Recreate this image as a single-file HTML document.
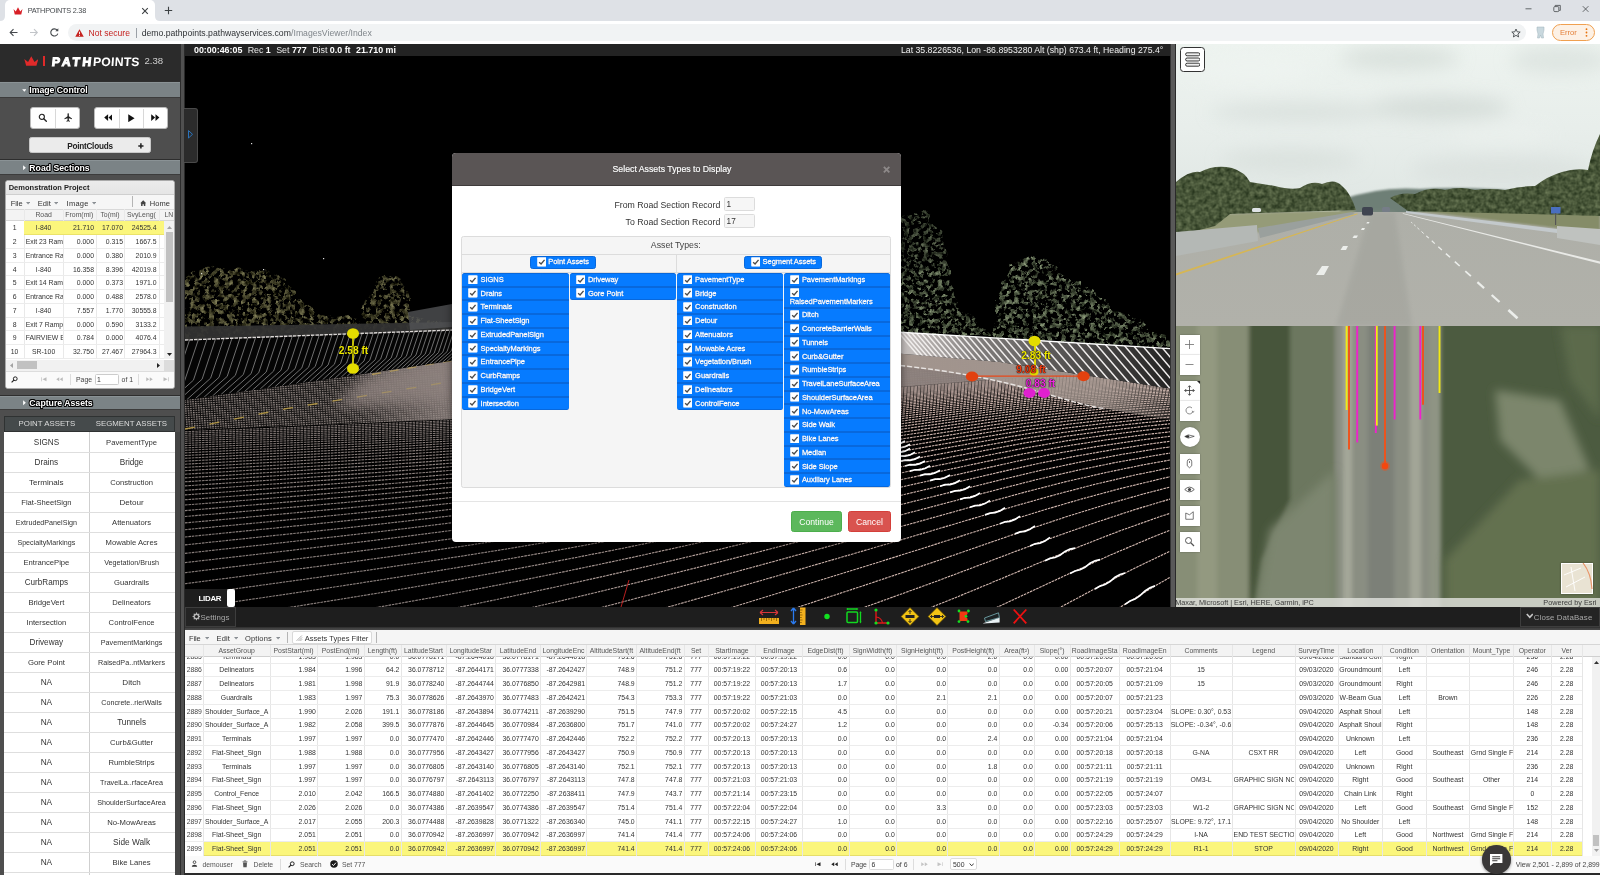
<!DOCTYPE html>
<html lang="en"><head><meta charset="utf-8"><title>PATHPOINTS 2.38</title>
<style>
*{box-sizing:border-box}
html,body{margin:0;padding:0}
body{will-change:transform;width:1600px;height:875px;overflow:hidden;background:#3f3f3f;font-family:"Liberation Sans",sans-serif;position:relative;color:#222}
.a{position:absolute}
.t{position:absolute;white-space:nowrap;line-height:1}
svg{display:block}
/* chrome */
#tabstrip{left:0;top:0;width:1600px;height:21px;background:#dee1e6}
#tab{left:5px;top:0;width:150px;height:21px;background:#fff;border-radius:5px 5px 0 0}
#tbar{left:0;top:21px;width:1600px;height:23px;background:#fff}
#omni{left:68px;top:24px;width:1458px;height:17px;border-radius:9px;background:#f1f3f4}
/* sidebar */
#side{left:0;top:44px;width:180px;height:831px;background:#4e4e4e}
#logo{left:0;top:0;width:180px;height:37px;background:#2b2b2b}
.sh{left:0;width:180px;height:16px;background:#7b8386;border-top:1px solid #333;border-bottom:1px solid #3a3a3a}
.sh span{position:absolute;left:29px;top:2px;font-size:10.3px;font-weight:bold;color:#fff;white-space:nowrap;line-height:1;text-shadow:-0.7px -0.7px 0.3px #000,0.7px -0.7px 0.3px #000,-0.7px 0.7px 0.3px #000,0.7px 0.7px 0.3px #000,0 0.9px 0.3px #000,0 -0.9px 0.3px #000}
.bg{background:#fff;border-radius:3px;border:1px solid #ccc}
</style></head><body>

<div class="a" id="tabstrip"></div><div class="a" id="tab"></div><div class="a" id="tbar"></div><div class="a" id="omni"></div>
<svg class="a" style="left:0;top:0" width="170" height="21"><path d="M0 21 Q5 21 5 16 L5 21Z M160 21 Q155 21 155 16 L155 21Z" fill="#fff"/></svg>
<svg class="a" style="left:12.5px;top:6.5px" width="10" height="8" viewBox="0 0 20 16"><path d="M1 4 L5.5 9 L10 0.5 L14.5 9 L19 4 L16.5 15 L3.5 15Z" fill="#d81f26"/></svg>
<span class="t" style="left:27.70px;top:7.00px;font-size:7.300px;color:#45494d;letter-spacing:-0.233px;">PATHPOINTS 2.38</span>
<svg class="a" style="left:141px;top:7px" width="8" height="8" viewBox="0 0 8 8"><path d="M1.2 1.2L6.8 6.8M6.8 1.2L1.2 6.8" stroke="#3c4043" stroke-width="1.1"/></svg>
<svg class="a" style="left:164px;top:6px" width="9" height="9" viewBox="0 0 9 9"><path d="M4.5 0.8V8.2M0.8 4.5H8.2" stroke="#3c4043" stroke-width="1.1"/></svg>
<svg class="a" style="left:1520px;top:3px" width="76" height="14" viewBox="0 0 76 14"><path d="M5.5 5.8H11.5" stroke="#44474a" stroke-width="0.8" fill="none"/><rect x="33.8" y="3.6" width="5" height="5" rx="1" stroke="#44474a" stroke-width="0.8" fill="none"/><path d="M35.2 3.4V2.4H40.3V7.4H39.2" stroke="#44474a" stroke-width="0.8" fill="none"/><path d="M62.8 3.2L68.4 8.8M68.4 3.2L62.8 8.8" stroke="#44474a" stroke-width="0.8"/></svg>
<svg class="a" style="left:8px;top:26px" width="60" height="13" viewBox="0 0 60 13"><g fill="none" stroke-width="1.1"><path d="M9.5 6.5H2.5M5.5 3.2L2.2 6.5L5.5 9.8" stroke="#45494d"/><path d="M22 6.5H29M26 3.2L29.3 6.5L26 9.8" stroke="#c2c5c9"/><path d="M49.2 4.2A3.6 3.6 0 1 0 49.8 7.6" stroke="#45494d"/></g><path d="M50.3 2.3V5.3H47.3Z" fill="#45494d"/></svg>
<svg class="a" style="left:74.5px;top:28.6px" width="9" height="8" viewBox="0 0 18 16"><path d="M9 0.5L17.5 15.5H0.5Z" fill="#c5221f"/><path d="M9 5.5V10.5M9 12V13.8" stroke="#fff" stroke-width="1.8"/></svg>
<span class="t" style="left:88.60px;top:29.00px;font-size:8.560px;color:#c5221f;letter-spacing:0.001px;">Not secure</span>
<div class="a " style="left:135.60px;top:27.50px;width:0.80px;height:10.00px;background:#9aa0a6"></div>
<span class="t" style="left:141.70px;top:29.00px;font-size:8.670px;color:#303336;">demo.pathpoints.pathwayservices.com</span>
<span class="t" style="left:291.08px;top:29.00px;font-size:8.670px;color:#80868b;">/ImagesViewer/Index</span>
<svg class="a" style="left:1510.5px;top:27.5px" width="10" height="10" viewBox="0 0 20 20"><path d="M10 2L12.4 7.6L18.4 8.1L13.8 12L15.2 17.9L10 14.7L4.8 17.9L6.2 12L1.6 8.1L7.6 7.6Z" fill="none" stroke="#45494d" stroke-width="1.8"/></svg>
<svg class="a" style="left:1535px;top:26px" width="11" height="13" viewBox="0 0 11 13"><path d="M2 1H9V4L8 8L8.5 12H6.5L5.5 9L4.5 12H2.5L3 8L2 4Z" fill="#c9d8de" stroke="#9fb2ba" stroke-width="0.5"/></svg>
<div class="a " style="left:1552.00px;top:23.80px;width:43.00px;height:16.80px;border:1px solid #f0a050;border-radius:9px;background:#fdf1e5"></div>
<span class="t" style="left:1560.00px;top:29.00px;font-size:7.600px;color:#e3803a;">Error</span>
<svg class="a" style="left:1585px;top:28px" width="3" height="9" viewBox="0 0 3 9"><circle cx="1.5" cy="1.2" r="0.9" fill="#e8710a"/><circle cx="1.5" cy="4.5" r="0.9" fill="#e8710a"/><circle cx="1.5" cy="7.8" r="0.9" fill="#e8710a"/></svg>
<div class="a" id="side"><div class="a" id="logo"></div></div>
<div class="a " style="left:180.00px;top:44.00px;width:5.00px;height:831.00px;background:#505050;border-left:1px solid #2c2c2c;border-right:0.6px solid #2a2a2a"></div>
<svg class="a" style="left:23.8px;top:55.8px" width="14.6" height="9.9" viewBox="0 0 27 21" preserveAspectRatio="none"><path d="M0.5 6.5 L7.5 12.5 L13.5 0.5 L19.5 12.5 L26.5 6.5 L23 20.5 L4 20.5Z" fill="#e02a2a"/></svg>
<div class="a " style="left:43.40px;top:56.40px;width:1.80px;height:9.80px;background:#e02a2a"></div>
<span class="t" style="left:52.00px;top:56.00px;font-size:12.200px;color:#fff;font-weight:bold;letter-spacing:2.650px;-webkit-text-stroke:1px #fff;transform:skewX(-6deg);">PATH</span>
<span class="t" style="left:92.60px;top:56.00px;font-size:12.200px;color:#fff;font-weight:bold;letter-spacing:0.231px;transform:skewX(-4deg);">POINTS</span>
<span class="t" style="left:144.60px;top:56.00px;font-size:9.600px;color:#cfcfcf;letter-spacing:-0.071px;">2.38</span>
<div class="a " style="left:0.00px;top:82.00px;width:180.00px;height:15.90px;background:#7b8386;border-top:0.8px solid #8a9295;border-bottom:0.6px solid #3c3c3c"></div><div class="a " style="left:0.00px;top:80.80px;width:180.00px;height:1.20px;background:#2e2e2e"></div><svg class="a" style="left:21.8px;top:88.50px" width="4.6" height="3" viewBox="0 0 6 4"><path d="M0.2 0.2H5.8L3 3.8Z" fill="#fff"/></svg><span class="t" style="left:29.30px;top:86.00px;font-size:8.700px;color:#fff;font-weight:bold;text-shadow:-0.8px -0.8px 0.2px #000,0.8px -0.8px 0.2px #000,-0.8px 0.8px 0.2px #000,0.8px 0.8px 0.2px #000,0 1px 0.2px #000,0 -1px 0.2px #000,1px 0 0.2px #000,-1px 0 0.2px #000;">Image Control</span>
<div class="a " style="left:0.00px;top:160.20px;width:180.00px;height:14.70px;background:#7b8386;border-top:0.8px solid #8a9295;border-bottom:0.6px solid #3c3c3c"></div><div class="a " style="left:0.00px;top:159.00px;width:180.00px;height:1.20px;background:#2e2e2e"></div><svg class="a" style="left:23.4px;top:164.80px" width="3" height="5.400" viewBox="0 0 4 7"><path d="M0.2 0.2V6.8L3.8 3.500Z" fill="#fff"/></svg><span class="t" style="left:29.30px;top:164.00px;font-size:8.700px;color:#fff;font-weight:bold;text-shadow:-0.8px -0.8px 0.2px #000,0.8px -0.8px 0.2px #000,-0.8px 0.8px 0.2px #000,0.8px 0.8px 0.2px #000,0 1px 0.2px #000,0 -1px 0.2px #000,1px 0 0.2px #000,-1px 0 0.2px #000;">Road Sections</span>
<div class="a " style="left:0.00px;top:396.20px;width:180.00px;height:14.20px;background:#7b8386;border-top:0.8px solid #8a9295;border-bottom:0.6px solid #3c3c3c"></div><div class="a " style="left:0.00px;top:395.00px;width:180.00px;height:1.20px;background:#2e2e2e"></div><svg class="a" style="left:23.4px;top:400.20px" width="3" height="5.400" viewBox="0 0 4 7"><path d="M0.2 0.2V6.8L3.8 3.500Z" fill="#fff"/></svg><span class="t" style="left:29.30px;top:399.00px;font-size:8.700px;color:#fff;font-weight:bold;text-shadow:-0.8px -0.8px 0.2px #000,0.8px -0.8px 0.2px #000,-0.8px 0.8px 0.2px #000,0.8px 0.8px 0.2px #000,0 1px 0.2px #000,0 -1px 0.2px #000,1px 0 0.2px #000,-1px 0 0.2px #000;">Capture Assets</span>
<div class="a " style="left:30.20px;top:107.30px;width:49.40px;height:21.60px;background:#fff;border-radius:3px;border:0.6px solid #bbb"></div>
<div class="a " style="left:54.60px;top:108.50px;width:0.70px;height:19.20px;background:#d8d8d8"></div>
<div class="a " style="left:94.30px;top:107.30px;width:74.20px;height:21.60px;background:#fff;border-radius:3px;border:0.6px solid #bbb"></div>
<div class="a " style="left:119.20px;top:108.50px;width:0.70px;height:19.20px;background:#d8d8d8"></div>
<div class="a " style="left:143.20px;top:108.50px;width:0.70px;height:19.20px;background:#d8d8d8"></div>
<svg class="a" style="left:38.4px;top:112.8px" width="9.4" height="9.4" viewBox="0 0 22 22"><circle cx="9" cy="9" r="6" fill="none" stroke="#222" stroke-width="2.6"/><path d="M13.5 13.5L19.5 19.5" stroke="#222" stroke-width="3.2" stroke-linecap="round"/></svg>
<svg class="a" style="left:63.7px;top:113px" width="8.4" height="8.8" viewBox="0 0 21 22"><path d="M10.5 0.5C11.8 0.5 12.2 2 12.2 3.5V8L20 13.5V15.8L12.2 13V18L14.8 20V21.6L10.5 20.4L6.2 21.6V20L8.8 18V13L1 15.8V13.5L8.8 8V3.5C8.8 2 9.2 0.5 10.5 0.5Z" fill="#222"/></svg>
<svg class="a" style="left:103.9px;top:114.1px" width="8.6" height="7.2" viewBox="0 0 22 18" preserveAspectRatio="none"><path d="M10.5 0.5V17.5L0.5 9Z M21.5 0.5V17.5L11.5 9Z" fill="#111"/></svg>
<svg class="a" style="left:128.2px;top:113.5px" width="6.8" height="8.4" viewBox="0 0 15 20" preserveAspectRatio="none"><path d="M0.5 0.5V19.5L14.5 10Z" fill="#111"/></svg>
<svg class="a" style="left:151px;top:114.1px" width="8.6" height="7.2" viewBox="0 0 22 18" preserveAspectRatio="none"><path d="M0.5 0.5V17.5L10.5 9Z M11.5 0.5V17.5L21.5 9Z" fill="#111"/></svg>
<div class="a " style="left:29.00px;top:137.00px;width:122.00px;height:16.40px;background:#ebebeb;border-radius:2.5px;border:0.6px solid #c8c8c8"></div>
<span class="t" style="left:67.20px;top:143.00px;font-size:8.200px;color:#222;font-weight:bold;letter-spacing:-0.244px;">PointClouds</span>
<svg class="a" style="left:138.3px;top:142.9px" width="5.8" height="5.8" viewBox="0 0 10 10"><path d="M5 0.5V9.5M0.5 5H9.5" stroke="#222" stroke-width="2.6"/></svg>
<div class="a " style="left:5.40px;top:180.00px;width:169.60px;height:208.60px;background:#fff;border-radius:3px;border:0.6px solid #aaa;overflow:hidden"></div>
<div class="a " style="left:6.00px;top:180.60px;width:168.40px;height:14.00px;background:linear-gradient(#ececec,#e5e5e5);border-bottom:0.6px solid #cfcfcf;border-radius:2.5px 2.5px 0 0"></div>
<span class="t" style="left:8.70px;top:184.00px;font-size:7.500px;color:#222;font-weight:bold;letter-spacing:0.018px;">Demonstration Project</span>
<div class="a " style="left:6.00px;top:194.60px;width:168.40px;height:15.10px;background:#f6f6f6;border-bottom:0.6px solid #d9d9d9"></div>
<span class="t" style="left:10.70px;top:200.00px;font-size:7.500px;color:#333;letter-spacing:-0.046px;">File</span><svg class="a" style="left:26.00px;top:202.10px" width="4.2" height="2.6" viewBox="0 0 8 5"><path d="M0 0H8L4 5Z" fill="#8a8f94"/></svg>
<span class="t" style="left:37.70px;top:200.00px;font-size:7.500px;color:#333;letter-spacing:0.069px;">Edit</span><svg class="a" style="left:54.30px;top:202.10px" width="4.2" height="2.6" viewBox="0 0 8 5"><path d="M0 0H8L4 5Z" fill="#8a8f94"/></svg>
<span class="t" style="left:66.60px;top:200.00px;font-size:7.500px;color:#333;letter-spacing:0.231px;">Image</span><svg class="a" style="left:92.00px;top:202.10px" width="4.2" height="2.6" viewBox="0 0 8 5"><path d="M0 0H8L4 5Z" fill="#8a8f94"/></svg>
<div class="a " style="left:132.00px;top:196.00px;width:0.70px;height:11.00px;background:#b5b5b5"></div>
<svg class="a" style="left:139.6px;top:200px" width="6.4" height="6.4" viewBox="0 0 12 12"><path d="M6 0.5L11.5 6H10V11.5H7.2V7.8H4.8V11.5H2V6H0.5Z" fill="#444"/></svg>
<span class="t" style="left:149.80px;top:200.00px;font-size:7.500px;color:#333;letter-spacing:-0.001px;">Home</span>
<div class="a " style="left:6.00px;top:209.70px;width:168.40px;height:11.10px;background:#f3f3f3;border-bottom:0.6px solid #d6d6d6"></div>
<div class="a " style="left:24.30px;top:209.40px;width:0.60px;height:149.20px;background:#e9e9e9"></div>
<div class="a " style="left:62.90px;top:209.40px;width:0.60px;height:149.20px;background:#e9e9e9"></div>
<div class="a " style="left:95.70px;top:209.40px;width:0.60px;height:149.20px;background:#e9e9e9"></div>
<div class="a " style="left:124.30px;top:209.40px;width:0.60px;height:149.20px;background:#e9e9e9"></div>
<div class="a " style="left:158.60px;top:209.40px;width:0.60px;height:149.20px;background:#e9e9e9"></div>
<span class="t" style="left:35.38px;top:212.00px;font-size:6.875px;color:#555;">Road</span>
<span class="t" style="left:65.36px;top:212.00px;font-size:6.875px;color:#555;">From(mi)</span>
<span class="t" style="left:100.45px;top:212.00px;font-size:6.875px;color:#555;">To(mi)</span>
<span class="t" style="left:126.88px;top:212.00px;font-size:6.875px;color:#555;">SvyLeng(</span>
<span class="t" style="left:164.50px;top:212.00px;font-size:6.875px;color:#555;">LN</span>
<div class="a " style="left:24.30px;top:221.00px;width:139.70px;height:13.75px;background:#fbf67c;border-bottom:0.6px solid #ebe36a"></div>
<span class="t" style="left:12.69px;top:225.00px;font-size:6.875px;color:#333;">1</span>
<span class="t" style="left:35.77px;top:225.00px;font-size:6.875px;color:#333;">I-840</span>
<span class="t" style="left:72.97px;top:225.00px;font-size:6.875px;color:#333;">21.710</span>
<span class="t" style="left:101.97px;top:225.00px;font-size:6.875px;color:#333;">17.070</span>
<span class="t" style="left:131.75px;top:225.00px;font-size:6.875px;color:#333;">24525.4</span>
<div class="a " style="left:6.00px;top:247.90px;width:158.00px;height:0.60px;background:#ececec"></div>
<span class="t" style="left:12.69px;top:239.00px;font-size:6.875px;color:#333;">2</span>
<div class="a" style="left:25.70px;top:235px;width:36.90px;height:12px;overflow:hidden"><span class="t" style="left:0.00px;top:4.00px;font-size:6.875px;color:#333;">Exit 23 Ram</span></div>
<span class="t" style="left:76.80px;top:239.00px;font-size:6.875px;color:#333;">0.000</span>
<span class="t" style="left:105.80px;top:239.00px;font-size:6.875px;color:#333;">0.315</span>
<span class="t" style="left:135.57px;top:239.00px;font-size:6.875px;color:#333;">1667.5</span>
<div class="a " style="left:6.00px;top:261.65px;width:158.00px;height:0.60px;background:#ececec"></div>
<span class="t" style="left:12.69px;top:253.00px;font-size:6.875px;color:#333;">3</span>
<div class="a" style="left:25.70px;top:249px;width:36.90px;height:12px;overflow:hidden"><span class="t" style="left:0.00px;top:4.00px;font-size:6.875px;color:#333;">Entrance Ra</span></div>
<span class="t" style="left:76.80px;top:253.00px;font-size:6.875px;color:#333;">0.000</span>
<span class="t" style="left:105.80px;top:253.00px;font-size:6.875px;color:#333;">0.380</span>
<span class="t" style="left:135.57px;top:253.00px;font-size:6.875px;color:#333;">2010.9</span>
<div class="a " style="left:6.00px;top:275.40px;width:158.00px;height:0.60px;background:#ececec"></div>
<span class="t" style="left:12.69px;top:267.00px;font-size:6.875px;color:#333;">4</span>
<span class="t" style="left:35.77px;top:267.00px;font-size:6.875px;color:#333;">I-840</span>
<span class="t" style="left:72.97px;top:267.00px;font-size:6.875px;color:#333;">16.358</span>
<span class="t" style="left:105.80px;top:267.00px;font-size:6.875px;color:#333;">8.396</span>
<span class="t" style="left:131.75px;top:267.00px;font-size:6.875px;color:#333;">42019.8</span>
<div class="a " style="left:6.00px;top:289.15px;width:158.00px;height:0.60px;background:#ececec"></div>
<span class="t" style="left:12.69px;top:280.00px;font-size:6.875px;color:#333;">5</span>
<div class="a" style="left:25.70px;top:277px;width:36.90px;height:12px;overflow:hidden"><span class="t" style="left:0.00px;top:3.00px;font-size:6.875px;color:#333;">Exit 14 Ram</span></div>
<span class="t" style="left:76.80px;top:280.00px;font-size:6.875px;color:#333;">0.000</span>
<span class="t" style="left:105.80px;top:280.00px;font-size:6.875px;color:#333;">0.373</span>
<span class="t" style="left:135.57px;top:280.00px;font-size:6.875px;color:#333;">1971.0</span>
<div class="a " style="left:6.00px;top:302.90px;width:158.00px;height:0.60px;background:#ececec"></div>
<span class="t" style="left:12.69px;top:294.00px;font-size:6.875px;color:#333;">6</span>
<div class="a" style="left:25.70px;top:290px;width:36.90px;height:12px;overflow:hidden"><span class="t" style="left:0.00px;top:4.00px;font-size:6.875px;color:#333;">Entrance Ra</span></div>
<span class="t" style="left:76.80px;top:294.00px;font-size:6.875px;color:#333;">0.000</span>
<span class="t" style="left:105.80px;top:294.00px;font-size:6.875px;color:#333;">0.488</span>
<span class="t" style="left:135.57px;top:294.00px;font-size:6.875px;color:#333;">2578.0</span>
<div class="a " style="left:6.00px;top:316.65px;width:158.00px;height:0.60px;background:#ececec"></div>
<span class="t" style="left:12.69px;top:308.00px;font-size:6.875px;color:#333;">7</span>
<span class="t" style="left:35.77px;top:308.00px;font-size:6.875px;color:#333;">I-840</span>
<span class="t" style="left:76.80px;top:308.00px;font-size:6.875px;color:#333;">7.557</span>
<span class="t" style="left:105.80px;top:308.00px;font-size:6.875px;color:#333;">1.770</span>
<span class="t" style="left:131.75px;top:308.00px;font-size:6.875px;color:#333;">30555.8</span>
<div class="a " style="left:6.00px;top:330.40px;width:158.00px;height:0.60px;background:#ececec"></div>
<span class="t" style="left:12.69px;top:322.00px;font-size:6.875px;color:#333;">8</span>
<div class="a" style="left:25.70px;top:318px;width:36.90px;height:12px;overflow:hidden"><span class="t" style="left:0.00px;top:4.00px;font-size:6.875px;color:#333;">Exit 7 Ramp</span></div>
<span class="t" style="left:76.80px;top:322.00px;font-size:6.875px;color:#333;">0.000</span>
<span class="t" style="left:105.80px;top:322.00px;font-size:6.875px;color:#333;">0.590</span>
<span class="t" style="left:135.57px;top:322.00px;font-size:6.875px;color:#333;">3133.2</span>
<div class="a " style="left:6.00px;top:344.15px;width:158.00px;height:0.60px;background:#ececec"></div>
<span class="t" style="left:12.69px;top:335.00px;font-size:6.875px;color:#333;">9</span>
<div class="a" style="left:25.70px;top:332px;width:36.90px;height:12px;overflow:hidden"><span class="t" style="left:0.00px;top:3.00px;font-size:6.875px;color:#333;">FAIRVIEW E</span></div>
<span class="t" style="left:76.80px;top:335.00px;font-size:6.875px;color:#333;">0.784</span>
<span class="t" style="left:105.80px;top:335.00px;font-size:6.875px;color:#333;">0.000</span>
<span class="t" style="left:135.57px;top:335.00px;font-size:6.875px;color:#333;">4076.4</span>
<div class="a " style="left:6.00px;top:357.90px;width:158.00px;height:0.60px;background:#ececec"></div>
<span class="t" style="left:10.78px;top:349.00px;font-size:6.875px;color:#333;">10</span>
<span class="t" style="left:31.95px;top:349.00px;font-size:6.875px;color:#333;">SR-100</span>
<span class="t" style="left:72.97px;top:349.00px;font-size:6.875px;color:#333;">32.750</span>
<span class="t" style="left:101.97px;top:349.00px;font-size:6.875px;color:#333;">27.467</span>
<span class="t" style="left:131.75px;top:349.00px;font-size:6.875px;color:#333;">27964.3</span>
<div class="a " style="left:164.30px;top:221.00px;width:9.60px;height:137.60px;background:#f1f1f1"></div>
<div class="a " style="left:165.60px;top:232.30px;width:7.00px;height:69.70px;background:#c1c1c1"></div>
<svg class="a" style="left:166.6px;top:225.5px" width="5" height="3" viewBox="0 0 10 6"><path d="M0 6H10L5 0Z" fill="#a3a3a3"/></svg>
<svg class="a" style="left:166.6px;top:352.8px" width="5" height="3" viewBox="0 0 10 6"><path d="M0 0H10L5 6Z" fill="#222"/></svg>
<div class="a " style="left:6.00px;top:359.80px;width:158.30px;height:10.80px;background:#f1f1f1"></div>
<div class="a " style="left:164.30px;top:359.80px;width:9.60px;height:10.80px;background:#dcdcdc"></div>
<div class="a " style="left:16.60px;top:361.00px;width:20.60px;height:8.20px;background:#c1c1c1"></div>
<svg class="a" style="left:9.6px;top:362.6px" width="3" height="5" viewBox="0 0 6 10"><path d="M6 0V10L0 5Z" fill="#a3a3a3"/></svg>
<svg class="a" style="left:157.2px;top:362.6px" width="3" height="5" viewBox="0 0 6 10"><path d="M0 0V10L6 5Z" fill="#222"/></svg>
<div class="a " style="left:6.00px;top:370.60px;width:168.40px;height:17.40px;background:#fafafa;border-top:0.6px solid #ddd;border-radius:0 0 2.5px 2.5px"></div>
<svg class="a" style="left:11.2px;top:376px" width="7" height="7" viewBox="0 0 14 14"><circle cx="8.5" cy="5.5" r="3.8" fill="none" stroke="#222" stroke-width="2"/><path d="M5.8 8.2L1.2 12.8" stroke="#222" stroke-width="2.4"/></svg>
<svg class="a" style="left:41px;top:377.2px" width="6" height="4.6" viewBox="0 0 12 9"><path d="M0.5 0.5V8.5" stroke="#bbb" stroke-width="1.6"/><path d="M11 0.5V8.5L3 4.5Z" fill="#bbb"/></svg>
<svg class="a" style="left:56.4px;top:377.2px" width="7" height="4.6" viewBox="0 0 14 9"><path d="M6.5 0.5V8.5L0.5 4.5Z M13.5 0.5V8.5L7.5 4.5Z" fill="#bbb"/></svg>
<div class="a " style="left:70.00px;top:373.80px;width:0.60px;height:11.00px;background:#ddd"></div>
<span class="t" style="left:76.00px;top:377.00px;font-size:6.875px;color:#444;">Page</span>
<div class="a " style="left:95.00px;top:373.60px;width:24.40px;height:11.40px;background:#fff;border:0.6px solid #ccc;border-radius:1.5px"></div>
<span class="t" style="left:97.00px;top:377.00px;font-size:6.875px;color:#333;">1</span>
<span class="t" style="left:121.60px;top:377.00px;font-size:6.875px;color:#444;">of 1</span>
<div class="a " style="left:138.00px;top:373.80px;width:0.60px;height:11.00px;background:#ddd"></div>
<svg class="a" style="left:146px;top:377.2px" width="7" height="4.6" viewBox="0 0 14 9"><path d="M0.5 0.5V8.5L6.5 4.5Z M7.5 0.5V8.5L13.5 4.5Z" fill="#bbb"/></svg>
<svg class="a" style="left:163px;top:377.2px" width="6" height="4.6" viewBox="0 0 12 9"><path d="M11.5 0.5V8.5" stroke="#bbb" stroke-width="1.6"/><path d="M1 0.5V8.5L9 4.5Z" fill="#bbb"/></svg>
<div class="a " style="left:174.00px;top:432.00px;width:6.00px;height:443.00px;background:#444444"></div>
<div class="a " style="left:4.00px;top:416.30px;width:170.60px;height:15.40px;background:#454a4b;border:0.6px solid #2f3232"></div>
<span class="t" style="left:18.62px;top:420.00px;font-size:7.850px;color:#dcdcdc;">POINT ASSETS</span>
<span class="t" style="left:95.70px;top:420.00px;font-size:7.850px;color:#dcdcdc;">SEGMENT ASSETS</span>
<div class="a " style="left:4.00px;top:431.60px;width:170.60px;height:443.40px;background:#fff"></div>
<div class="a " style="left:88.60px;top:431.60px;width:0.80px;height:443.40px;background:#cfcfcf"></div>
<div class="a " style="left:4.00px;top:451.60px;width:170.60px;height:0.70px;background:#dedede"></div>
<span class="t" style="left:33.70px;top:439.00px;font-size:8.160px;color:#333;">SIGNS</span>
<span class="t" style="left:106.05px;top:439.00px;font-size:7.660px;color:#333;">PavementType</span>
<div class="a " style="left:4.00px;top:471.60px;width:170.60px;height:0.70px;background:#dedede"></div>
<span class="t" style="left:34.55px;top:459.00px;font-size:8.200px;color:#333;">Drains</span>
<span class="t" style="left:119.75px;top:459.00px;font-size:8.200px;color:#333;">Bridge</span>
<div class="a " style="left:4.00px;top:491.60px;width:170.60px;height:0.70px;background:#dedede"></div>
<span class="t" style="left:29.09px;top:479.00px;font-size:8.090px;color:#333;">Terminals</span>
<span class="t" style="left:110.16px;top:479.00px;font-size:7.640px;color:#333;">Construction</span>
<div class="a " style="left:4.00px;top:511.60px;width:170.60px;height:0.70px;background:#dedede"></div>
<span class="t" style="left:21.27px;top:499.00px;font-size:7.600px;color:#333;">Flat-SheetSign</span>
<span class="t" style="left:119.44px;top:499.00px;font-size:8.100px;color:#333;">Detour</span>
<div class="a " style="left:4.00px;top:531.60px;width:170.60px;height:0.70px;background:#dedede"></div>
<span class="t" style="left:15.71px;top:520.00px;font-size:7.170px;color:#333;">ExtrudedPanelSign</span>
<span class="t" style="left:112.04px;top:519.00px;font-size:7.650px;color:#333;">Attenuators</span>
<div class="a " style="left:4.00px;top:551.60px;width:170.60px;height:0.70px;background:#dedede"></div>
<span class="t" style="left:17.39px;top:540.00px;font-size:7.150px;color:#333;">SpecialtyMarkings</span>
<span class="t" style="left:105.60px;top:539.00px;font-size:7.670px;color:#333;">Mowable Acres</span>
<div class="a " style="left:4.00px;top:571.60px;width:170.60px;height:0.70px;background:#dedede"></div>
<span class="t" style="left:23.41px;top:559.00px;font-size:7.660px;color:#333;">EntrancePipe</span>
<span class="t" style="left:104.14px;top:559.00px;font-size:7.210px;color:#333;">Vegetation/Brush</span>
<div class="a " style="left:4.00px;top:591.60px;width:170.60px;height:0.70px;background:#dedede"></div>
<span class="t" style="left:24.69px;top:579.00px;font-size:8.140px;color:#333;">CurbRamps</span>
<span class="t" style="left:114.05px;top:579.00px;font-size:7.610px;color:#333;">Guardrails</span>
<div class="a " style="left:4.00px;top:611.60px;width:170.60px;height:0.70px;background:#dedede"></div>
<span class="t" style="left:28.40px;top:599.00px;font-size:7.710px;color:#333;">BridgeVert</span>
<span class="t" style="left:112.30px;top:599.00px;font-size:7.630px;color:#333;">Delineators</span>
<div class="a " style="left:4.00px;top:631.60px;width:170.60px;height:0.70px;background:#dedede"></div>
<span class="t" style="left:26.55px;top:619.00px;font-size:7.680px;color:#333;">Intersection</span>
<span class="t" style="left:108.61px;top:619.00px;font-size:7.660px;color:#333;">ControlFence</span>
<div class="a " style="left:4.00px;top:651.60px;width:170.60px;height:0.70px;background:#dedede"></div>
<span class="t" style="left:29.60px;top:639.00px;font-size:8.170px;color:#333;">Driveway</span>
<span class="t" style="left:100.79px;top:639.00px;font-size:7.200px;color:#333;">PavementMarkings</span>
<div class="a " style="left:4.00px;top:671.60px;width:170.60px;height:0.70px;background:#dedede"></div>
<span class="t" style="left:27.90px;top:659.00px;font-size:7.740px;color:#333;">Gore Point</span>
<span class="t" style="left:97.99px;top:659.00px;font-size:7.200px;color:#333;">RaisedPa..ntMarkers</span>
<div class="a " style="left:4.00px;top:691.60px;width:170.60px;height:0.70px;background:#dedede"></div>
<span class="t" style="left:40.65px;top:679.00px;font-size:8.280px;color:#333;">NA</span>
<span class="t" style="left:122.35px;top:679.00px;font-size:8.120px;color:#333;">Ditch</span>
<div class="a " style="left:4.00px;top:711.60px;width:170.60px;height:0.70px;background:#dedede"></div>
<span class="t" style="left:40.65px;top:699.00px;font-size:8.280px;color:#333;">NA</span>
<span class="t" style="left:101.34px;top:700.00px;font-size:7.150px;color:#333;">Concrete..rierWalls</span>
<div class="a " style="left:4.00px;top:731.60px;width:170.60px;height:0.70px;background:#dedede"></div>
<span class="t" style="left:40.65px;top:719.00px;font-size:8.280px;color:#333;">NA</span>
<span class="t" style="left:117.15px;top:719.00px;font-size:8.210px;color:#333;">Tunnels</span>
<div class="a " style="left:4.00px;top:751.60px;width:170.60px;height:0.70px;background:#dedede"></div>
<span class="t" style="left:40.65px;top:739.00px;font-size:8.280px;color:#333;">NA</span>
<span class="t" style="left:110.05px;top:739.00px;font-size:7.680px;color:#333;">Curb&amp;Gutter</span>
<div class="a " style="left:4.00px;top:771.60px;width:170.60px;height:0.70px;background:#dedede"></div>
<span class="t" style="left:40.65px;top:759.00px;font-size:8.280px;color:#333;">NA</span>
<span class="t" style="left:108.49px;top:759.00px;font-size:7.700px;color:#333;">RumbleStrips</span>
<div class="a " style="left:4.00px;top:791.60px;width:170.60px;height:0.70px;background:#dedede"></div>
<span class="t" style="left:40.65px;top:779.00px;font-size:8.280px;color:#333;">NA</span>
<span class="t" style="left:100.12px;top:779.00px;font-size:7.200px;color:#333;">TravelLa..rfaceArea</span>
<div class="a " style="left:4.00px;top:811.60px;width:170.60px;height:0.70px;background:#dedede"></div>
<span class="t" style="left:40.65px;top:799.00px;font-size:8.280px;color:#333;">NA</span>
<span class="t" style="left:97.28px;top:800.00px;font-size:7.180px;color:#333;">ShoulderSurfaceArea</span>
<div class="a " style="left:4.00px;top:831.60px;width:170.60px;height:0.70px;background:#dedede"></div>
<span class="t" style="left:40.65px;top:819.00px;font-size:8.280px;color:#333;">NA</span>
<span class="t" style="left:107.24px;top:819.00px;font-size:7.690px;color:#333;">No-MowAreas</span>
<div class="a " style="left:4.00px;top:851.60px;width:170.60px;height:0.70px;background:#dedede"></div>
<span class="t" style="left:40.65px;top:839.00px;font-size:8.280px;color:#333;">NA</span>
<span class="t" style="left:113.10px;top:838.00px;font-size:8.290px;color:#333;">Side Walk</span>
<div class="a " style="left:4.00px;top:871.60px;width:170.60px;height:0.70px;background:#dedede"></div>
<span class="t" style="left:40.65px;top:859.00px;font-size:8.280px;color:#333;">NA</span>
<span class="t" style="left:112.55px;top:859.00px;font-size:7.700px;color:#333;">Bike Lanes</span>
<div class="a " style="left:185.00px;top:44.00px;width:985.00px;height:563.00px;background:#000;overflow:hidden"></div>
<svg class="a" style="left:185px;top:44px" width="985" height="563" viewBox="185 44 985 563">
<defs>
<filter id="tree" color-interpolation-filters="sRGB" x="-5%" y="-5%" width="110%" height="110%"><feTurbulence type="fractalNoise" baseFrequency="0.06" numOctaves="2" seed="11" result="n1"/><feDisplacementMap in="SourceGraphic" in2="n1" scale="16" xChannelSelector="R" yChannelSelector="G" result="sh"/><feTurbulence type="fractalNoise" baseFrequency="0.21" numOctaves="3" seed="4" result="n"/><feColorMatrix in="n" type="matrix" values="0.74 0 0 0 -0.11  0.73 0 0 0 -0.11  0.56 0 0 0 -0.12  0 0 0 10 -4.6" result="c"/><feComposite in="c" in2="sh" operator="in"/></filter><filter id="tree2" color-interpolation-filters="sRGB" x="-5%" y="-5%" width="110%" height="110%"><feTurbulence type="fractalNoise" baseFrequency="0.06" numOctaves="2" seed="2" result="n1"/><feDisplacementMap in="SourceGraphic" in2="n1" scale="16" xChannelSelector="R" yChannelSelector="G" result="sh"/><feTurbulence type="fractalNoise" baseFrequency="0.21" numOctaves="3" seed="8" result="n"/><feColorMatrix in="n" type="matrix" values="0.80 0 0 0 -0.12  0.86 0 0 0 -0.11  0.72 0 0 0 -0.12  0 0 0 10 -4.7" result="c"/><feComposite in="c" in2="sh" operator="in"/></filter>
<filter id="rough" color-interpolation-filters="sRGB" x="-5%" y="-5%" width="110%" height="110%"><feTurbulence type="fractalNoise" baseFrequency="0.5" numOctaves="2" seed="9" result="n"/><feColorMatrix in="n" type="matrix" values="0 0 0 0 0.72  0 0 0 0 0.64  0 0 0 0 0.62  0 0 0 6 -2.7" result="c"/><feComposite in="c" in2="SourceGraphic" operator="in"/></filter>
<linearGradient id="gfar" x1="0" y1="335" x2="0" y2="500" gradientUnits="userSpaceOnUse"><stop offset="0" stop-color="#a39490" stop-opacity="0.8"/><stop offset="0.35" stop-color="#9a8b88" stop-opacity="0.46"/><stop offset="0.7" stop-color="#958683" stop-opacity="0.16"/><stop offset="1" stop-color="#958683" stop-opacity="0"/></linearGradient>
<linearGradient id="rb" x1="900" y1="0" x2="1170" y2="0" gradientUnits="userSpaceOnUse"><stop offset="0" stop-color="#d8d2d0" stop-opacity="0.95"/><stop offset="0.3" stop-color="#cfc9c7" stop-opacity="0.6"/><stop offset="1" stop-color="#cfc9c7" stop-opacity="0.15"/></linearGradient>
<clipPath id="lbar"><path d="M185 340 L560 326 L560 345 L185 400Z"/></clipPath>
<clipPath id="rbar"><path d="M880 331 L1170 348.6 L1170 388.6 L1000 362 L880 352Z"/></clipPath>
<clipPath id="gr"><path d="M185 400 L560 345 L880 352 L1000 362 L1170 388.6 L1170 607 L185 607Z"/></clipPath>
</defs>
<defs><pattern id="dots" width="2.6" height="2.2" patternUnits="userSpaceOnUse" patternTransform="rotate(-4)"><rect x="0" y="0" width="1.5" height="1.2" fill="#968b87"/></pattern>
<clipPath id="gl"><rect x="185" y="300" width="455" height="310"/></clipPath><clipPath id="grr"><rect x="640" y="300" width="531" height="310"/></clipPath></defs>
<g clip-path="url(#gr)">
<defs><linearGradient id="und" x1="185" y1="0" x2="1170" y2="0" gradientUnits="userSpaceOnUse"><stop offset="0" stop-color="#0c0b0b"/><stop offset="0.17" stop-color="#1e1c1b"/><stop offset="0.27" stop-color="#7d7370"/><stop offset="0.73" stop-color="#8a7f7b"/><stop offset="1" stop-color="#5d5552"/></linearGradient></defs>
<path d="M185 300 L1170 300 L1170.0 372.0 L1130.0 372.9 L1090.0 374.2 L1050.0 375.9 L1010.0 378.3 L970.0 381.3 L930.0 384.5 L890.0 387.8 L850.0 391.4 L810.0 395.2 L770.0 399.0 L730.0 402.5 L690.0 405.6 L650.0 408.4 L610.0 410.9 L570.0 413.1 L530.0 415.3 L490.0 417.3 L450.0 419.2 L410.0 421.0 L370.0 422.7 L330.0 424.4 L290.0 426.0 L250.0 427.5 L210.0 429.0 L185 430.0 Z" fill="url(#und)"/>
<path d="M185 300 L1170 300 L1170.0 372.0 L1130.0 372.9 L1090.0 374.2 L1050.0 375.9 L1010.0 378.3 L970.0 381.3 L930.0 384.5 L890.0 387.8 L850.0 391.4 L810.0 395.2 L770.0 399.0 L730.0 402.5 L690.0 405.6 L650.0 408.4 L610.0 410.9 L570.0 413.1 L530.0 415.3 L490.0 417.3 L450.0 419.2 L410.0 421.0 L370.0 422.7 L330.0 424.4 L290.0 426.0 L250.0 427.5 L210.0 429.0 L185 430.0 Z" fill="url(#dots)"/>
<defs><linearGradient id="lg" x1="185" y1="0" x2="1170" y2="0" gradientUnits="userSpaceOnUse"><stop offset="0" stop-color="#877d7a"/><stop offset="0.3" stop-color="#8f8481"/><stop offset="0.52" stop-color="#b9a49e"/><stop offset="0.7" stop-color="#cdb3ab"/><stop offset="1" stop-color="#d2b8b0"/></linearGradient></defs>
<g fill="none" stroke="url(#lg)" stroke-width="1.12" stroke-dasharray="2.6 0.8"><path d="M1115.0 610.3 L1155.0 586.0 L1170.0 577.3" stroke-opacity="1.00"/><path d="M1055.0 610.1 L1095.0 588.7 L1135.0 568.0 L1170.0 551.2" stroke-opacity="1.00"/><path d="M990.0 610.6 L1030.0 591.9 L1070.0 573.3 L1110.0 555.2 L1150.0 538.2 L1170.0 530.3" stroke-opacity="1.00"/><path d="M920.0 611.9 L960.0 595.8 L1000.0 579.2 L1040.0 562.5 L1080.0 546.3 L1120.0 530.8 L1160.0 516.6 L1170.0 513.3" stroke-opacity="1.00"/><path d="M855.0 610.7 L895.0 596.3 L935.0 581.8 L975.0 566.8 L1015.0 551.6 L1055.0 536.8 L1095.0 522.7 L1135.0 509.5 L1170.0 499.1" stroke-opacity="1.00"/><path d="M785.0 611.4 L825.0 598.3 L865.0 585.1 L905.0 571.7 L945.0 558.2 L985.0 544.3 L1025.0 530.5 L1065.0 517.2 L1105.0 504.8 L1145.0 493.5 L1170.0 487.1" stroke-opacity="1.00"/><path d="M720.0 610.9 L760.0 598.7 L800.0 586.4 L840.0 574.1 L880.0 561.7 L920.0 549.2 L960.0 536.5 L1000.0 523.7 L1040.0 511.1 L1080.0 499.4 L1120.0 488.6 L1160.0 479.0 L1170.0 476.8" stroke-opacity="1.00"/><path d="M655.0 610.8 L695.0 599.4 L735.0 588.0 L775.0 576.5 L815.0 564.9 L855.0 553.3 L895.0 541.6 L935.0 529.8 L975.0 517.9 L1015.0 506.0 L1055.0 494.7 L1095.0 484.3 L1135.0 475.0 L1170.0 467.9" stroke-opacity="1.00"/><path d="M585.0 611.7 L625.0 601.3 L665.0 590.7 L705.0 580.1 L745.0 569.3 L785.0 558.4 L825.0 547.4 L865.0 536.4 L905.0 525.4 L945.0 514.3 L985.0 503.1 L1025.0 492.1 L1065.0 481.9 L1105.0 472.7 L1145.0 464.5 L1170.0 460.0" stroke-opacity="1.00"/><path d="M515.0 611.4 L555.0 602.2 L595.0 592.7 L635.0 583.0 L675.0 573.1 L715.0 563.1 L755.0 552.9 L795.0 542.5 L835.0 532.0 L875.0 521.6 L915.0 511.2 L955.0 500.7 L995.0 490.2 L1035.0 480.0 L1075.0 470.8 L1115.0 462.6 L1155.0 455.5 L1170.0 453.1" stroke-opacity="1.00"/><path d="M440.0 611.1 L480.0 603.0 L520.0 594.6 L560.0 586.0 L600.0 577.1 L640.0 568.0 L680.0 558.7 L720.0 549.2 L760.0 539.5 L800.0 529.6 L840.0 519.6 L880.0 509.7 L920.0 499.8 L960.0 489.9 L1000.0 480.0 L1040.0 470.5 L1080.0 462.1 L1120.0 454.7 L1160.0 448.3 L1170.0 446.9" stroke-opacity="1.00"/><path d="M355.0 611.3 L395.0 604.2 L435.0 597.0 L475.0 589.5 L515.0 581.7 L555.0 573.6 L595.0 565.3 L635.0 556.8 L675.0 548.0 L715.0 539.1 L755.0 529.9 L795.0 520.5 L835.0 510.9 L875.0 501.4 L915.0 492.0 L955.0 482.6 L995.0 473.2 L1035.0 464.2 L1075.0 456.3 L1115.0 449.3 L1155.0 443.3 L1170.0 441.3" stroke-opacity="1.00"/><path d="M260.0 612.0 L300.0 605.7 L340.0 599.3 L380.0 592.8 L420.0 586.0 L460.0 579.1 L500.0 571.9 L540.0 564.4 L580.0 556.7 L620.0 548.8 L660.0 540.6 L700.0 532.1 L740.0 523.5 L780.0 514.5 L820.0 505.4 L860.0 496.3 L900.0 487.3 L940.0 478.4 L980.0 469.4 L1020.0 460.6 L1060.0 452.8 L1100.0 446.0 L1140.0 440.1 L1170.0 436.3" stroke-opacity="1.00"/><path d="M185.0 609.0 L225.0 603.2 L265.0 597.3 L305.0 591.4 L345.0 585.4 L385.0 579.2 L425.0 572.9 L465.0 566.3 L505.0 559.5 L545.0 552.5 L585.0 545.2 L625.0 537.7 L665.0 529.9 L705.0 521.8 L745.0 513.5 L785.0 504.9 L825.0 496.1 L865.0 487.4 L905.0 478.8 L945.0 470.3 L985.0 461.8 L1025.0 453.5 L1065.0 446.2 L1105.0 440.0 L1145.0 434.6 L1170.0 431.8" stroke-opacity="1.00"/><path d="M185.0 595.8 L225.0 590.2 L265.0 584.7 L305.0 579.2 L345.0 573.5 L385.0 567.7 L425.0 561.8 L465.0 555.6 L505.0 549.2 L545.0 542.5 L585.0 535.6 L625.0 528.5 L665.0 521.1 L705.0 513.4 L745.0 505.5 L785.0 497.2 L825.0 488.7 L865.0 480.4 L905.0 472.1 L945.0 464.0 L985.0 455.8 L1025.0 448.0 L1065.0 441.1 L1105.0 435.2 L1145.0 430.3 L1170.0 427.6" stroke-opacity="1.00"/><path d="M185.0 583.7 L225.0 578.5 L265.0 573.3 L305.0 568.1 L345.0 562.8 L385.0 557.3 L425.0 551.6 L465.0 545.8 L505.0 539.7 L545.0 533.4 L585.0 526.9 L625.0 520.2 L665.0 513.1 L705.0 505.8 L745.0 498.1 L785.0 490.2 L825.0 482.0 L865.0 474.0 L905.0 466.0 L945.0 458.2 L985.0 450.4 L1025.0 442.9 L1065.0 436.4 L1105.0 430.9 L1145.0 426.3 L1170.0 423.8" stroke-opacity="1.00"/><path d="M185.0 572.7 L225.0 567.8 L265.0 562.9 L305.0 557.9 L345.0 552.9 L385.0 547.8 L425.0 542.4 L465.0 536.9 L505.0 531.1 L545.0 525.1 L585.0 518.9 L625.0 512.5 L665.0 505.8 L705.0 498.7 L745.0 491.4 L785.0 483.8 L825.0 475.9 L865.0 468.1 L905.0 460.5 L945.0 453.0 L985.0 445.5 L1025.0 438.3 L1065.0 432.2 L1105.0 427.0 L1145.0 422.6 L1170.0 420.3" stroke-opacity="1.00"/><path d="M185.0 562.6 L225.0 558.0 L265.0 553.4 L305.0 548.7 L345.0 543.9 L385.0 539.0 L425.0 533.9 L465.0 528.7 L505.0 523.2 L545.0 517.5 L585.0 511.6 L625.0 505.5 L665.0 499.0 L705.0 492.3 L745.0 485.2 L785.0 477.9 L825.0 470.2 L865.0 462.7 L905.0 455.4 L945.0 448.1 L985.0 441.0 L1025.0 434.1 L1065.0 428.2 L1105.0 423.3 L1145.0 419.3 L1170.0 417.1" stroke-opacity="1.00"/><path d="M185.0 553.4 L225.0 549.0 L265.0 544.6 L305.0 540.1 L345.0 535.6 L385.0 531.0 L425.0 526.1 L465.0 521.1 L505.0 515.9 L545.0 510.5 L585.0 504.9 L625.0 499.0 L665.0 492.8 L705.0 486.4 L745.0 479.6 L785.0 472.4 L825.0 465.0 L865.0 457.8 L905.0 450.7 L945.0 443.7 L985.0 436.8 L1025.0 430.2 L1065.0 424.6 L1105.0 420.0 L1145.0 416.1 L1170.0 414.1" stroke-opacity="1.00"/><path d="M185.0 544.9 L225.0 540.7 L265.0 536.5 L305.0 532.3 L345.0 528.0 L385.0 523.5 L425.0 518.9 L465.0 514.2 L505.0 509.2 L545.0 504.0 L585.0 498.6 L625.0 493.0 L665.0 487.1 L705.0 480.9 L745.0 474.3 L785.0 467.4 L825.0 460.2 L865.0 453.2 L905.0 446.3 L945.0 439.6 L985.0 432.9 L1025.0 426.6 L1065.0 421.3 L1105.0 416.9 L1145.0 413.3 L1170.0 411.4" stroke-opacity="1.00"/><path d="M185.0 537.0 L225.0 533.0 L265.0 529.0 L305.0 525.0 L345.0 520.9 L385.0 516.7 L425.0 512.3 L465.0 507.7 L505.0 502.9 L545.0 498.0 L585.0 492.8 L625.0 487.5 L665.0 481.8 L705.0 475.8 L745.0 469.4 L785.0 462.7 L825.0 455.7 L865.0 448.9 L905.0 442.3 L945.0 435.8 L985.0 429.4 L1025.0 423.3 L1065.0 418.2 L1105.0 414.0 L1145.0 410.6 L1170.0 408.8" stroke-opacity="1.00"/><path d="M185.0 529.7 L225.0 525.9 L265.0 522.1 L305.0 518.2 L345.0 514.3 L385.0 510.3 L425.0 506.1 L465.0 501.7 L505.0 497.1 L545.0 492.4 L585.0 487.5 L625.0 482.3 L665.0 476.8 L705.0 471.0 L745.0 464.9 L785.0 458.4 L825.0 451.6 L865.0 445.0 L905.0 438.5 L945.0 432.3 L985.0 426.1 L1025.0 420.2 L1065.0 415.3 L1105.0 411.3 L1145.0 408.1 L1170.0 406.4" stroke-opacity="1.00"/><path d="M185.0 522.9 L225.0 519.3 L265.0 515.6 L305.0 511.9 L345.0 508.2 L385.0 504.3 L425.0 500.3 L465.0 496.1 L505.0 491.7 L545.0 487.2 L585.0 482.4 L625.0 477.5 L665.0 472.2 L705.0 466.6 L745.0 460.6 L785.0 454.3 L825.0 447.7 L865.0 441.3 L905.0 435.0 L945.0 429.0 L985.0 423.0 L1025.0 417.3 L1065.0 412.6 L1105.0 408.8 L1145.0 405.7 L1170.0 404.1" stroke-opacity="1.00"/><path d="M185.0 516.5 L225.0 513.1 L265.0 509.6 L305.0 506.1 L345.0 502.5 L385.0 498.8 L425.0 494.9 L465.0 490.9 L505.0 486.7 L545.0 482.3 L585.0 477.7 L625.0 473.0 L665.0 467.9 L705.0 462.4 L745.0 456.7 L785.0 450.5 L825.0 444.1 L865.0 437.9 L905.0 431.8 L945.0 425.9 L985.0 420.1 L1025.0 414.6 L1065.0 410.1 L1105.0 406.5 L1145.0 403.5 L1170.0 402.0" stroke-opacity="1.00"/><path d="M185.0 510.6 L225.0 507.3 L265.0 503.9 L305.0 500.6 L345.0 497.1 L385.0 493.6 L425.0 489.8 L465.0 486.0 L505.0 481.9 L545.0 477.7 L585.0 473.3 L625.0 468.8 L665.0 463.8 L705.0 458.6 L745.0 453.0 L785.0 447.0 L825.0 440.7 L865.0 434.6 L905.0 428.7 L945.0 423.0 L985.0 417.4 L1025.0 412.1 L1065.0 407.7 L1105.0 404.3 L1145.0 401.5 L1170.0 400.0" stroke-opacity="1.00"/><path d="M185.0 505.0 L225.0 501.9 L265.0 498.7 L305.0 495.4 L345.0 492.1 L385.0 488.7 L425.0 485.1 L465.0 481.4 L505.0 477.5 L545.0 473.4 L585.0 469.2 L625.0 464.8 L665.0 460.0 L705.0 454.9 L745.0 449.5 L785.0 443.6 L825.0 437.5 L865.0 431.6 L905.0 425.9 L945.0 420.3 L985.0 414.8 L1025.0 409.7 L1065.0 405.5 L1105.0 402.2 L1145.0 399.5 L1170.0 398.2" stroke-opacity="1.00"/><path d="M185.0 499.8 L225.0 496.8 L265.0 493.7 L305.0 490.6 L345.0 487.4 L385.0 484.1 L425.0 480.6 L465.0 477.1 L505.0 473.3 L545.0 469.4 L585.0 465.3 L625.0 461.0 L665.0 456.4 L705.0 451.5 L745.0 446.2 L785.0 440.5 L825.0 434.5 L865.0 428.8 L905.0 423.2 L945.0 417.8 L985.0 412.4 L1025.0 407.5 L1065.0 403.5 L1105.0 400.3 L1145.0 397.7 L1170.0 396.4" stroke-opacity="1.00"/><path d="M185.0 494.9 L225.0 492.0 L265.0 489.0 L305.0 486.0 L345.0 483.0 L385.0 479.8 L425.0 476.5 L465.0 473.0 L505.0 469.4 L545.0 465.6 L585.0 461.7 L625.0 457.5 L665.0 453.1 L705.0 448.2 L745.0 443.1 L785.0 437.5 L825.0 431.7 L865.0 426.1 L905.0 420.6 L945.0 415.4 L985.0 410.2 L1025.0 405.4 L1065.0 401.5 L1105.0 398.4 L1145.0 396.0 L1170.0 394.8" stroke-opacity="1.00"/><path d="M185.0 490.3 L225.0 487.5 L265.0 484.6 L305.0 481.7 L345.0 478.8 L385.0 475.7 L425.0 472.5 L465.0 469.2 L505.0 465.7 L545.0 462.0 L585.0 458.2 L625.0 454.2 L665.0 449.9 L705.0 445.2 L745.0 440.2 L785.0 434.8 L825.0 429.1 L865.0 423.5 L905.0 418.2 L945.0 413.1 L985.0 408.1 L1025.0 403.4 L1065.0 399.7 L1105.0 396.7 L1145.0 394.4 L1170.0 393.2" stroke-opacity="1.00"/><path d="M185.0 485.9 L225.0 483.2 L265.0 480.5 L305.0 477.7 L345.0 474.8 L385.0 471.9 L425.0 468.8 L465.0 465.5 L505.0 462.2 L545.0 458.6 L585.0 454.9 L625.0 451.1 L665.0 446.8 L705.0 442.3 L745.0 437.4 L785.0 432.1 L825.0 426.5 L865.0 421.2 L905.0 416.0 L945.0 411.0 L985.0 406.1 L1025.0 401.5 L1065.0 397.9 L1105.0 395.1 L1145.0 392.8 L1170.0 391.7" stroke-opacity="1.00"/><path d="M185.0 481.8 L225.0 479.2 L265.0 476.5 L305.0 473.8 L345.0 471.1 L385.0 468.2 L425.0 465.2 L465.0 462.1 L505.0 458.8 L545.0 455.4 L585.0 451.8 L625.0 448.1 L665.0 444.0 L705.0 439.6 L745.0 434.8 L785.0 429.6 L825.0 424.2 L865.0 418.9 L905.0 413.8 L945.0 408.9 L985.0 404.2 L1025.0 399.8 L1065.0 396.3 L1105.0 393.5 L1145.0 391.4 L1170.0 390.3" stroke-opacity="1.00"/><path d="M185.0 477.9 L225.0 475.4 L265.0 472.8 L305.0 470.2 L345.0 467.5 L385.0 464.8 L425.0 461.9 L465.0 458.9 L505.0 455.7 L545.0 452.4 L585.0 448.9 L625.0 445.3 L665.0 441.3 L705.0 437.0 L745.0 432.3 L785.0 427.2 L825.0 421.9 L865.0 416.7 L905.0 411.8 L945.0 407.0 L985.0 402.4 L1025.0 398.1 L1065.0 394.7 L1105.0 392.0 L1145.0 390.0 L1170.0 388.9" stroke-opacity="0.99"/><path d="M185.0 474.2 L225.0 471.8 L265.0 469.3 L305.0 466.8 L345.0 464.2 L385.0 461.5 L425.0 458.7 L465.0 455.8 L505.0 452.7 L545.0 449.5 L585.0 446.1 L625.0 442.6 L665.0 438.7 L705.0 434.5 L745.0 429.9 L785.0 425.0 L825.0 419.7 L865.0 414.7 L905.0 409.9 L945.0 405.2 L985.0 400.7 L1025.0 396.5 L1065.0 393.2 L1105.0 390.6 L1145.0 388.7 L1170.0 387.7" stroke-opacity="0.97"/><path d="M185.0 470.7 L225.0 468.3 L265.0 465.9 L305.0 463.5 L345.0 461.0 L385.0 458.4 L425.0 455.7 L465.0 452.8 L505.0 449.8 L545.0 446.7 L585.0 443.5 L625.0 440.0 L665.0 436.2 L705.0 432.1 L745.0 427.7 L785.0 422.8 L825.0 417.7 L865.0 412.8 L905.0 408.0 L945.0 403.5 L985.0 399.1 L1025.0 395.0 L1065.0 391.8 L1105.0 389.3 L1145.0 387.4 L1170.0 386.5" stroke-opacity="0.96"/><path d="M185.0 467.4 L225.0 465.1 L265.0 462.7 L305.0 460.4 L345.0 457.9 L385.0 455.4 L425.0 452.8 L465.0 450.0 L505.0 447.1 L545.0 444.1 L585.0 440.9 L625.0 437.6 L665.0 433.9 L705.0 429.9 L745.0 425.5 L785.0 420.8 L825.0 415.8 L865.0 410.9 L905.0 406.3 L945.0 401.8 L985.0 397.5 L1025.0 393.5 L1065.0 390.4 L1105.0 388.0 L1145.0 386.2 L1170.0 385.3" stroke-opacity="0.95"/><path d="M185.0 464.2 L225.0 462.0 L265.0 459.7 L305.0 457.4 L345.0 455.1 L385.0 452.6 L425.0 450.0 L465.0 447.4 L505.0 444.6 L545.0 441.6 L585.0 438.5 L625.0 435.3 L665.0 431.7 L705.0 427.8 L745.0 423.5 L785.0 418.8 L825.0 413.9 L865.0 409.1 L905.0 404.6 L945.0 400.3 L985.0 396.0 L1025.0 392.2 L1065.0 389.1 L1105.0 386.8 L1145.0 385.1 L1170.0 384.2" stroke-opacity="0.94"/><path d="M185.0 461.2 L225.0 459.0 L265.0 456.8 L305.0 454.6 L345.0 452.3 L385.0 449.9 L425.0 447.4 L465.0 444.8 L505.0 442.1 L545.0 439.2 L585.0 436.2 L625.0 433.0 L665.0 429.5 L705.0 425.7 L745.0 421.5 L785.0 417.0 L825.0 412.1 L865.0 407.5 L905.0 403.0 L945.0 398.8 L985.0 394.6 L1025.0 390.8 L1065.0 387.9 L1105.0 385.7 L1145.0 384.0 L1170.0 383.1" stroke-opacity="0.93"/><path d="M185.0 458.3 L225.0 456.2 L265.0 454.0 L305.0 451.9 L345.0 449.7 L385.0 447.3 L425.0 444.9 L465.0 442.4 L505.0 439.7 L545.0 436.9 L585.0 434.0 L625.0 430.9 L665.0 427.5 L705.0 423.8 L745.0 419.7 L785.0 415.2 L825.0 410.4 L865.0 405.9 L905.0 401.5 L945.0 397.3 L985.0 393.3 L1025.0 389.6 L1065.0 386.7 L1105.0 384.6 L1145.0 382.9 L1170.0 382.1" stroke-opacity="0.92"/><path d="M185.0 455.5 L225.0 453.5 L265.0 451.4 L305.0 449.3 L345.0 447.1 L385.0 444.9 L425.0 442.5 L465.0 440.1 L505.0 437.5 L545.0 434.8 L585.0 431.9 L625.0 428.9 L665.0 425.6 L705.0 421.9 L745.0 417.9 L785.0 413.5 L825.0 408.8 L865.0 404.3 L905.0 400.0 L945.0 396.0 L985.0 392.0 L1025.0 388.4 L1065.0 385.6 L1105.0 383.5 L1145.0 381.9 L1170.0 381.1" stroke-opacity="0.92"/><path d="M185.0 452.9 L225.0 450.9 L265.0 448.9 L305.0 446.8 L345.0 444.7 L385.0 442.5 L425.0 440.2 L465.0 437.9 L505.0 435.3 L545.0 432.7 L585.0 429.9 L625.0 427.0 L665.0 423.7 L705.0 420.1 L745.0 416.2 L785.0 411.9 L825.0 407.3 L865.0 402.9 L905.0 398.7 L945.0 394.7 L985.0 390.8 L1025.0 387.3 L1065.0 384.5 L1105.0 382.5 L1145.0 381.0 L1170.0 380.2" stroke-opacity="0.91"/><path d="M185.0 450.3 L225.0 448.4 L265.0 446.4 L305.0 444.5 L345.0 442.4 L385.0 440.3 L425.0 438.1 L465.0 435.7 L505.0 433.3 L545.0 430.7 L585.0 428.0 L625.0 425.1 L665.0 421.9 L705.0 418.4 L745.0 414.5 L785.0 410.3 L825.0 405.8 L865.0 401.5 L905.0 397.3 L945.0 393.4 L985.0 389.6 L1025.0 386.2 L1065.0 383.5 L1105.0 381.5 L1145.0 380.0 L1170.0 379.3" stroke-opacity="0.90"/><path d="M185.0 447.9 L225.0 446.0 L265.0 444.1 L305.0 442.2 L345.0 440.2 L385.0 438.1 L425.0 436.0 L465.0 433.7 L505.0 431.3 L545.0 428.8 L585.0 426.1 L625.0 423.3 L665.0 420.2 L705.0 416.8 L745.0 413.0 L785.0 408.8 L825.0 404.4 L865.0 400.1 L905.0 396.1 L945.0 392.2 L985.0 388.5 L1025.0 385.1 L1065.0 382.5 L1105.0 380.6 L1145.0 379.1 L1170.0 378.4" stroke-opacity="0.89"/><path d="M185.0 445.6 L225.0 443.8 L265.0 441.9 L305.0 440.0 L345.0 438.1 L385.0 436.1 L425.0 433.9 L465.0 431.7 L505.0 429.4 L545.0 426.9 L585.0 424.3 L625.0 421.6 L665.0 418.6 L705.0 415.2 L745.0 411.5 L785.0 407.4 L825.0 403.0 L865.0 398.8 L905.0 394.8 L945.0 391.1 L985.0 387.4 L1025.0 384.1 L1065.0 381.6 L1105.0 379.7 L1145.0 378.3 L1170.0 377.6" stroke-opacity="0.89"/><path d="M185.0 443.4 L225.0 441.6 L265.0 439.8 L305.0 437.9 L345.0 436.0 L385.0 434.1 L425.0 432.0 L465.0 429.8 L505.0 427.6 L545.0 425.1 L585.0 422.6 L625.0 419.9 L665.0 417.0 L705.0 413.7 L745.0 410.0 L785.0 406.0 L825.0 401.7 L865.0 397.6 L905.0 393.7 L945.0 389.9 L985.0 386.4 L1025.0 383.1 L1065.0 380.7 L1105.0 378.8 L1145.0 377.5 L1170.0 376.8" stroke-opacity="0.88"/><path d="M185.0 441.2 L225.0 439.5 L265.0 437.7 L305.0 435.9 L345.0 434.1 L385.0 432.2 L425.0 430.1 L465.0 428.0 L505.0 425.8 L545.0 423.4 L585.0 421.0 L625.0 418.4 L665.0 415.4 L705.0 412.2 L745.0 408.6 L785.0 404.7 L825.0 400.4 L865.0 396.4 L905.0 392.5 L945.0 388.9 L985.0 385.4 L1025.0 382.2 L1065.0 379.8 L1105.0 378.0 L1145.0 376.7 L1170.0 376.1" stroke-opacity="0.88"/><path d="M185.0 439.2 L225.0 437.5 L265.0 435.8 L305.0 434.0 L345.0 432.2 L385.0 430.3 L425.0 428.4 L465.0 426.3 L505.0 424.1 L545.0 421.8 L585.0 419.4 L625.0 416.8 L665.0 414.0 L705.0 410.8 L745.0 407.3 L785.0 403.4 L825.0 399.2 L865.0 395.2 L905.0 391.4 L945.0 387.9 L985.0 384.4 L1025.0 381.3 L1065.0 378.9 L1105.0 377.2 L1145.0 375.9 L1170.0 375.3" stroke-opacity="0.87"/><path d="M185.0 437.2 L225.0 435.5 L265.0 433.9 L305.0 432.1 L345.0 430.4 L385.0 428.6 L425.0 426.6 L465.0 424.6 L505.0 422.5 L545.0 420.2 L585.0 417.9 L625.0 415.4 L665.0 412.6 L705.0 409.4 L745.0 406.0 L785.0 402.1 L825.0 398.0 L865.0 394.1 L905.0 390.4 L945.0 386.9 L985.0 383.5 L1025.0 380.4 L1065.0 378.1 L1105.0 376.4 L1145.0 375.2 L1170.0 374.6" stroke-opacity="0.87"/><path d="M185.0 435.3 L225.0 433.7 L265.0 432.0 L305.0 430.4 L345.0 428.7 L385.0 426.9 L425.0 425.0 L465.0 423.0 L505.0 420.9 L545.0 418.7 L585.0 416.4 L625.0 414.0 L665.0 411.2 L705.0 408.1 L745.0 404.7 L785.0 401.0 L825.0 396.9 L865.0 393.0 L905.0 389.4 L945.0 385.9 L985.0 382.6 L1025.0 379.6 L1065.0 377.4 L1105.0 375.7 L1145.0 374.5 L1170.0 373.9" stroke-opacity="0.86"/><path d="M185.0 433.4 L225.0 431.9 L265.0 430.3 L305.0 428.6 L345.0 427.0 L385.0 425.2 L425.0 423.4 L465.0 421.4 L505.0 419.4 L545.0 417.2 L585.0 415.0 L625.0 412.6 L665.0 409.9 L705.0 406.9 L745.0 403.5 L785.0 399.8 L825.0 395.8 L865.0 392.0 L905.0 388.4 L945.0 385.0 L985.0 381.7 L1025.0 378.8 L1065.0 376.6 L1105.0 375.0 L1145.0 373.8 L1170.0 373.3" stroke-opacity="0.86"/><path d="M185.0 431.7 L225.0 430.1 L265.0 428.6 L305.0 427.0 L345.0 425.3 L385.0 423.6 L425.0 421.8 L465.0 419.9 L505.0 417.9 L545.0 415.8 L585.0 413.6 L625.0 411.3 L665.0 408.6 L705.0 405.7 L745.0 402.4 L785.0 398.7 L825.0 394.8 L865.0 391.0 L905.0 387.5 L945.0 384.1 L985.0 380.9 L1025.0 378.0 L1065.0 375.9 L1105.0 374.3 L1145.0 373.2 L1170.0 372.6" stroke-opacity="0.85"/></g>
<g fill="none" stroke="#fff" stroke-width="1.7"><path d="M1125.0 604.4 L1130.0 601.0 L1135.0 599.1 L1140.0 595.7 L1145.0 591.0 L1150.0 587.7 L1155.0 585.9"/><path d="M1095.0 589.0 L1100.0 586.1 L1105.0 584.5 L1110.0 581.6 L1115.0 577.3 L1120.0 574.5 L1125.0 573.0"/><path d="M1070.0 573.6 L1075.0 571.0 L1080.0 569.8 L1085.0 567.3 L1090.0 563.3 L1095.0 560.7 L1100.0 559.6"/><path d="M1045.0 560.8 L1050.0 558.4 L1055.0 557.5 L1060.0 555.2 L1065.0 551.4 L1070.0 549.1 L1075.0 548.2"/><path d="M1030.0 546.0 L1035.0 543.8 L1040.0 543.1 L1045.0 541.0 L1050.0 537.4"/><path d="M1015.0 533.9 L1020.0 531.9 L1025.0 531.3 L1030.0 529.3 L1035.0 525.9"/><path d="M1000.0 523.7 L1005.0 521.8 L1010.0 521.3 L1015.0 519.4 L1020.0 516.1"/><path d="M985.0 514.9 L990.0 513.1 L995.0 512.7 L1000.0 510.9 L1005.0 507.7"/><path d="M970.0 507.3 L975.0 505.6 L980.0 505.3 L985.0 503.6 L990.0 500.5"/><path d="M960.0 499.4 L965.0 497.8 L970.0 497.6 L975.0 495.9 L980.0 492.9"/><path d="M950.0 492.4 L955.0 490.9 L960.0 490.7 L965.0 489.2 L970.0 486.2"/><path d="M940.0 486.2 L945.0 484.7 L950.0 484.6 L955.0 483.1 L960.0 480.3"/><path d="M930.0 480.6 L935.0 479.2 L940.0 479.2 L945.0 477.8 L950.0 474.9"/><path d="M920.0 475.6 L925.0 474.2 L930.0 474.3 L935.0 472.9 L940.0 470.2"/><path d="M910.0 471.1 L915.0 469.8 L920.0 469.9 L925.0 468.5 L930.0 465.8"/><path d="M905.0 466.0 L910.0 464.7 L915.0 464.9 L920.0 463.6 L925.0 460.9"/><path d="M900.0 461.4 L905.0 460.2 L910.0 460.3 L915.0 459.1 L920.0 456.4"/><path d="M895.0 457.2 L900.0 456.0 L905.0 456.2 L910.0 455.0 L915.0 452.3"/><path d="M890.0 453.3 L895.0 452.1 L900.0 452.3 L905.0 451.2 L910.0 448.6"/><path d="M890.0 448.9 L895.0 447.7 L900.0 448.0 L905.0 446.8 L910.0 444.3"/><path d="M885.0 445.6 L890.0 444.5 L895.0 444.7 L900.0 443.6 L905.0 441.1"/><path d="M880.0 442.5 L885.0 441.4 L890.0 441.7 L895.0 440.6 L900.0 438.1"/><path d="M880.0 438.9 L885.0 437.8 L890.0 438.2 L895.0 437.1 L900.0 434.6"/><path d="M875.0 436.3 L880.0 435.3 L885.0 435.6 L890.0 434.5 L895.0 432.1"/><path d="M870.0 433.9 L875.0 432.8 L880.0 433.2 L885.0 432.2 L890.0 429.7"/></g>
</g>
<defs><filter id="bl"><feGaussianBlur stdDeviation="7"/></filter></defs>
<path d="M360 378 L452 353 L560 345 L880 352 L1000 364 L1060 380 L900 396 L452 398 L340 404Z" fill="#8c807d" opacity="0.6" filter="url(#bl)" clip-path="url(#gr)"/>
<path d="M185 429 L286 408.7 L452 381.4" stroke="#c2a346" stroke-width="1.3" stroke-dasharray="10 15" fill="none" opacity="0.85"/>
<path d="M372 374.500 L452 360.500" stroke="#c9a94a" stroke-width="1.300" stroke-dasharray="9 9" fill="none" opacity="0.85"/>
<defs><linearGradient id="rs" x1="1000" y1="0" x2="1170" y2="0" gradientUnits="userSpaceOnUse"><stop offset="0" stop-color="#a3968f" stop-opacity="0.92"/><stop offset="0.6" stop-color="#a3968f" stop-opacity="0.75"/><stop offset="1" stop-color="#a3968f" stop-opacity="0.25"/></linearGradient></defs>
<path d="M870 350 L1000 362 L1170 388.6 L1170 420 L1105 408.5 L1040 393 L980 377 L900 366 L870 364Z" fill="url(#rs)"/>
<path d="M380 372 L452 354 L452 400 L330 408Z" fill="#8f8380" opacity="0.55" filter="url(#bl)" clip-path="url(#gr)"/>
<g filter="url(#tree)" fill="#fff">
<path d="M180 300 L186 280 L200 270 L222 266 L240 270 L262 268 L280 276 L296 290 L304 306 L318 312 L335 318 L350 316 L362 322 L366 300 L372 282 L384 272 L398 276 L408 292 L411 314 L420 320 L440 322 L452 326 L452 334 L180 340Z"/>
</g><g filter="url(#tree2)" fill="#fff">
<path d="M890 340 L893 300 L896 270 L950 270 L953 292 L959 305 L968 314 L977 322 L986 328 L993 335Z"/>
<path d="M994 337 L996 318 L996 298 L1003 282 L1011 268 L1020 258 L1030 253 L1040 256 L1048 262 L1058 268 L1070 276 L1084 284 L1099 296 L1112 306 L1128 316 L1144 324 L1158 334 L1175 340 L1175 352 L1000 342Z"/>
</g><g filter="url(#tree2)" fill="#fff" opacity="0.75">
<path d="M894 272 L897 244 L900 218 L912 213 L925 216 L937 223 L943 240 L945 258 L950 272Z"/>
</g>
<path d="M185 326.5 L345 324 L452 322 L452 331 L185 341Z" fill="#333333" opacity="0.93"/>
<path d="M185 340 L560 326 L560 345 L185 400Z" fill="#050505"/>
<g clip-path="url(#lbar)" stroke="#7c7c7c" stroke-width="0.9" fill="none">
<path d="M150.0 405.1 L175.5 382.2 L189.6 339.8"/>
<path d="M159.4 403.8 L184.5 381.1 L198.4 339.5"/>
<path d="M168.7 402.4 L193.4 380.2 L207.0 339.2"/>
<path d="M177.8 401.1 L202.1 379.2 L215.5 338.9"/>
<path d="M186.7 399.8 L210.6 378.2 L223.8 338.6"/>
<path d="M195.5 398.5 L219.0 377.3 L232.0 338.2"/>
<path d="M204.1 397.2 L227.2 376.4 L240.0 337.9"/>
<path d="M212.5 396.0 L235.3 375.4 L247.9 337.7"/>
<path d="M220.8 394.7 L243.3 374.6 L255.6 337.4"/>
<path d="M229.0 393.5 L251.1 373.7 L263.2 337.1"/>
<path d="M237.0 392.4 L258.7 372.8 L270.7 336.8"/>
<path d="M244.9 391.2 L266.2 372.0 L278.0 336.5"/>
<path d="M252.6 390.1 L273.6 371.1 L285.2 336.3"/>
<path d="M260.2 389.0 L280.9 370.3 L292.3 336.0"/>
<path d="M267.6 387.9 L288.0 369.5 L299.2 335.7"/>
<path d="M274.9 386.8 L295.0 368.8 L306.0 335.5"/>
<path d="M282.1 385.8 L301.8 368.0 L312.7 335.2"/>
<path d="M289.1 384.7 L308.6 367.2 L319.3 335.0"/>
<path d="M296.1 383.7 L315.2 366.5 L325.7 334.7"/>
<path d="M302.9 382.7 L321.7 365.8 L332.1 334.5"/>
<path d="M309.5 381.7 L328.1 365.0 L338.3 334.3"/>
<path d="M316.1 380.8 L334.4 364.3 L344.4 334.0"/>
<path d="M322.5 379.8 L340.5 363.6 L350.4 333.8"/>
<path d="M328.8 378.9 L346.6 363.0 L356.3 333.6"/>
<path d="M335.1 378.0 L352.5 362.3 L362.1 333.4"/>
<path d="M341.2 377.1 L358.3 361.6 L367.8 333.2"/>
<path d="M347.1 376.2 L364.0 361.0 L373.3 333.0"/>
<path d="M353.0 375.4 L369.7 360.4 L378.8 332.8"/>
<path d="M358.8 374.5 L375.2 359.8 L384.2 332.6"/>
<path d="M364.5 373.7 L380.6 359.1 L389.5 332.4"/>
<path d="M370.0 372.9 L385.9 358.5 L394.7 332.2"/>
<path d="M375.5 372.1 L391.2 358.0 L399.8 332.0"/>
<path d="M380.9 371.3 L396.3 357.4 L404.8 331.8"/>
<path d="M386.1 370.5 L401.3 356.8 L409.7 331.6"/>
<path d="M391.3 369.7 L406.3 356.3 L414.5 331.4"/>
<path d="M396.4 369.0 L411.1 355.7 L419.3 331.3"/>
<path d="M401.4 368.3 L415.9 355.2 L423.9 331.1"/>
<path d="M406.3 367.5 L420.6 354.7 L428.5 330.9"/>
<path d="M411.1 366.8 L425.2 354.1 L433.0 330.7"/>
<path d="M415.8 366.1 L429.7 353.6 L437.4 330.6"/>
<path d="M420.5 365.5 L434.2 353.1 L441.7 330.4"/>
<path d="M425.0 364.8 L438.5 352.6 L446.0 330.3"/>
<path d="M429.5 364.1 L442.8 352.2 L450.1 330.1"/>
<path d="M433.9 363.5 L447.0 351.7 L454.2 329.9"/>
<path d="M438.2 362.9 L451.1 351.2 L458.3 329.8"/>
<path d="M442.5 362.2 L455.2 350.8 L462.2 329.7"/>
<path d="M446.6 361.6 L459.2 350.3 L466.1 329.5"/>
<path d="M450.7 361.0 L463.1 349.9 L469.9 329.4"/>
<path d="M454.7 360.4 L466.9 349.5 L473.6 329.2"/>
<path d="M458.7 359.9 L470.7 349.0 L477.3 329.1"/>
<path d="M462.5 359.3 L474.4 348.6 L480.9 329.0"/>
<path d="M466.3 358.7 L478.0 348.2 L484.5 328.8"/>
<path d="M470.1 358.2 L481.6 347.8 L487.9 328.7"/>
<path d="M473.7 357.7 L485.1 347.4 L491.4 328.6"/>
<path d="M477.3 357.1 L488.6 347.0 L494.7 328.4"/>
<path d="M480.9 356.6 L492.0 346.6 L498.1 328.3"/>
<path d="M484.5 356.1 L495.4 346.3 L501.4 328.2"/>
<path d="M488.1 355.5 L498.9 345.9 L504.8 328.1"/>
<path d="M491.7 355.0 L502.3 345.5 L508.1 327.9"/>
<path d="M495.3 354.5 L505.8 345.1 L511.5 327.8"/>
<path d="M498.9 354.0 L509.2 344.7 L514.9 327.7"/>
<path d="M502.5 353.4 L512.7 344.3 L518.2 327.6"/>
<path d="M506.1 352.9 L516.1 343.9 L521.6 327.4"/>
<path d="M509.7 352.4 L519.5 343.6 L524.9 327.3"/>
<path d="M513.3 351.8 L523.0 343.2 L528.3 327.2"/>
<path d="M516.9 351.3 L526.4 342.8 L531.6 327.1"/>
<path d="M520.5 350.8 L529.9 342.4 L535.0 326.9"/>
<path d="M524.1 350.3 L533.3 342.0 L538.3 326.8"/>
<path d="M527.7 349.7 L536.7 341.6 L541.7 326.7"/>
<path d="M531.3 349.2 L540.2 341.2 L545.1 326.6"/>
<path d="M534.9 348.7 L543.6 340.8 L548.4 326.4"/>
<path d="M538.5 348.1 L547.1 340.5 L551.8 326.3"/>
<path d="M542.1 347.6 L550.5 340.1 L555.1 326.2"/>
<path d="M545.7 347.1 L554.0 339.7 L558.5 326.1"/>
<path d="M549.3 346.6 L557.4 339.3 L561.8 325.9"/>
<path d="M552.9 346.0 L560.8 338.9 L565.2 325.8"/>
<path d="M556.5 345.5 L564.3 338.5 L568.6 325.7"/>
<path d="M560.1 345.0 L567.7 338.1 L571.9 325.6"/>
<path d="M563.7 344.5 L571.2 337.8 L575.3 325.4"/>
<path d="M567.3 343.9 L574.6 337.4 L578.6 325.3"/>
<path d="M570.9 343.4 L578.1 337.0 L582.0 325.2"/>
<path d="M574.5 342.9 L581.5 336.6 L585.3 325.1"/>
<path d="M578.1 342.3 L584.9 336.2 L588.7 324.9"/>
<path d="M581.7 341.8 L588.4 335.8 L592.0 324.8"/>
<path d="M585.3 341.3 L591.8 335.4 L595.4 324.7"/>
<path d="M588.9 340.8 L595.3 335.1 L598.8 324.6"/>
<path d="M592.5 340.2 L598.7 334.7 L602.1 324.4"/>
<path d="M596.1 339.7 L602.2 334.3 L605.5 324.3"/>
<path d="M599.7 339.2 L605.6 333.9 L608.8 324.2"/>
</g>
<path d="M185 340 L560 326" stroke="#dcd8d6" stroke-width="1.4" stroke-dasharray="3.5 1" fill="none"/>
<path d="M880 331 L1170 348.6 L1170 388.6 L1000 362 L880 352Z" fill="#060606"/>
<path d="M880 331 L1170 348.6 L1170 388.6 L1000 362 L880 352Z" fill="url(#rb)"/>
<g clip-path="url(#rbar)" stroke="#f2efee" stroke-width="1.5" fill="none">
<path d="M892.0 325 L952.0 395"/>
<path d="M896.1 325 L956.1 395"/>
<path d="M900.4 325 L960.4 395"/>
<path d="M904.9 325 L964.9 395"/>
<path d="M909.4 325 L969.4 395"/>
<path d="M914.2 325 L974.2 395"/>
<path d="M919.1 325 L979.1 395"/>
<path d="M924.2 325 L984.2 395"/>
<path d="M929.5 325 L989.5 395"/>
<path d="M934.9 325 L994.9 395"/>
<path d="M940.6 325 L1000.6 395"/>
<path d="M946.4 325 L1006.4 395"/>
<path d="M952.5 325 L1012.5 395"/>
<path d="M958.7 325 L1018.7 395"/>
<path d="M965.2 325 L1025.2 395"/>
<path d="M971.9 325 L1031.9 395"/>
<path d="M978.8 325 L1038.8 395"/>
<path d="M986.0 325 L1046.0 395"/>
<path d="M993.4 325 L1053.4 395"/>
<path d="M1001.1 325 L1061.1 395"/>
<path d="M1009.1 325 L1069.1 395"/>
<path d="M1017.3 325 L1077.3 395"/>
<path d="M1025.8 325 L1085.8 395"/>
<path d="M1034.7 325 L1094.7 395"/>
<path d="M1043.7 325 L1103.7 395"/>
<path d="M1052.7 325 L1112.7 395"/>
<path d="M1061.7 325 L1121.7 395"/>
<path d="M1070.7 325 L1130.7 395"/>
<path d="M1079.7 325 L1139.7 395"/>
<path d="M1088.7 325 L1148.7 395"/>
<path d="M1097.7 325 L1157.7 395"/>
<path d="M1106.7 325 L1166.7 395"/>
<path d="M1115.7 325 L1175.7 395"/>
<path d="M1124.7 325 L1184.7 395"/>
<path d="M1133.7 325 L1193.7 395"/>
<path d="M1142.7 325 L1202.7 395"/>
<path d="M1151.7 325 L1211.7 395"/>
<path d="M1160.7 325 L1220.7 395"/>
<path d="M1169.7 325 L1229.7 395"/>
<path d="M1178.7 325 L1238.7 395"/>
<path d="M1187.7 325 L1247.7 395"/>
</g>
<path d="M880 331 L1170 348.6" stroke="#fff" stroke-width="1.4" fill="none"/>
<path d="M900 365.5 Q980 374 1040 392 T1105 408" stroke="#e8e4e2" stroke-width="1.4" fill="none" stroke-dasharray="5 2"/>
<path d="M408 312 L452 304 L452 327 L410 330Z" fill="#55575a" opacity="0.75"/>
<rect x="251" y="143" width="1.2" height="1.2" fill="#ddd"/>
<rect x="201" y="273" width="1.2" height="1.2" fill="#ddd"/>
<rect x="263" y="269" width="1.2" height="1.2" fill="#ddd"/>
<rect x="323" y="258" width="1.2" height="1.2" fill="#ddd"/>
<g><path d="M353 333V369" stroke="#e8e000" stroke-width="1.6"/><ellipse cx="353" cy="333.5" rx="6" ry="5.3" fill="#e4dc00"/><ellipse cx="353" cy="368.5" rx="6" ry="5.3" fill="#e4dc00"/></g>
<g><path d="M1035 342V372" stroke="#e8e000" stroke-width="1.8"/><ellipse cx="1034.5" cy="341" rx="6" ry="5.3" fill="#e4dc00"/><ellipse cx="1034" cy="372" rx="4.5" ry="4" fill="#e4dc00"/>
<path d="M972 376.2H1084" stroke="#e8491a" stroke-width="1.3"/><ellipse cx="972" cy="376.5" rx="6.2" ry="5" fill="#e2410f"/><ellipse cx="1083.5" cy="376.3" rx="6.2" ry="5" fill="#e2410f"/>
<ellipse cx="1029.5" cy="393" rx="6" ry="5" fill="#e020d0"/><ellipse cx="1044" cy="393" rx="6" ry="5" fill="#e020d0"/></g>
<path d="M629 580 L621 607" stroke="#c22" stroke-width="0.9"/>
</svg>
<span class="t" style="left:338.76px;top:346.00px;font-size:10.200px;color:#eee800;font-weight:bold;text-shadow:0 0 1.5px #000,0 0 1px #000;">2.58 ft</span>
<span class="t" style="left:1021.26px;top:351.00px;font-size:10.200px;color:#eee800;font-weight:bold;text-shadow:0 0 1.5px #000,0 0 1px #000;">2.83 ft</span>
<span class="t" style="left:1016.26px;top:365.00px;font-size:10.200px;color:#ee3a10;font-weight:bold;text-shadow:0 0 1.5px #000,0 0 1px #000;">9.08 ft</span>
<span class="t" style="left:1025.76px;top:379.00px;font-size:10.200px;color:#f028e0;font-weight:bold;text-shadow:0 0 1.5px #000,0 0 1px #000;">0.83 ft</span>
<div class="a " style="left:185.00px;top:44.00px;width:985.00px;height:12.30px;background:#232323"></div>
<span class="t" style="left:194.00px;top:46.00px;font-size:8.890px;color:#fff;font-weight:bold;">00:00:46:05</span>
<span class="t" style="left:247.63px;top:46.00px;font-size:8.890px;color:#e8e8e8;">Rec</span>
<span class="t" style="left:265.84px;top:46.00px;font-size:8.890px;color:#fff;font-weight:bold;">1</span>
<span class="t" style="left:276.18px;top:46.00px;font-size:8.890px;color:#e8e8e8;">Set</span>
<span class="t" style="left:291.93px;top:46.00px;font-size:8.890px;color:#fff;font-weight:bold;">777</span>
<span class="t" style="left:312.16px;top:46.00px;font-size:8.890px;color:#e8e8e8;">Dist</span>
<span class="t" style="left:329.87px;top:46.00px;font-size:8.890px;color:#fff;font-weight:bold;">0.0 ft</span>
<span class="t" style="left:356.01px;top:46.00px;font-size:8.890px;color:#fff;font-weight:bold;">21.710 mi</span>
<span class="t" style="left:900.94px;top:46.00px;font-size:8.730px;color:#f0f0f0;">Lat 35.8226536, Lon -86.8953280 Alt (shp) 673.4 ft, Heading 275.4°</span>
<div class="a " style="left:184.40px;top:107.60px;width:13.20px;height:55.20px;background:#2b2b2b;border:0.8px solid #4a4a4a;border-left:none;border-radius:0 3px 3px 0"></div>
<svg class="a" style="left:187.8px;top:130.4px" width="5" height="8.6" viewBox="0 0 10 17"><path d="M1 1V16L9 8.5Z" fill="none" stroke="#2a7fd4" stroke-width="1.7"/></svg>
<div class="a " style="left:185.00px;top:589.40px;width:42.00px;height:17.80px;background:#1d1d1d"></div>
<span class="t" style="left:198.45px;top:595.00px;font-size:7.900px;color:#fff;font-weight:bold;letter-spacing:-0.247px;">LIDAR</span>
<div class="a " style="left:227.20px;top:589.20px;width:7.60px;height:17.60px;background:#fff;border-radius:2px"></div>
<div class="a " style="left:1170.00px;top:44.00px;width:6.00px;height:565.00px;background:#595959;border-left:1px solid #333;border-right:1px solid #2a2a2a"></div>
<div class="a " style="left:452.20px;top:153.40px;width:448.60px;height:388.60px;background:#fff;border-radius:4px;box-shadow:0 3px 9px rgba(0,0,0,.55);overflow:hidden"><div class="a " style="left:0.00px;top:0.00px;width:448.60px;height:32.50px;background:#5a5555;border-bottom:0.6px solid #3f3b3b"></div></div>
<span class="t" style="left:612.51px;top:165.00px;font-size:8.750px;color:#fff;text-shadow:0 0 1px rgba(0,0,0,.6);-webkit-text-stroke:0.2px #fff;">Select Assets Types to Display</span>
<svg class="a" style="left:883.2px;top:165.6px" width="7.2" height="7.2" viewBox="0 0 10 10"><path d="M1.2 1.2L8.8 8.8M8.8 1.2L1.2 8.8" stroke="#8d8989" stroke-width="2.6"/></svg>
<span class="t" style="left:614.41px;top:201.00px;font-size:8.740px;color:#333;">From Road Section Record</span>
<span class="t" style="left:625.57px;top:218.00px;font-size:8.740px;color:#333;">To Road Section Record</span>
<div class="a " style="left:724.00px;top:196.60px;width:30.60px;height:14.10px;background:#f6f6f6;border:0.6px solid #dcdcdc;border-radius:1.5px"></div>
<div class="a " style="left:724.00px;top:214.20px;width:30.60px;height:14.10px;background:#f6f6f6;border:0.6px solid #dcdcdc;border-radius:1.5px"></div>
<span class="t" style="left:726.60px;top:201.00px;font-size:8.200px;color:#333;">1</span>
<span class="t" style="left:726.60px;top:218.00px;font-size:8.200px;color:#333;">17</span>
<div class="a " style="left:461.40px;top:236.00px;width:429.80px;height:252.00px;background:#f5f5f5;border:0.6px solid #dcdcdc;border-radius:2.5px"></div>
<span class="t" style="left:650.84px;top:241.00px;font-size:8.750px;color:#444;">Asset Types:</span>
<div class="a " style="left:462.00px;top:254.40px;width:428.60px;height:0.60px;background:#dcdcdc"></div>
<div class="a " style="left:462.00px;top:272.00px;width:428.60px;height:0.60px;background:#dcdcdc"></div>
<div class="a " style="left:676.00px;top:254.60px;width:0.60px;height:17.60px;background:#dcdcdc"></div>
<div class="a " style="left:529.60px;top:255.80px;width:66.20px;height:13.20px;background:#067bff;border-radius:2.5px;border:0.5px solid #0868dc"></div>
<svg class="a" style="left:536.60px;top:257.30px" width="9.6" height="9.6" viewBox="0 0 16 16"><rect x="0.3" y="0.3" width="15.4" height="15.4" rx="1.6" fill="#fff" stroke="#c9d6ea" stroke-width="0.6"/><path d="M3.6 8.6L6.8 11.6L12.6 4.8" fill="none" stroke="#4a4a4a" stroke-width="2.3"/></svg>
<span class="t" style="left:548.20px;top:258.00px;font-size:7.500px;color:#fff;letter-spacing:-0.039px;text-shadow:0 0 0.8px rgba(0,40,130,.75);-webkit-text-stroke:0.28px #fff;">Point Assets</span>
<div class="a " style="left:743.70px;top:255.80px;width:78.70px;height:13.20px;background:#067bff;border-radius:2.5px;border:0.5px solid #0868dc"></div>
<svg class="a" style="left:750.60px;top:257.30px" width="9.6" height="9.6" viewBox="0 0 16 16"><rect x="0.3" y="0.3" width="15.4" height="15.4" rx="1.6" fill="#fff" stroke="#c9d6ea" stroke-width="0.6"/><path d="M3.6 8.6L6.8 11.6L12.6 4.8" fill="none" stroke="#4a4a4a" stroke-width="2.3"/></svg>
<span class="t" style="left:762.60px;top:258.00px;font-size:7.500px;color:#fff;letter-spacing:-0.057px;text-shadow:0 0 0.8px rgba(0,40,130,.75);-webkit-text-stroke:0.28px #fff;">Segment Assets</span>
<div class="a " style="left:462.40px;top:272.80px;width:106.60px;height:13.75px;background:#067bff;border-top:0.5px solid #0868dc;border-bottom:0.5px solid #0868dc;border-radius:2.5px 2.5px 0 0;"></div>
<svg class="a" style="left:468.30px;top:274.60px" width="9.6" height="9.6" viewBox="0 0 16 16"><rect x="0.3" y="0.3" width="15.4" height="15.4" rx="1.6" fill="#fff" stroke="#c9d6ea" stroke-width="0.6"/><path d="M3.6 8.6L6.8 11.6L12.6 4.8" fill="none" stroke="#4a4a4a" stroke-width="2.3"/></svg>
<span class="t" style="left:480.60px;top:276.00px;font-size:7.500px;color:#fff;letter-spacing:-0.070px;text-shadow:0 0 0.8px rgba(0,40,130,.75);-webkit-text-stroke:0.28px #fff;">SIGNS</span>
<div class="a " style="left:462.40px;top:286.55px;width:106.60px;height:13.75px;background:#067bff;border-top:0.5px solid #0868dc;border-bottom:0.5px solid #0868dc;"></div>
<svg class="a" style="left:468.30px;top:288.35px" width="9.6" height="9.6" viewBox="0 0 16 16"><rect x="0.3" y="0.3" width="15.4" height="15.4" rx="1.6" fill="#fff" stroke="#c9d6ea" stroke-width="0.6"/><path d="M3.6 8.6L6.8 11.6L12.6 4.8" fill="none" stroke="#4a4a4a" stroke-width="2.3"/></svg>
<span class="t" style="left:480.60px;top:290.00px;font-size:7.500px;color:#fff;letter-spacing:-0.054px;text-shadow:0 0 0.8px rgba(0,40,130,.75);-webkit-text-stroke:0.28px #fff;">Drains</span>
<div class="a " style="left:462.40px;top:300.30px;width:106.60px;height:13.75px;background:#067bff;border-top:0.5px solid #0868dc;border-bottom:0.5px solid #0868dc;"></div>
<svg class="a" style="left:468.30px;top:302.10px" width="9.6" height="9.6" viewBox="0 0 16 16"><rect x="0.3" y="0.3" width="15.4" height="15.4" rx="1.6" fill="#fff" stroke="#c9d6ea" stroke-width="0.6"/><path d="M3.6 8.6L6.8 11.6L12.6 4.8" fill="none" stroke="#4a4a4a" stroke-width="2.3"/></svg>
<span class="t" style="left:480.60px;top:303.00px;font-size:7.500px;color:#fff;letter-spacing:-0.053px;text-shadow:0 0 0.8px rgba(0,40,130,.75);-webkit-text-stroke:0.28px #fff;">Terminals</span>
<div class="a " style="left:462.40px;top:314.05px;width:106.60px;height:13.75px;background:#067bff;border-top:0.5px solid #0868dc;border-bottom:0.5px solid #0868dc;"></div>
<svg class="a" style="left:468.30px;top:315.85px" width="9.6" height="9.6" viewBox="0 0 16 16"><rect x="0.3" y="0.3" width="15.4" height="15.4" rx="1.6" fill="#fff" stroke="#c9d6ea" stroke-width="0.6"/><path d="M3.6 8.6L6.8 11.6L12.6 4.8" fill="none" stroke="#4a4a4a" stroke-width="2.3"/></svg>
<span class="t" style="left:480.60px;top:317.00px;font-size:7.500px;color:#fff;letter-spacing:-0.053px;text-shadow:0 0 0.8px rgba(0,40,130,.75);-webkit-text-stroke:0.28px #fff;">Flat-SheetSign</span>
<div class="a " style="left:462.40px;top:327.80px;width:106.60px;height:13.75px;background:#067bff;border-top:0.5px solid #0868dc;border-bottom:0.5px solid #0868dc;"></div>
<svg class="a" style="left:468.30px;top:329.60px" width="9.6" height="9.6" viewBox="0 0 16 16"><rect x="0.3" y="0.3" width="15.4" height="15.4" rx="1.6" fill="#fff" stroke="#c9d6ea" stroke-width="0.6"/><path d="M3.6 8.6L6.8 11.6L12.6 4.8" fill="none" stroke="#4a4a4a" stroke-width="2.3"/></svg>
<span class="t" style="left:480.60px;top:331.00px;font-size:7.500px;color:#fff;letter-spacing:-0.057px;text-shadow:0 0 0.8px rgba(0,40,130,.75);-webkit-text-stroke:0.28px #fff;">ExtrudedPanelSign</span>
<div class="a " style="left:462.40px;top:341.55px;width:106.60px;height:13.75px;background:#067bff;border-top:0.5px solid #0868dc;border-bottom:0.5px solid #0868dc;"></div>
<svg class="a" style="left:468.30px;top:343.35px" width="9.6" height="9.6" viewBox="0 0 16 16"><rect x="0.3" y="0.3" width="15.4" height="15.4" rx="1.6" fill="#fff" stroke="#c9d6ea" stroke-width="0.6"/><path d="M3.6 8.6L6.8 11.6L12.6 4.8" fill="none" stroke="#4a4a4a" stroke-width="2.3"/></svg>
<span class="t" style="left:480.60px;top:345.00px;font-size:7.500px;color:#fff;letter-spacing:-0.054px;text-shadow:0 0 0.8px rgba(0,40,130,.75);-webkit-text-stroke:0.28px #fff;">SpecialtyMarkings</span>
<div class="a " style="left:462.40px;top:355.30px;width:106.60px;height:13.75px;background:#067bff;border-top:0.5px solid #0868dc;border-bottom:0.5px solid #0868dc;"></div>
<svg class="a" style="left:468.30px;top:357.10px" width="9.6" height="9.6" viewBox="0 0 16 16"><rect x="0.3" y="0.3" width="15.4" height="15.4" rx="1.6" fill="#fff" stroke="#c9d6ea" stroke-width="0.6"/><path d="M3.6 8.6L6.8 11.6L12.6 4.8" fill="none" stroke="#4a4a4a" stroke-width="2.3"/></svg>
<span class="t" style="left:480.60px;top:358.00px;font-size:7.500px;color:#fff;letter-spacing:-0.056px;text-shadow:0 0 0.8px rgba(0,40,130,.75);-webkit-text-stroke:0.28px #fff;">EntrancePipe</span>
<div class="a " style="left:462.40px;top:369.05px;width:106.60px;height:13.75px;background:#067bff;border-top:0.5px solid #0868dc;border-bottom:0.5px solid #0868dc;"></div>
<svg class="a" style="left:468.30px;top:370.85px" width="9.6" height="9.6" viewBox="0 0 16 16"><rect x="0.3" y="0.3" width="15.4" height="15.4" rx="1.6" fill="#fff" stroke="#c9d6ea" stroke-width="0.6"/><path d="M3.6 8.6L6.8 11.6L12.6 4.8" fill="none" stroke="#4a4a4a" stroke-width="2.3"/></svg>
<span class="t" style="left:480.60px;top:372.00px;font-size:7.500px;color:#fff;letter-spacing:-0.067px;text-shadow:0 0 0.8px rgba(0,40,130,.75);-webkit-text-stroke:0.28px #fff;">CurbRamps</span>
<div class="a " style="left:462.40px;top:382.80px;width:106.60px;height:13.75px;background:#067bff;border-top:0.5px solid #0868dc;border-bottom:0.5px solid #0868dc;"></div>
<svg class="a" style="left:468.30px;top:384.60px" width="9.6" height="9.6" viewBox="0 0 16 16"><rect x="0.3" y="0.3" width="15.4" height="15.4" rx="1.6" fill="#fff" stroke="#c9d6ea" stroke-width="0.6"/><path d="M3.6 8.6L6.8 11.6L12.6 4.8" fill="none" stroke="#4a4a4a" stroke-width="2.3"/></svg>
<span class="t" style="left:480.60px;top:386.00px;font-size:7.500px;color:#fff;letter-spacing:-0.053px;text-shadow:0 0 0.8px rgba(0,40,130,.75);-webkit-text-stroke:0.28px #fff;">BridgeVert</span>
<div class="a " style="left:462.40px;top:396.55px;width:106.60px;height:13.75px;background:#067bff;border-top:0.5px solid #0868dc;border-bottom:0.5px solid #0868dc;border-radius:0 0 2.5px 2.5px;"></div>
<svg class="a" style="left:468.30px;top:398.35px" width="9.6" height="9.6" viewBox="0 0 16 16"><rect x="0.3" y="0.3" width="15.4" height="15.4" rx="1.6" fill="#fff" stroke="#c9d6ea" stroke-width="0.6"/><path d="M3.6 8.6L6.8 11.6L12.6 4.8" fill="none" stroke="#4a4a4a" stroke-width="2.3"/></svg>
<span class="t" style="left:480.60px;top:400.00px;font-size:7.500px;color:#fff;letter-spacing:-0.048px;text-shadow:0 0 0.8px rgba(0,40,130,.75);-webkit-text-stroke:0.28px #fff;">Intersection</span>
<div class="a " style="left:569.70px;top:272.80px;width:106.50px;height:13.75px;background:#067bff;border-top:0.5px solid #0868dc;border-bottom:0.5px solid #0868dc;border-radius:2.5px 2.5px 0 0;"></div>
<svg class="a" style="left:575.60px;top:274.60px" width="9.6" height="9.6" viewBox="0 0 16 16"><rect x="0.3" y="0.3" width="15.4" height="15.4" rx="1.6" fill="#fff" stroke="#c9d6ea" stroke-width="0.6"/><path d="M3.6 8.6L6.8 11.6L12.6 4.8" fill="none" stroke="#4a4a4a" stroke-width="2.3"/></svg>
<span class="t" style="left:587.90px;top:276.00px;font-size:7.500px;color:#fff;letter-spacing:-0.058px;text-shadow:0 0 0.8px rgba(0,40,130,.75);-webkit-text-stroke:0.28px #fff;">Driveway</span>
<div class="a " style="left:569.70px;top:286.55px;width:106.50px;height:13.75px;background:#067bff;border-top:0.5px solid #0868dc;border-bottom:0.5px solid #0868dc;border-radius:0 0 2.5px 2.5px;"></div>
<svg class="a" style="left:575.60px;top:288.35px" width="9.6" height="9.6" viewBox="0 0 16 16"><rect x="0.3" y="0.3" width="15.4" height="15.4" rx="1.6" fill="#fff" stroke="#c9d6ea" stroke-width="0.6"/><path d="M3.6 8.6L6.8 11.6L12.6 4.8" fill="none" stroke="#4a4a4a" stroke-width="2.3"/></svg>
<span class="t" style="left:587.90px;top:290.00px;font-size:7.500px;color:#fff;letter-spacing:-0.054px;text-shadow:0 0 0.8px rgba(0,40,130,.75);-webkit-text-stroke:0.28px #fff;">Gore Point</span>
<div class="a " style="left:676.90px;top:272.80px;width:106.10px;height:13.75px;background:#067bff;border-top:0.5px solid #0868dc;border-bottom:0.5px solid #0868dc;border-radius:2.5px 2.5px 0 0;"></div>
<svg class="a" style="left:682.80px;top:274.60px" width="9.6" height="9.6" viewBox="0 0 16 16"><rect x="0.3" y="0.3" width="15.4" height="15.4" rx="1.6" fill="#fff" stroke="#c9d6ea" stroke-width="0.6"/><path d="M3.6 8.6L6.8 11.6L12.6 4.8" fill="none" stroke="#4a4a4a" stroke-width="2.3"/></svg>
<span class="t" style="left:695.10px;top:276.00px;font-size:7.500px;color:#fff;letter-spacing:-0.063px;text-shadow:0 0 0.8px rgba(0,40,130,.75);-webkit-text-stroke:0.28px #fff;">PavementType</span>
<div class="a " style="left:676.90px;top:286.55px;width:106.10px;height:13.75px;background:#067bff;border-top:0.5px solid #0868dc;border-bottom:0.5px solid #0868dc;"></div>
<svg class="a" style="left:682.80px;top:288.35px" width="9.6" height="9.6" viewBox="0 0 16 16"><rect x="0.3" y="0.3" width="15.4" height="15.4" rx="1.6" fill="#fff" stroke="#c9d6ea" stroke-width="0.6"/><path d="M3.6 8.6L6.8 11.6L12.6 4.8" fill="none" stroke="#4a4a4a" stroke-width="2.3"/></svg>
<span class="t" style="left:695.10px;top:290.00px;font-size:7.500px;color:#fff;letter-spacing:-0.054px;text-shadow:0 0 0.8px rgba(0,40,130,.75);-webkit-text-stroke:0.28px #fff;">Bridge</span>
<div class="a " style="left:676.90px;top:300.30px;width:106.10px;height:13.75px;background:#067bff;border-top:0.5px solid #0868dc;border-bottom:0.5px solid #0868dc;"></div>
<svg class="a" style="left:682.80px;top:302.10px" width="9.6" height="9.6" viewBox="0 0 16 16"><rect x="0.3" y="0.3" width="15.4" height="15.4" rx="1.6" fill="#fff" stroke="#c9d6ea" stroke-width="0.6"/><path d="M3.6 8.6L6.8 11.6L12.6 4.8" fill="none" stroke="#4a4a4a" stroke-width="2.3"/></svg>
<span class="t" style="left:695.10px;top:303.00px;font-size:7.500px;color:#fff;letter-spacing:-0.053px;text-shadow:0 0 0.8px rgba(0,40,130,.75);-webkit-text-stroke:0.28px #fff;">Construction</span>
<div class="a " style="left:676.90px;top:314.05px;width:106.10px;height:13.75px;background:#067bff;border-top:0.5px solid #0868dc;border-bottom:0.5px solid #0868dc;"></div>
<svg class="a" style="left:682.80px;top:315.85px" width="9.6" height="9.6" viewBox="0 0 16 16"><rect x="0.3" y="0.3" width="15.4" height="15.4" rx="1.6" fill="#fff" stroke="#c9d6ea" stroke-width="0.6"/><path d="M3.6 8.6L6.8 11.6L12.6 4.8" fill="none" stroke="#4a4a4a" stroke-width="2.3"/></svg>
<span class="t" style="left:695.10px;top:317.00px;font-size:7.500px;color:#fff;letter-spacing:-0.056px;text-shadow:0 0 0.8px rgba(0,40,130,.75);-webkit-text-stroke:0.28px #fff;">Detour</span>
<div class="a " style="left:676.90px;top:327.80px;width:106.10px;height:13.75px;background:#067bff;border-top:0.5px solid #0868dc;border-bottom:0.5px solid #0868dc;"></div>
<svg class="a" style="left:682.80px;top:329.60px" width="9.6" height="9.6" viewBox="0 0 16 16"><rect x="0.3" y="0.3" width="15.4" height="15.4" rx="1.6" fill="#fff" stroke="#c9d6ea" stroke-width="0.6"/><path d="M3.6 8.6L6.8 11.6L12.6 4.8" fill="none" stroke="#4a4a4a" stroke-width="2.3"/></svg>
<span class="t" style="left:695.10px;top:331.00px;font-size:7.500px;color:#fff;letter-spacing:-0.052px;text-shadow:0 0 0.8px rgba(0,40,130,.75);-webkit-text-stroke:0.28px #fff;">Attenuators</span>
<div class="a " style="left:676.90px;top:341.55px;width:106.10px;height:13.75px;background:#067bff;border-top:0.5px solid #0868dc;border-bottom:0.5px solid #0868dc;"></div>
<svg class="a" style="left:682.80px;top:343.35px" width="9.6" height="9.6" viewBox="0 0 16 16"><rect x="0.3" y="0.3" width="15.4" height="15.4" rx="1.6" fill="#fff" stroke="#c9d6ea" stroke-width="0.6"/><path d="M3.6 8.6L6.8 11.6L12.6 4.8" fill="none" stroke="#4a4a4a" stroke-width="2.3"/></svg>
<span class="t" style="left:695.10px;top:345.00px;font-size:7.500px;color:#fff;letter-spacing:-0.059px;text-shadow:0 0 0.8px rgba(0,40,130,.75);-webkit-text-stroke:0.28px #fff;">Mowable Acres</span>
<div class="a " style="left:676.90px;top:355.30px;width:106.10px;height:13.75px;background:#067bff;border-top:0.5px solid #0868dc;border-bottom:0.5px solid #0868dc;"></div>
<svg class="a" style="left:682.80px;top:357.10px" width="9.6" height="9.6" viewBox="0 0 16 16"><rect x="0.3" y="0.3" width="15.4" height="15.4" rx="1.6" fill="#fff" stroke="#c9d6ea" stroke-width="0.6"/><path d="M3.6 8.6L6.8 11.6L12.6 4.8" fill="none" stroke="#4a4a4a" stroke-width="2.3"/></svg>
<span class="t" style="left:695.10px;top:358.00px;font-size:7.500px;color:#fff;letter-spacing:-0.054px;text-shadow:0 0 0.8px rgba(0,40,130,.75);-webkit-text-stroke:0.28px #fff;">Vegetation/Brush</span>
<div class="a " style="left:676.90px;top:369.05px;width:106.10px;height:13.75px;background:#067bff;border-top:0.5px solid #0868dc;border-bottom:0.5px solid #0868dc;"></div>
<svg class="a" style="left:682.80px;top:370.85px" width="9.6" height="9.6" viewBox="0 0 16 16"><rect x="0.3" y="0.3" width="15.4" height="15.4" rx="1.6" fill="#fff" stroke="#c9d6ea" stroke-width="0.6"/><path d="M3.6 8.6L6.8 11.6L12.6 4.8" fill="none" stroke="#4a4a4a" stroke-width="2.3"/></svg>
<span class="t" style="left:695.10px;top:372.00px;font-size:7.500px;color:#fff;letter-spacing:-0.052px;text-shadow:0 0 0.8px rgba(0,40,130,.75);-webkit-text-stroke:0.28px #fff;">Guardrails</span>
<div class="a " style="left:676.90px;top:382.80px;width:106.10px;height:13.75px;background:#067bff;border-top:0.5px solid #0868dc;border-bottom:0.5px solid #0868dc;"></div>
<svg class="a" style="left:682.80px;top:384.60px" width="9.6" height="9.6" viewBox="0 0 16 16"><rect x="0.3" y="0.3" width="15.4" height="15.4" rx="1.6" fill="#fff" stroke="#c9d6ea" stroke-width="0.6"/><path d="M3.6 8.6L6.8 11.6L12.6 4.8" fill="none" stroke="#4a4a4a" stroke-width="2.3"/></svg>
<span class="t" style="left:695.10px;top:386.00px;font-size:7.500px;color:#fff;letter-spacing:-0.052px;text-shadow:0 0 0.8px rgba(0,40,130,.75);-webkit-text-stroke:0.28px #fff;">Delineators</span>
<div class="a " style="left:676.90px;top:396.55px;width:106.10px;height:13.75px;background:#067bff;border-top:0.5px solid #0868dc;border-bottom:0.5px solid #0868dc;border-radius:0 0 2.5px 2.5px;"></div>
<svg class="a" style="left:682.80px;top:398.35px" width="9.6" height="9.6" viewBox="0 0 16 16"><rect x="0.3" y="0.3" width="15.4" height="15.4" rx="1.6" fill="#fff" stroke="#c9d6ea" stroke-width="0.6"/><path d="M3.6 8.6L6.8 11.6L12.6 4.8" fill="none" stroke="#4a4a4a" stroke-width="2.3"/></svg>
<span class="t" style="left:695.10px;top:400.00px;font-size:7.500px;color:#fff;letter-spacing:-0.056px;text-shadow:0 0 0.8px rgba(0,40,130,.75);-webkit-text-stroke:0.28px #fff;">ControlFence</span>
<div class="a " style="left:783.70px;top:272.80px;width:106.50px;height:13.75px;background:#067bff;border-top:0.5px solid #0868dc;border-bottom:0.5px solid #0868dc;border-radius:2.5px 2.5px 0 0;"></div>
<svg class="a" style="left:789.60px;top:274.60px" width="9.6" height="9.6" viewBox="0 0 16 16"><rect x="0.3" y="0.3" width="15.4" height="15.4" rx="1.6" fill="#fff" stroke="#c9d6ea" stroke-width="0.6"/><path d="M3.6 8.6L6.8 11.6L12.6 4.8" fill="none" stroke="#4a4a4a" stroke-width="2.3"/></svg>
<span class="t" style="left:801.90px;top:276.00px;font-size:7.500px;color:#fff;letter-spacing:-0.060px;text-shadow:0 0 0.8px rgba(0,40,130,.75);-webkit-text-stroke:0.28px #fff;">PavementMarkings</span>
<div class="a " style="left:783.70px;top:286.55px;width:106.50px;height:21.60px;background:#067bff;border-top:0.5px solid #0868dc;border-bottom:0.5px solid #0868dc;"></div>
<svg class="a" style="left:789.60px;top:287.75px" width="9.6" height="9.6" viewBox="0 0 16 16"><rect x="0.3" y="0.3" width="15.4" height="15.4" rx="1.6" fill="#fff" stroke="#c9d6ea" stroke-width="0.6"/><path d="M3.6 8.6L6.8 11.6L12.6 4.8" fill="none" stroke="#4a4a4a" stroke-width="2.3"/></svg>
<span class="t" style="left:789.70px;top:298.00px;font-size:7.500px;color:#fff;letter-spacing:-0.057px;text-shadow:0 0 0.8px rgba(0,40,130,.75);-webkit-text-stroke:0.28px #fff;">RaisedPavementMarkers</span>
<div class="a " style="left:783.70px;top:308.15px;width:106.50px;height:13.75px;background:#067bff;border-top:0.5px solid #0868dc;border-bottom:0.5px solid #0868dc;"></div>
<svg class="a" style="left:789.60px;top:309.95px" width="9.6" height="9.6" viewBox="0 0 16 16"><rect x="0.3" y="0.3" width="15.4" height="15.4" rx="1.6" fill="#fff" stroke="#c9d6ea" stroke-width="0.6"/><path d="M3.6 8.6L6.8 11.6L12.6 4.8" fill="none" stroke="#4a4a4a" stroke-width="2.3"/></svg>
<span class="t" style="left:801.90px;top:311.00px;font-size:7.500px;color:#fff;letter-spacing:-0.051px;text-shadow:0 0 0.8px rgba(0,40,130,.75);-webkit-text-stroke:0.28px #fff;">Ditch</span>
<div class="a " style="left:783.70px;top:321.90px;width:106.50px;height:13.75px;background:#067bff;border-top:0.5px solid #0868dc;border-bottom:0.5px solid #0868dc;"></div>
<svg class="a" style="left:789.60px;top:323.70px" width="9.6" height="9.6" viewBox="0 0 16 16"><rect x="0.3" y="0.3" width="15.4" height="15.4" rx="1.6" fill="#fff" stroke="#c9d6ea" stroke-width="0.6"/><path d="M3.6 8.6L6.8 11.6L12.6 4.8" fill="none" stroke="#4a4a4a" stroke-width="2.3"/></svg>
<span class="t" style="left:801.90px;top:325.00px;font-size:7.500px;color:#fff;letter-spacing:-0.053px;text-shadow:0 0 0.8px rgba(0,40,130,.75);-webkit-text-stroke:0.28px #fff;">ConcreteBarrierWalls</span>
<div class="a " style="left:783.70px;top:335.65px;width:106.50px;height:13.75px;background:#067bff;border-top:0.5px solid #0868dc;border-bottom:0.5px solid #0868dc;"></div>
<svg class="a" style="left:789.60px;top:337.45px" width="9.6" height="9.6" viewBox="0 0 16 16"><rect x="0.3" y="0.3" width="15.4" height="15.4" rx="1.6" fill="#fff" stroke="#c9d6ea" stroke-width="0.6"/><path d="M3.6 8.6L6.8 11.6L12.6 4.8" fill="none" stroke="#4a4a4a" stroke-width="2.3"/></svg>
<span class="t" style="left:801.90px;top:339.00px;font-size:7.500px;color:#fff;letter-spacing:-0.057px;text-shadow:0 0 0.8px rgba(0,40,130,.75);-webkit-text-stroke:0.28px #fff;">Tunnels</span>
<div class="a " style="left:783.70px;top:349.40px;width:106.50px;height:13.75px;background:#067bff;border-top:0.5px solid #0868dc;border-bottom:0.5px solid #0868dc;"></div>
<svg class="a" style="left:789.60px;top:351.20px" width="9.6" height="9.6" viewBox="0 0 16 16"><rect x="0.3" y="0.3" width="15.4" height="15.4" rx="1.6" fill="#fff" stroke="#c9d6ea" stroke-width="0.6"/><path d="M3.6 8.6L6.8 11.6L12.6 4.8" fill="none" stroke="#4a4a4a" stroke-width="2.3"/></svg>
<span class="t" style="left:801.90px;top:353.00px;font-size:7.500px;color:#fff;letter-spacing:-0.057px;text-shadow:0 0 0.8px rgba(0,40,130,.75);-webkit-text-stroke:0.28px #fff;">Curb&amp;Gutter</span>
<div class="a " style="left:783.70px;top:363.15px;width:106.50px;height:13.75px;background:#067bff;border-top:0.5px solid #0868dc;border-bottom:0.5px solid #0868dc;"></div>
<svg class="a" style="left:789.60px;top:364.95px" width="9.6" height="9.6" viewBox="0 0 16 16"><rect x="0.3" y="0.3" width="15.4" height="15.4" rx="1.6" fill="#fff" stroke="#c9d6ea" stroke-width="0.6"/><path d="M3.6 8.6L6.8 11.6L12.6 4.8" fill="none" stroke="#4a4a4a" stroke-width="2.3"/></svg>
<span class="t" style="left:801.90px;top:366.00px;font-size:7.500px;color:#fff;letter-spacing:-0.056px;text-shadow:0 0 0.8px rgba(0,40,130,.75);-webkit-text-stroke:0.28px #fff;">RumbleStrips</span>
<div class="a " style="left:783.70px;top:376.90px;width:106.50px;height:13.75px;background:#067bff;border-top:0.5px solid #0868dc;border-bottom:0.5px solid #0868dc;"></div>
<svg class="a" style="left:789.60px;top:378.70px" width="9.6" height="9.6" viewBox="0 0 16 16"><rect x="0.3" y="0.3" width="15.4" height="15.4" rx="1.6" fill="#fff" stroke="#c9d6ea" stroke-width="0.6"/><path d="M3.6 8.6L6.8 11.6L12.6 4.8" fill="none" stroke="#4a4a4a" stroke-width="2.3"/></svg>
<span class="t" style="left:801.90px;top:380.00px;font-size:7.500px;color:#fff;letter-spacing:-0.056px;text-shadow:0 0 0.8px rgba(0,40,130,.75);-webkit-text-stroke:0.28px #fff;">TravelLaneSurfaceArea</span>
<div class="a " style="left:783.70px;top:390.65px;width:106.50px;height:13.75px;background:#067bff;border-top:0.5px solid #0868dc;border-bottom:0.5px solid #0868dc;"></div>
<svg class="a" style="left:789.60px;top:392.45px" width="9.6" height="9.6" viewBox="0 0 16 16"><rect x="0.3" y="0.3" width="15.4" height="15.4" rx="1.6" fill="#fff" stroke="#c9d6ea" stroke-width="0.6"/><path d="M3.6 8.6L6.8 11.6L12.6 4.8" fill="none" stroke="#4a4a4a" stroke-width="2.3"/></svg>
<span class="t" style="left:801.90px;top:394.00px;font-size:7.500px;color:#fff;letter-spacing:-0.057px;text-shadow:0 0 0.8px rgba(0,40,130,.75);-webkit-text-stroke:0.28px #fff;">ShoulderSurfaceArea</span>
<div class="a " style="left:783.70px;top:404.40px;width:106.50px;height:13.75px;background:#067bff;border-top:0.5px solid #0868dc;border-bottom:0.5px solid #0868dc;"></div>
<svg class="a" style="left:789.60px;top:406.20px" width="9.6" height="9.6" viewBox="0 0 16 16"><rect x="0.3" y="0.3" width="15.4" height="15.4" rx="1.6" fill="#fff" stroke="#c9d6ea" stroke-width="0.6"/><path d="M3.6 8.6L6.8 11.6L12.6 4.8" fill="none" stroke="#4a4a4a" stroke-width="2.3"/></svg>
<span class="t" style="left:801.90px;top:408.00px;font-size:7.500px;color:#fff;letter-spacing:-0.065px;text-shadow:0 0 0.8px rgba(0,40,130,.75);-webkit-text-stroke:0.28px #fff;">No-MowAreas</span>
<div class="a " style="left:783.70px;top:418.15px;width:106.50px;height:13.75px;background:#067bff;border-top:0.5px solid #0868dc;border-bottom:0.5px solid #0868dc;"></div>
<svg class="a" style="left:789.60px;top:419.95px" width="9.6" height="9.6" viewBox="0 0 16 16"><rect x="0.3" y="0.3" width="15.4" height="15.4" rx="1.6" fill="#fff" stroke="#c9d6ea" stroke-width="0.6"/><path d="M3.6 8.6L6.8 11.6L12.6 4.8" fill="none" stroke="#4a4a4a" stroke-width="2.3"/></svg>
<span class="t" style="left:801.90px;top:421.00px;font-size:7.500px;color:#fff;letter-spacing:-0.056px;text-shadow:0 0 0.8px rgba(0,40,130,.75);-webkit-text-stroke:0.28px #fff;">Side Walk</span>
<div class="a " style="left:783.70px;top:431.90px;width:106.50px;height:13.75px;background:#067bff;border-top:0.5px solid #0868dc;border-bottom:0.5px solid #0868dc;"></div>
<svg class="a" style="left:789.60px;top:433.70px" width="9.6" height="9.6" viewBox="0 0 16 16"><rect x="0.3" y="0.3" width="15.4" height="15.4" rx="1.6" fill="#fff" stroke="#c9d6ea" stroke-width="0.6"/><path d="M3.6 8.6L6.8 11.6L12.6 4.8" fill="none" stroke="#4a4a4a" stroke-width="2.3"/></svg>
<span class="t" style="left:801.90px;top:435.00px;font-size:7.500px;color:#fff;letter-spacing:-0.056px;text-shadow:0 0 0.8px rgba(0,40,130,.75);-webkit-text-stroke:0.28px #fff;">Bike Lanes</span>
<div class="a " style="left:783.70px;top:445.65px;width:106.50px;height:13.75px;background:#067bff;border-top:0.5px solid #0868dc;border-bottom:0.5px solid #0868dc;"></div>
<svg class="a" style="left:789.60px;top:447.45px" width="9.6" height="9.6" viewBox="0 0 16 16"><rect x="0.3" y="0.3" width="15.4" height="15.4" rx="1.6" fill="#fff" stroke="#c9d6ea" stroke-width="0.6"/><path d="M3.6 8.6L6.8 11.6L12.6 4.8" fill="none" stroke="#4a4a4a" stroke-width="2.3"/></svg>
<span class="t" style="left:801.90px;top:449.00px;font-size:7.500px;color:#fff;letter-spacing:-0.061px;text-shadow:0 0 0.8px rgba(0,40,130,.75);-webkit-text-stroke:0.28px #fff;">Median</span>
<div class="a " style="left:783.70px;top:459.40px;width:106.50px;height:13.75px;background:#067bff;border-top:0.5px solid #0868dc;border-bottom:0.5px solid #0868dc;"></div>
<svg class="a" style="left:789.60px;top:461.20px" width="9.6" height="9.6" viewBox="0 0 16 16"><rect x="0.3" y="0.3" width="15.4" height="15.4" rx="1.6" fill="#fff" stroke="#c9d6ea" stroke-width="0.6"/><path d="M3.6 8.6L6.8 11.6L12.6 4.8" fill="none" stroke="#4a4a4a" stroke-width="2.3"/></svg>
<span class="t" style="left:801.90px;top:463.00px;font-size:7.500px;color:#fff;letter-spacing:-0.054px;text-shadow:0 0 0.8px rgba(0,40,130,.75);-webkit-text-stroke:0.28px #fff;">Side Slope</span>
<div class="a " style="left:783.70px;top:473.15px;width:106.50px;height:13.75px;background:#067bff;border-top:0.5px solid #0868dc;border-bottom:0.5px solid #0868dc;border-radius:0 0 2.5px 2.5px;"></div>
<svg class="a" style="left:789.60px;top:474.95px" width="9.6" height="9.6" viewBox="0 0 16 16"><rect x="0.3" y="0.3" width="15.4" height="15.4" rx="1.6" fill="#fff" stroke="#c9d6ea" stroke-width="0.6"/><path d="M3.6 8.6L6.8 11.6L12.6 4.8" fill="none" stroke="#4a4a4a" stroke-width="2.3"/></svg>
<span class="t" style="left:801.90px;top:476.00px;font-size:7.500px;color:#fff;letter-spacing:-0.051px;text-shadow:0 0 0.8px rgba(0,40,130,.75);-webkit-text-stroke:0.28px #fff;">Auxiliary Lanes</span>
<div class="a " style="left:452.20px;top:501.30px;width:448.60px;height:0.60px;background:#e5e5e5"></div>
<div class="a " style="left:791.00px;top:511.40px;width:51.00px;height:20.70px;background:#5cb85c;border:0.6px solid #4cae4c;border-radius:2.5px"></div>
<span class="t" style="left:799.25px;top:518.00px;font-size:8.620px;color:#fff;">Continue</span>
<div class="a " style="left:848.00px;top:511.40px;width:43.00px;height:20.70px;background:#d9534f;border:0.6px solid #d43f3a;border-radius:2.5px"></div>
<span class="t" style="left:856.08px;top:518.00px;font-size:8.620px;color:#fff;">Cancel</span>
<svg class="a" style="left:1176px;top:44px" width="424" height="282" viewBox="1176 44 424 282">
<defs>
<linearGradient id="sky" x1="0" y1="44" x2="0" y2="212" gradientUnits="userSpaceOnUse"><stop offset="0" stop-color="#edf3ef"/><stop offset="0.5" stop-color="#e8eeeb"/><stop offset="1" stop-color="#dfe6e3"/></linearGradient>
<linearGradient id="road" x1="0" y1="212" x2="0" y2="326" gradientUnits="userSpaceOnUse"><stop offset="0" stop-color="#aeafa8"/><stop offset="1" stop-color="#b1b1aa"/></linearGradient>
<filter id="b8"><feGaussianBlur stdDeviation="9"/></filter><filter id="b3"><feGaussianBlur stdDeviation="2.2"/></filter><filter id="b1"><feGaussianBlur stdDeviation="0.8"/></filter>
<filter id="leaf" color-interpolation-filters="sRGB" x="0" y="0" width="100%" height="100%"><feTurbulence type="fractalNoise" baseFrequency="0.22" numOctaves="2" seed="5" result="n"/><feColorMatrix in="n" type="matrix" values="0.36 0 0 0 0.10  0.36 0 0 0 0.155  0.30 0 0 0 0.07  0 0 0 0 1" result="c"/><feComposite in="c" in2="SourceGraphic" operator="in"/><feGaussianBlur stdDeviation="0.7"/></filter>
</defs>
<rect x="1176" y="44" width="424" height="282" fill="url(#sky)"/>
<g filter="url(#b8)" opacity="0.55"><ellipse cx="1400" cy="58" rx="60" ry="12" fill="#cbd4cf"/><ellipse cx="1300" cy="112" rx="90" ry="9" fill="#cdd5d1"/><ellipse cx="1440" cy="108" rx="70" ry="12" fill="#c6cfca"/><ellipse cx="1560" cy="60" rx="50" ry="14" fill="#d3dbd7"/><ellipse cx="1290" cy="160" rx="70" ry="10" fill="#d0d8d4"/><ellipse cx="1500" cy="170" rx="90" ry="14" fill="#d5dcd9"/><ellipse cx="1250" cy="70" rx="60" ry="16" fill="#f0f5f2"/><ellipse cx="1500" cy="135" rx="50" ry="8" fill="#eef3f0"/></g>
<path d="M1340 200 Q1380 186 1420 189 Q1470 186 1530 192 L1530 214 L1340 214Z" fill="#6e7f76" filter="url(#b1)"/>
<path d="M1176 212 L1600 212 L1600 326 L1176 326Z" fill="url(#road)"/>
<path d="M1370 212 L1395 212 L1412 326 L1336 326Z" fill="#9a9b94" opacity="0.38" filter="url(#b3)"/>
<path d="M1220 214 L1356 210 L1352 214 L1262 232 L1176 236 L1176 214Z" fill="#959b78" filter="url(#b1)"/>
<path d="M1408 210 L1600 206 L1600 232 L1556 228 Z" fill="#858c68" filter="url(#b1)"/>
<g filter="url(#leaf)"><path d="M1176 182 Q1190 170 1200 172 Q1215 164 1232 168 Q1245 172 1250 182 Q1262 184 1275 186 Q1290 190 1300 188 Q1312 180 1322 184 Q1335 178 1342 186 Q1350 192 1356 210 L1230 214 L1215 226 L1176 236Z" fill="#fff"/>
<path d="M1390 198 Q1400 192 1415 194 Q1430 186 1445 190 Q1460 186 1475 190 Q1490 188 1505 190 Q1520 186 1535 186 Q1548 176 1562 172 Q1575 168 1588 170 Q1592 150 1600 134 L1600 216 L1530 214 L1408 211Z" fill="#fff"/></g>
<path d="M1176 232 L1257 225 L1258 241 L1176 256Z" fill="#b4b8b5"/>
<path d="M1258 228 L1352 212 L1354 214 L1260 238Z" fill="#9aa09d"/>
<path d="M1406 211 L1557 229 L1557 233 L1406 213Z" fill="#c3c9cc"/>
<path d="M1557 226 L1600 229 L1600 245 L1557 238Z" fill="#bfc2bf"/>
<path d="M1176 273.4 L1357 213.6 L1358 214.1 L1176 275.6Z" fill="#d6b654"/>
<path d="M1403 213.2 L1600 261.6 L1600 263.8 L1402.5 213.8Z" fill="#e9eae7"/>
<g fill="#eceeeb"><path d="M1322 266 L1329 266 L1324 275 L1316 275Z"/><path d="M1343 246 L1348 246 L1346 250 L1340.5 250Z"/><path d="M1354 235.5 L1358 235.5 L1356.5 238 L1352.5 238Z"/><path d="M1362 228 L1365 228 L1364 230 L1361 230Z"/><path d="M1367 222 L1369.5 222 L1368.8 223.6 L1366.3 223.6Z"/></g>
<g stroke="#eceeeb" fill="none"><path d="M1411.0 222.0 L1412.4 223.2" stroke-width="0.8"/><path d="M1414.0 224.7 L1415.6 226.1" stroke-width="0.9"/><path d="M1417.4 227.8 L1419.3 229.5" stroke-width="0.9"/><path d="M1421.5 231.5 L1423.7 233.5" stroke-width="1.0"/><path d="M1426.3 235.8 L1428.8 238.1" stroke-width="1.1"/><path d="M1431.8 240.8 L1434.8 243.6" stroke-width="1.2"/><path d="M1438.3 246.7 L1441.9 249.9" stroke-width="1.3"/><path d="M1445.9 253.6 L1450.1 257.3" stroke-width="1.5"/><path d="M1454.8 261.6 L1459.7 266.0" stroke-width="1.6"/><path d="M1465.3 271.1 L1470.9 276.2" stroke-width="1.8"/><path d="M1477.4 282.1 L1484.1 288.1" stroke-width="2.1"/><path d="M1491.7 295.0 L1499.5 302.0" stroke-width="2.3"/><path d="M1508.4 310.1 L1517.5 318.3" stroke-width="2.7"/></g>
<rect x="1362" y="207" width="11" height="8.5" rx="2" fill="#3f4450"/><rect x="1382" y="207" width="8" height="5" rx="1.5" fill="#767d88"/><rect x="1252" y="208" width="9" height="4" rx="1.5" fill="#dfe3e6"/>
<rect x="1551" y="207" width="9.5" height="6.5" fill="#4a6fc0"/><rect x="1555" y="213" width="1.2" height="12" fill="#555"/>
</svg>
<div class="a " style="left:1180.40px;top:47.40px;width:24.60px;height:24.60px;background:#fff;border:0.9px solid #333;border-radius:3.5px"></div>
<svg class="a" style="left:1185px;top:52.4px" width="15.4" height="15" viewBox="0 0 15.4 15"><g fill="#eee" stroke="#222" stroke-width="0.9"><rect x="0.6" y="0.8" width="14.2" height="3" rx="1.5"/><rect x="0.6" y="6" width="14.2" height="3" rx="1.5"/><rect x="0.6" y="11.2" width="14.2" height="3" rx="1.5"/></g></svg>
<svg class="a" style="left:1176px;top:326px" width="424" height="281" viewBox="1176 326 424 281">
<defs><filter id="m6" x="-10%" y="-10%" width="120%" height="120%"><feGaussianBlur stdDeviation="5"/></filter><filter id="m2" x="-10%" y="-10%" width="120%" height="120%"><feGaussianBlur stdDeviation="2.2"/></filter></defs>
<rect x="1176" y="326" width="424" height="281" fill="#4c5b40"/>
<g filter="url(#m2)">
<rect x="1170" y="320" width="79" height="290" fill="#878e76"/>
<rect x="1197" y="320" width="20" height="290" fill="#939980"/>
<rect x="1249" y="320" width="45" height="290" fill="#46553b"/>
<path d="M1290 320 L1337 320 L1337 610 L1255 610 L1262 560 L1290 500Z" fill="#6c775f"/>
<rect x="1335" y="320" width="106" height="290" fill="#8a8e82"/>
<rect x="1343" y="320" width="9" height="290" fill="#a4a799"/>
<rect x="1410" y="320" width="11" height="290" fill="#a2a597"/>
<rect x="1368" y="320" width="26" height="290" fill="#7b8078"/>
<rect x="1430" y="320" width="11" height="290" fill="#8f9484"/>
</g>
<g filter="url(#m6)">
<path d="M1495 390 L1560 400 L1590 470 L1540 480 L1500 440Z" fill="#7c866c"/>
<path d="M1445 560 L1520 480 L1600 470 L1600 610 L1445 610Z" fill="#64714f"/>
<path d="M1255 610 L1270 530 L1335 470 L1335 610Z" fill="#7d8670"/>
<path d="M1560 326 L1600 326 L1600 420 L1570 380Z" fill="#5c6a4c"/>
</g>
<path d="M1346.6 326V410.0" stroke="#f3ea12" stroke-width="1.9"/>
<path d="M1349.0 326V449.6" stroke="#f0521a" stroke-width="1.9"/>
<path d="M1357.2 326V442.4" stroke="#ee22cc" stroke-width="1.9"/>
<path d="M1375.8 326V433.0" stroke="#ee22cc" stroke-width="1.9"/>
<path d="M1376.8 326V425.6" stroke="#f3ea12" stroke-width="1.9"/>
<path d="M1385.0 326V466.0" stroke="#f0521a" stroke-width="1.9"/>
<path d="M1394.6 326V419.5" stroke="#ee22cc" stroke-width="1.9"/>
<path d="M1420.3 326V419.5" stroke="#ee22cc" stroke-width="1.9"/>
<path d="M1423.0 326V404.7" stroke="#f0521a" stroke-width="1.9"/>
<path d="M1439.5 326V393.0" stroke="#f3ea12" stroke-width="1.9"/>
<circle cx="1385" cy="466" r="5" fill="#f0521a" opacity="0.45"/><circle cx="1385" cy="466" r="3.2" fill="#f4470f"/>
<rect x="1176" y="598" width="424" height="9.4" fill="#dfe1dc" opacity="0.82"/>
</svg>
<span class="t" style="left:1175.30px;top:599.00px;font-size:7.300px;color:#3c3c3c;letter-spacing:-0.038px;">Maxar, Microsoft | Esri, HERE, Garmin, iPC</span>
<span class="t" style="left:1543.35px;top:599.00px;font-size:7.300px;color:#3c3c3c;">Powered by Esri</span>
<div class="a " style="left:1561.00px;top:562.80px;width:31.50px;height:31.50px;background:#e9e3d3;border:0.8px solid #fff;box-shadow:0 0 2px rgba(0,0,0,.4)"></div>
<svg class="a" style="left:1561px;top:562.8px" width="31.5" height="31.5" viewBox="0 0 31.5 31.5"><path d="M22 0 Q30 10 31 26" stroke="#e8956a" stroke-width="1.2" fill="none"/><path d="M3 12L20 5M5 24L24 14M10 4L14 28" stroke="#fff" stroke-width="0.9"/></svg>
<div class="a " style="left:1180.00px;top:335.00px;width:20.00px;height:20.00px;background:#fff;border-radius:0;box-shadow:0 0 1.5px rgba(0,0,0,.35)"><svg class="a" style="left:4.1px;top:4px" width="11" height="11" viewBox="0 0 22 22" fill="none" stroke="#6e6e6e" stroke-width="1.6"><path d="M11 2V20M2 11H20"/></svg></div>
<div class="a " style="left:1180.00px;top:354.80px;width:20.00px;height:0.60px;background:#e0e0e0"></div>
<div class="a " style="left:1180.00px;top:355.00px;width:20.00px;height:20.00px;background:#fff;border-radius:0;box-shadow:0 0 1.5px rgba(0,0,0,.35)"><svg class="a" style="left:4.1px;top:4px" width="11" height="11" viewBox="0 0 22 22" fill="none" stroke="#6e6e6e" stroke-width="1.6"><path d="M3 11H19"/></svg></div>
<div class="a " style="left:1180.00px;top:381.00px;width:20.00px;height:20.00px;background:#fff;border-radius:0;box-shadow:0 0 1.5px rgba(0,0,0,.35)"><svg class="a" style="left:4.1px;top:4px" width="11" height="11" viewBox="0 0 22 22" fill="none" stroke="#6e6e6e" stroke-width="1.6"><path d="M11 1.5V20.5M1.5 11H20.5M8 4.5L11 1.5L14 4.5M8 17.5L11 20.5L14 17.5M4.5 8L1.5 11L4.5 14M17.5 8L20.5 11L17.5 14" stroke="#333"/></svg><svg class="a" style="left:16.6px;top:0" width="3.4" height="3.4" viewBox="0 0 4 4"><path d="M0 0H4V4Z" fill="#222"/></svg></div>
<div class="a " style="left:1180.00px;top:400.80px;width:20.00px;height:0.60px;background:#e0e0e0"></div>
<div class="a " style="left:1180.00px;top:401.00px;width:20.00px;height:20.00px;background:#fff;border-radius:0;box-shadow:0 0 1.5px rgba(0,0,0,.35)"><svg class="a" style="left:4.1px;top:4px" width="11" height="11" viewBox="0 0 22 22" fill="none" stroke="#6e6e6e" stroke-width="1.6"><path d="M17.5 13.5A7 7 0 1 1 16 6M16.5 11.5L17.8 14.5L20.5 12.8"/></svg></div>
<div class="a " style="left:1180.00px;top:427.30px;width:20.00px;height:20.00px;background:#fff;border-radius:10px;box-shadow:0 0 1.5px rgba(0,0,0,.35)"><svg class="a" style="left:4.1px;top:4px" width="11" height="11" viewBox="0 0 22 22" fill="none" stroke="#6e6e6e" stroke-width="1.6"><path d="M1.500 11L8.500 7.800L20.500 10.600L8.500 14.200Z" stroke="#333" stroke-width="1.300"/><path d="M1.500 11L8.500 7.800L11 10.800L8.500 14.200Z" fill="#333" stroke="none"/></svg></div>
<div class="a " style="left:1180.00px;top:454.00px;width:20.00px;height:20.00px;background:#fff;border-radius:0;box-shadow:0 0 1.5px rgba(0,0,0,.35)"><svg class="a" style="left:4.1px;top:4px" width="11" height="11" viewBox="0 0 22 22" fill="none" stroke="#6e6e6e" stroke-width="1.6"><path d="M6.5 7.5Q6.5 2.5 11 2.5Q15.500 2.5 15.500 7.5V15.500L11 19.5L6.5 15.500Z M11 6V10" stroke="#555"/></svg></div>
<div class="a " style="left:1180.00px;top:480.00px;width:20.00px;height:20.00px;background:#fff;border-radius:0;box-shadow:0 0 1.5px rgba(0,0,0,.35)"><svg class="a" style="left:4.1px;top:4px" width="11" height="11" viewBox="0 0 22 22" fill="none" stroke="#6e6e6e" stroke-width="1.6"><path d="M1.500 11Q11 1.500 20.500 11Q11 20.500 1.500 11Z" stroke="#444"/><circle cx="11" cy="11" r="3.2" fill="#444" stroke="none"/></svg></div>
<div class="a " style="left:1180.00px;top:506.00px;width:20.00px;height:20.00px;background:#fff;border-radius:0;box-shadow:0 0 1.5px rgba(0,0,0,.35)"><svg class="a" style="left:4.1px;top:4px" width="11" height="11" viewBox="0 0 22 22" fill="none" stroke="#6e6e6e" stroke-width="1.6"><path d="M3.500 6L11 9.5L18.500 3.500V18.500H3.500Z" stroke="#555"/></svg></div>
<div class="a " style="left:1180.00px;top:532.00px;width:20.00px;height:20.00px;background:#fff;border-radius:0;box-shadow:0 0 1.5px rgba(0,0,0,.35)"><svg class="a" style="left:4.1px;top:4px" width="11" height="11" viewBox="0 0 22 22" fill="none" stroke="#6e6e6e" stroke-width="1.6"><circle cx="9" cy="9" r="6" stroke="#555" stroke-width="2"/><path d="M13.500 13.500L20 20" stroke="#555" stroke-width="2.4"/></svg></div>
<div class="a " style="left:185.00px;top:607.40px;width:1415.00px;height:19.40px;background:#1e1e1e"></div>
<div class="a " style="left:185.00px;top:626.60px;width:1415.00px;height:3.20px;background:linear-gradient(#2a2a2a,#404040 40%,#4a4a4a)"></div>
<div class="a " style="left:185.00px;top:607.40px;width:50.60px;height:19.20px;background:#242424;border:0.8px solid #3d3d3d"></div>
<svg class="a" style="left:191.6px;top:612.2px" width="8.6" height="8.6" viewBox="0 0 20 20"><path d="M10 1.2L11.6 1.4L12.2 3.8L14 4.6L16.2 3.4L17.6 4.8L16.400 7L17 8.800L19.400 9.400V11.400L17 12L16.200 13.800L17.400 16L16 17.400L13.800 16.200L12 17L11.400 19.400H9.400L8.800 17L7 16.200L4.800 17.400L3.400 16L4.600 13.800L3.800 12L1.400 11.400V9.400L3.800 8.800L4.600 7L3.400 4.800L4.800 3.400L7 4.600L8.800 3.800L9.400 1.400Z" fill="#b5b5b5"/><circle cx="10.4" cy="10.4" r="3.6" fill="#242424"/></svg>
<span class="t" style="left:200.50px;top:614.00px;font-size:7.900px;color:#a9a9a9;letter-spacing:0.045px;">Settings</span>
<div class="a " style="left:1519.50px;top:607.40px;width:80.50px;height:19.20px;background:#242424;border:0.8px solid #3d3d3d"></div>
<svg class="a" style="left:1525.6px;top:613.4px" width="7.6" height="6" viewBox="0 0 15 12"><path d="M1.5 2L7.5 8.5L13.5 2" fill="none" stroke="#c8c8c8" stroke-width="3.2"/></svg>
<span class="t" style="left:1533.70px;top:614.00px;font-size:7.900px;color:#a9a9a9;letter-spacing:0.123px;">Close DataBase</span>
<svg class="a" style="left:758.00px;top:606.80px" width="22" height="21" viewBox="0 0 22 21"><path d="M2 5.500H20M2 5.500L5 3M2 5.500L5 8M20 5.500L17 3M20 5.500L17 8" stroke="#d8363a" stroke-width="1.1" fill="none"/><rect x="1" y="11" width="20" height="6" fill="#f2b01e"/><path d="M3.500 11V14M6 11V13M8.500 11V14M11 11V13M13.500 11V14M16 11V13M18.500 11V14" stroke="#7a5200" stroke-width="0.7"/></svg>
<svg class="a" style="left:788.00px;top:605.80px" width="22" height="21" viewBox="0 0 22 21"><path d="M5.500 2V18M5.500 2L3 5M5.500 2L8 5M5.500 18L3 15M5.500 18L8 15" stroke="#2a7bf0" stroke-width="1.3" fill="none"/><rect x="12" y="1.500" width="5.500" height="17.500" fill="#f2b01e"/><path d="M12 4H14.500M12 6.500H13.800M12 9H14.500M12 11.500H13.800M12 14H14.500M12 16.500H13.800" stroke="#7a5200" stroke-width="0.7"/></svg>
<svg class="a" style="left:815.60px;top:605.80px" width="22" height="21" viewBox="0 0 22 21"><circle cx="11" cy="10.500" r="2.700" fill="#12e020"/></svg>
<svg class="a" style="left:843.00px;top:606.40px" width="22" height="21" viewBox="0 0 22 21"><rect x="4" y="6" width="10.500" height="10.500" rx="1" fill="none" stroke="#12d820" stroke-width="1.5"/><path d="M4 3H14.500M17.500 6V16.500" stroke="#12d820" stroke-width="1.3"/><path d="M3 3L5 2V4ZM15.500 3L13.500 2V4ZM17.500 5L16.500 7H18.500ZM17.500 17.500L16.500 15.500H18.500Z" fill="#12d820"/></svg>
<svg class="a" style="left:870.80px;top:606.60px" width="22" height="21" viewBox="0 0 22 21"><path d="M5 3.500V16H17" stroke="#e01818" stroke-width="1.400" fill="none"/><path d="M5 10Q10.500 10.500 11.500 16" stroke="#e01818" stroke-width="1.100" fill="none"/><circle cx="5" cy="3" r="1.600" fill="#12e020"/><circle cx="5" cy="16" r="1.600" fill="#12e020"/><circle cx="17" cy="16" r="1.600" fill="#12e020"/></svg>
<svg class="a" style="left:898.60px;top:605.80px" width="22" height="21" viewBox="0 0 22 21"><path d="M11 1.500L20 10.500L11 19.500L2 10.500Z" fill="#f2c414" stroke="#4a3a00" stroke-width="0.700"/><path d="M11 4.500V8M11 13V16.500M9.500 6L11 4.500L12.500 6M9.500 15L11 16.500L12.500 15" stroke="#222" stroke-width="0.900" fill="none"/><path d="M6.500 9H15.500V12H6.500Z" fill="#222"/></svg>
<svg class="a" style="left:926.00px;top:605.80px" width="22" height="21" viewBox="0 0 22 21"><path d="M11 1.500L20 10.500L11 19.500L2 10.500Z" fill="#f2c414" stroke="#4a3a00" stroke-width="0.700"/><path d="M4.500 10.500H17.500M6 9L4.500 10.500L6 12M16 9L17.500 10.500L16 12" stroke="#222" stroke-width="0.900" fill="none"/><path d="M8 9H14V12H8Z" fill="#222"/></svg>
<svg class="a" style="left:953.00px;top:604.80px" width="22" height="21" viewBox="0 0 22 21"><path d="M6.500 6.500H14.500V9Q11.500 11.300 14.500 13.600V16H6.500Z" fill="#f23a12"/><circle cx="6" cy="6" r="1.400" fill="#12e020"/><circle cx="15.400" cy="6" r="1.400" fill="#12e020"/><circle cx="6" cy="16.600" r="1.400" fill="#12e020"/><circle cx="15" cy="16.600" r="1.400" fill="#12e020"/><circle cx="13" cy="11.300" r="1.400" fill="#12e020"/></svg>
<svg class="a" style="left:981.40px;top:604.80px" width="22" height="21" viewBox="0 0 22 21"><path d="M3.500 13L17.500 7.800L18.400 12.600L4.500 16.500Z" fill="#1c2224" stroke="#6fa3a8" stroke-width="0.900"/><path d="M2 18.200L18.600 12.800V17.400L2.400 18.600Z" fill="#e9f1f4"/></svg>
<svg class="a" style="left:1008.60px;top:604.60px" width="22" height="21" viewBox="0 0 22 21"><path d="M4.700 4.500L17.300 18.300M17.300 4.500L4.700 18.300" stroke="#f01010" stroke-width="1.800"/></svg>
<div class="a " style="left:185.00px;top:629.80px;width:1415.00px;height:243.70px;background:#fff"></div>
<div class="a " style="left:185.00px;top:873.40px;width:1415.00px;height:1.60px;background:#2a2a2a"></div>
<div class="a " style="left:185.00px;top:629.60px;width:1415.00px;height:15.40px;background:#f5f5f5;border-bottom:0.6px solid #d6d6d6"></div>
<span class="t" style="left:189.00px;top:635.00px;font-size:7.500px;color:#333;letter-spacing:-0.146px;">File</span><svg class="a" style="left:204.90px;top:637.10px" width="4.2" height="2.6" viewBox="0 0 8 5"><path d="M0 0H8L4 5Z" fill="#8a8f94"/></svg>
<span class="t" style="left:216.60px;top:635.00px;font-size:7.500px;color:#333;letter-spacing:0.069px;">Edit</span><svg class="a" style="left:234.20px;top:637.10px" width="4.2" height="2.6" viewBox="0 0 8 5"><path d="M0 0H8L4 5Z" fill="#8a8f94"/></svg>
<span class="t" style="left:245.00px;top:635.00px;font-size:7.500px;color:#333;letter-spacing:0.151px;">Options</span><svg class="a" style="left:276.30px;top:637.10px" width="4.2" height="2.6" viewBox="0 0 8 5"><path d="M0 0H8L4 5Z" fill="#8a8f94"/></svg>
<div class="a " style="left:286.60px;top:632.20px;width:0.70px;height:10.60px;background:#b5b5b5"></div>
<div class="a " style="left:292.20px;top:630.80px;width:79.40px;height:13.60px;background:#fff;border:0.6px solid #d9d9d9;border-radius:2px"></div>
<svg class="a" style="left:296.2px;top:634.6px" width="6.400" height="6.400" viewBox="0 0 12 12"><path d="M1 11L11 1M4.500 11.500L11.500 4.500M8 11.500L11.500 8" stroke="#777" stroke-width="1.100"/></svg>
<span class="t" style="left:304.70px;top:635.00px;font-size:7.500px;color:#333;letter-spacing:0.026px;">Assets Types Filter</span>
<div class="a " style="left:376.40px;top:632.20px;width:0.70px;height:10.60px;background:#b5b5b5"></div>
<div class="a " style="left:185.00px;top:645.00px;width:1415.00px;height:11.60px;background:#f3f3f3;border-bottom:0.6px solid #d0d0d0"></div>
<div class="a " style="left:203.60px;top:842.40px;width:1378.80px;height:13.20px;background:#fbf67c"></div>
<div class="a " style="left:203.60px;top:855.30px;width:1378.80px;height:0.60px;background:#e6de6a"></div>
<div class="a " style="left:203.30px;top:645.00px;width:0.60px;height:210.50px;background:#e6e6e6"></div>
<div class="a " style="left:269.50px;top:645.00px;width:0.60px;height:210.50px;background:#e6e6e6"></div>
<div class="a " style="left:317.10px;top:645.00px;width:0.60px;height:210.50px;background:#e6e6e6"></div>
<div class="a " style="left:363.70px;top:645.00px;width:0.60px;height:210.50px;background:#e6e6e6"></div>
<div class="a " style="left:400.70px;top:645.00px;width:0.60px;height:210.50px;background:#e6e6e6"></div>
<div class="a " style="left:445.70px;top:645.00px;width:0.60px;height:210.50px;background:#e6e6e6"></div>
<div class="a " style="left:495.30px;top:645.00px;width:0.60px;height:210.50px;background:#e6e6e6"></div>
<div class="a " style="left:540.10px;top:645.00px;width:0.60px;height:210.50px;background:#e6e6e6"></div>
<div class="a " style="left:586.40px;top:645.00px;width:0.60px;height:210.50px;background:#e6e6e6"></div>
<div class="a " style="left:636.00px;top:645.00px;width:0.60px;height:210.50px;background:#e6e6e6"></div>
<div class="a " style="left:683.60px;top:645.00px;width:0.60px;height:210.50px;background:#e6e6e6"></div>
<div class="a " style="left:707.90px;top:645.00px;width:0.60px;height:210.50px;background:#e6e6e6"></div>
<div class="a " style="left:755.40px;top:645.00px;width:0.60px;height:210.50px;background:#e6e6e6"></div>
<div class="a " style="left:802.00px;top:645.00px;width:0.60px;height:210.50px;background:#e6e6e6"></div>
<div class="a " style="left:848.50px;top:645.00px;width:0.60px;height:210.50px;background:#e6e6e6"></div>
<div class="a " style="left:896.10px;top:645.00px;width:0.60px;height:210.50px;background:#e6e6e6"></div>
<div class="a " style="left:947.40px;top:645.00px;width:0.60px;height:210.50px;background:#e6e6e6"></div>
<div class="a " style="left:998.70px;top:645.00px;width:0.60px;height:210.50px;background:#e6e6e6"></div>
<div class="a " style="left:1034.20px;top:645.00px;width:0.60px;height:210.50px;background:#e6e6e6"></div>
<div class="a " style="left:1069.60px;top:645.00px;width:0.60px;height:210.50px;background:#e6e6e6"></div>
<div class="a " style="left:1119.20px;top:645.00px;width:0.60px;height:210.50px;background:#e6e6e6"></div>
<div class="a " style="left:1169.50px;top:645.00px;width:0.60px;height:210.50px;background:#e6e6e6"></div>
<div class="a " style="left:1232.10px;top:645.00px;width:0.60px;height:210.50px;background:#e6e6e6"></div>
<div class="a " style="left:1294.50px;top:645.00px;width:0.60px;height:210.50px;background:#e6e6e6"></div>
<div class="a " style="left:1337.90px;top:645.00px;width:0.60px;height:210.50px;background:#e6e6e6"></div>
<div class="a " style="left:1382.20px;top:645.00px;width:0.60px;height:210.50px;background:#e6e6e6"></div>
<div class="a " style="left:1425.90px;top:645.00px;width:0.60px;height:210.50px;background:#e6e6e6"></div>
<div class="a " style="left:1469.30px;top:645.00px;width:0.60px;height:210.50px;background:#e6e6e6"></div>
<div class="a " style="left:1513.30px;top:645.00px;width:0.60px;height:210.50px;background:#e6e6e6"></div>
<div class="a " style="left:1550.70px;top:645.00px;width:0.60px;height:210.50px;background:#e6e6e6"></div>
<div class="a " style="left:1582.10px;top:645.00px;width:0.60px;height:210.50px;background:#e6e6e6"></div>
<span class="t" style="left:218.55px;top:648.00px;font-size:6.875px;color:#555;">AssetGroup</span>
<span class="t" style="left:273.55px;top:648.00px;font-size:6.875px;color:#555;">PostStart(mi)</span>
<span class="t" style="left:321.79px;top:648.00px;font-size:6.875px;color:#555;">PostEnd(mi)</span>
<span class="t" style="left:367.79px;top:648.00px;font-size:6.875px;color:#555;">Length(ft)</span>
<span class="t" style="left:404.01px;top:648.00px;font-size:6.875px;color:#555;">LatitudeStart</span>
<span class="t" style="left:449.40px;top:648.00px;font-size:6.875px;color:#555;">LongitudeStar</span>
<span class="t" style="left:499.65px;top:648.00px;font-size:6.875px;color:#555;">LatitudeEnd</span>
<span class="t" style="left:542.53px;top:648.00px;font-size:6.875px;color:#555;">LongitudeEnc</span>
<span class="t" style="left:589.72px;top:648.00px;font-size:6.875px;color:#555;">AltitudeStart(ft</span>
<span class="t" style="left:639.46px;top:648.00px;font-size:6.875px;color:#555;">AltitudeEnd(ft</span>
<span class="t" style="left:690.89px;top:648.00px;font-size:6.875px;color:#555;">Set</span>
<span class="t" style="left:715.14px;top:648.00px;font-size:6.875px;color:#555;">StartImage</span>
<span class="t" style="left:763.33px;top:648.00px;font-size:6.875px;color:#555;">EndImage</span>
<span class="t" style="left:807.40px;top:648.00px;font-size:6.875px;color:#555;">EdgeDist(ft)</span>
<span class="t" style="left:852.73px;top:648.00px;font-size:6.875px;color:#555;">SignWidth(ft)</span>
<span class="t" style="left:901.04px;top:648.00px;font-size:6.875px;color:#555;">SignHeight(ft)</span>
<span class="t" style="left:952.34px;top:648.00px;font-size:6.875px;color:#555;">PostHeight(ft)</span>
<span class="t" style="left:1004.15px;top:648.00px;font-size:6.875px;color:#555;">Area(ft²)</span>
<span class="t" style="left:1039.74px;top:648.00px;font-size:6.875px;color:#555;">Slope(°)</span>
<span class="t" style="left:1071.77px;top:648.00px;font-size:6.875px;color:#555;">RoadImageSta</span>
<span class="t" style="left:1122.68px;top:648.00px;font-size:6.875px;color:#555;">RoadImageEn</span>
<span class="t" style="left:1184.48px;top:648.00px;font-size:6.875px;color:#555;">Comments</span>
<span class="t" style="left:1252.13px;top:648.00px;font-size:6.875px;color:#555;">Legend</span>
<span class="t" style="left:1298.29px;top:648.00px;font-size:6.875px;color:#555;">SurveyTime</span>
<span class="t" style="left:1347.35px;top:648.00px;font-size:6.875px;color:#555;">Location</span>
<span class="t" style="left:1389.83px;top:648.00px;font-size:6.875px;color:#555;">Condition</span>
<span class="t" style="left:1431.09px;top:648.00px;font-size:6.875px;color:#555;">Orientation</span>
<span class="t" style="left:1472.68px;top:648.00px;font-size:6.875px;color:#555;">Mount_Type</span>
<span class="t" style="left:1518.74px;top:648.00px;font-size:6.875px;color:#555;">Operator</span>
<span class="t" style="left:1561.54px;top:648.00px;font-size:6.875px;color:#555;">Ver</span>
<div class="a" style="left:0;top:656.8px;width:1600px;height:6px;overflow:hidden"><div class="a" style="left:0;top:-656.8px;width:1600px;height:875px"><span class="t" style="left:186.65px;top:654.00px;font-size:6.875px;color:#444;">2885</span><span class="t" style="left:221.99px;top:654.00px;font-size:6.875px;color:#333;">Terminals</span><span class="t" style="left:298.60px;top:654.00px;font-size:6.875px;color:#333;">1.983</span><span class="t" style="left:345.20px;top:654.00px;font-size:6.875px;color:#333;">1.983</span><span class="t" style="left:389.84px;top:654.00px;font-size:6.875px;color:#333;">0.0</span><span class="t" style="left:408.08px;top:654.00px;font-size:6.875px;color:#333;">36.0778171</span><span class="t" style="left:455.39px;top:654.00px;font-size:6.875px;color:#333;">-87.2644018</span><span class="t" style="left:502.48px;top:654.00px;font-size:6.875px;color:#333;">36.0778171</span><span class="t" style="left:546.49px;top:654.00px;font-size:6.875px;color:#333;">-87.2644018</span><span class="t" style="left:617.50px;top:654.00px;font-size:6.875px;color:#333;">751.6</span><span class="t" style="left:665.10px;top:654.00px;font-size:6.875px;color:#333;">751.6</span><span class="t" style="left:690.32px;top:654.00px;font-size:6.875px;color:#333;">777</span><span class="t" style="left:713.79px;top:654.00px;font-size:6.875px;color:#333;">00:57:19:22</span><span class="t" style="left:760.84px;top:654.00px;font-size:6.875px;color:#333;">00:57:19:22</span><span class="t" style="left:837.64px;top:654.00px;font-size:6.875px;color:#333;">0.0</span><span class="t" style="left:885.24px;top:654.00px;font-size:6.875px;color:#333;">0.0</span><span class="t" style="left:936.54px;top:654.00px;font-size:6.875px;color:#333;">0.0</span><span class="t" style="left:987.84px;top:654.00px;font-size:6.875px;color:#333;">2.0</span><span class="t" style="left:1023.34px;top:654.00px;font-size:6.875px;color:#333;">0.0</span><span class="t" style="left:1054.92px;top:654.00px;font-size:6.875px;color:#333;">0.00</span><span class="t" style="left:1076.54px;top:654.00px;font-size:6.875px;color:#333;">00:57:20:05</span><span class="t" style="left:1126.49px;top:654.00px;font-size:6.875px;color:#333;">00:57:20:05</span><span class="t" style="left:1299.30px;top:654.00px;font-size:6.875px;color:#333;">09/04/2020</span><span class="t" style="left:1339.14px;top:654.00px;font-size:6.875px;color:#333;">Standard Con</span><span class="t" style="left:1396.33px;top:654.00px;font-size:6.875px;color:#333;">Right</span><span class="t" style="left:1526.57px;top:654.00px;font-size:6.875px;color:#333;">236</span><span class="t" style="left:1560.01px;top:654.00px;font-size:6.875px;color:#333;">2.28</span></div></div>
<div class="a " style="left:185.00px;top:662.50px;width:1397.40px;height:0.60px;background:#ececec"></div>
<span class="t" style="left:186.65px;top:667.00px;font-size:6.875px;color:#444;">2886</span><span class="t" style="left:219.31px;top:667.00px;font-size:6.875px;color:#333;">Delineators</span><span class="t" style="left:298.60px;top:667.00px;font-size:6.875px;color:#333;">1.984</span><span class="t" style="left:345.20px;top:667.00px;font-size:6.875px;color:#333;">1.996</span><span class="t" style="left:386.02px;top:667.00px;font-size:6.875px;color:#333;">64.2</span><span class="t" style="left:408.08px;top:667.00px;font-size:6.875px;color:#333;">36.0778712</span><span class="t" style="left:455.39px;top:667.00px;font-size:6.875px;color:#333;">-87.2644171</span><span class="t" style="left:502.48px;top:667.00px;font-size:6.875px;color:#333;">36.0777338</span><span class="t" style="left:546.49px;top:667.00px;font-size:6.875px;color:#333;">-87.2642427</span><span class="t" style="left:617.50px;top:667.00px;font-size:6.875px;color:#333;">748.9</span><span class="t" style="left:665.10px;top:667.00px;font-size:6.875px;color:#333;">751.2</span><span class="t" style="left:690.32px;top:667.00px;font-size:6.875px;color:#333;">777</span><span class="t" style="left:713.79px;top:667.00px;font-size:6.875px;color:#333;">00:57:19:22</span><span class="t" style="left:760.84px;top:667.00px;font-size:6.875px;color:#333;">00:57:20:13</span><span class="t" style="left:837.64px;top:667.00px;font-size:6.875px;color:#333;">0.6</span><span class="t" style="left:885.24px;top:667.00px;font-size:6.875px;color:#333;">0.0</span><span class="t" style="left:936.54px;top:667.00px;font-size:6.875px;color:#333;">0.0</span><span class="t" style="left:987.84px;top:667.00px;font-size:6.875px;color:#333;">0.0</span><span class="t" style="left:1023.34px;top:667.00px;font-size:6.875px;color:#333;">0.0</span><span class="t" style="left:1054.92px;top:667.00px;font-size:6.875px;color:#333;">0.00</span><span class="t" style="left:1076.54px;top:667.00px;font-size:6.875px;color:#333;">00:57:20:07</span><span class="t" style="left:1126.49px;top:667.00px;font-size:6.875px;color:#333;">00:57:21:04</span><span class="t" style="left:1197.28px;top:667.00px;font-size:6.875px;color:#333;">15</span><span class="t" style="left:1299.30px;top:667.00px;font-size:6.875px;color:#333;">09/03/2020</span><span class="t" style="left:1339.33px;top:667.00px;font-size:6.875px;color:#333;">Groundmount</span><span class="t" style="left:1398.62px;top:667.00px;font-size:6.875px;color:#333;">Left</span><span class="t" style="left:1526.57px;top:667.00px;font-size:6.875px;color:#333;">246</span><span class="t" style="left:1560.01px;top:667.00px;font-size:6.875px;color:#333;">2.28</span>
<div class="a " style="left:185.00px;top:676.25px;width:1397.40px;height:0.60px;background:#ececec"></div>
<span class="t" style="left:186.65px;top:681.00px;font-size:6.875px;color:#444;">2887</span><span class="t" style="left:219.31px;top:681.00px;font-size:6.875px;color:#333;">Delineators</span><span class="t" style="left:298.60px;top:681.00px;font-size:6.875px;color:#333;">1.981</span><span class="t" style="left:345.20px;top:681.00px;font-size:6.875px;color:#333;">1.998</span><span class="t" style="left:386.02px;top:681.00px;font-size:6.875px;color:#333;">91.9</span><span class="t" style="left:408.08px;top:681.00px;font-size:6.875px;color:#333;">36.0778240</span><span class="t" style="left:455.39px;top:681.00px;font-size:6.875px;color:#333;">-87.2644744</span><span class="t" style="left:502.48px;top:681.00px;font-size:6.875px;color:#333;">36.0776850</span><span class="t" style="left:546.49px;top:681.00px;font-size:6.875px;color:#333;">-87.2642981</span><span class="t" style="left:617.50px;top:681.00px;font-size:6.875px;color:#333;">748.9</span><span class="t" style="left:665.10px;top:681.00px;font-size:6.875px;color:#333;">751.2</span><span class="t" style="left:690.32px;top:681.00px;font-size:6.875px;color:#333;">777</span><span class="t" style="left:713.79px;top:681.00px;font-size:6.875px;color:#333;">00:57:19:22</span><span class="t" style="left:760.84px;top:681.00px;font-size:6.875px;color:#333;">00:57:20:13</span><span class="t" style="left:837.64px;top:681.00px;font-size:6.875px;color:#333;">1.7</span><span class="t" style="left:885.24px;top:681.00px;font-size:6.875px;color:#333;">0.0</span><span class="t" style="left:936.54px;top:681.00px;font-size:6.875px;color:#333;">0.0</span><span class="t" style="left:987.84px;top:681.00px;font-size:6.875px;color:#333;">0.0</span><span class="t" style="left:1023.34px;top:681.00px;font-size:6.875px;color:#333;">0.0</span><span class="t" style="left:1054.92px;top:681.00px;font-size:6.875px;color:#333;">0.00</span><span class="t" style="left:1076.54px;top:681.00px;font-size:6.875px;color:#333;">00:57:20:05</span><span class="t" style="left:1126.49px;top:681.00px;font-size:6.875px;color:#333;">00:57:21:09</span><span class="t" style="left:1197.28px;top:681.00px;font-size:6.875px;color:#333;">15</span><span class="t" style="left:1299.30px;top:681.00px;font-size:6.875px;color:#333;">09/03/2020</span><span class="t" style="left:1339.33px;top:681.00px;font-size:6.875px;color:#333;">Groundmount</span><span class="t" style="left:1396.33px;top:681.00px;font-size:6.875px;color:#333;">Right</span><span class="t" style="left:1526.57px;top:681.00px;font-size:6.875px;color:#333;">246</span><span class="t" style="left:1560.01px;top:681.00px;font-size:6.875px;color:#333;">2.28</span>
<div class="a " style="left:185.00px;top:690.00px;width:1397.40px;height:0.60px;background:#ececec"></div>
<span class="t" style="left:186.65px;top:695.00px;font-size:6.875px;color:#444;">2888</span><span class="t" style="left:220.84px;top:695.00px;font-size:6.875px;color:#333;">Guardrails</span><span class="t" style="left:298.60px;top:695.00px;font-size:6.875px;color:#333;">1.983</span><span class="t" style="left:345.20px;top:695.00px;font-size:6.875px;color:#333;">1.997</span><span class="t" style="left:386.02px;top:695.00px;font-size:6.875px;color:#333;">75.3</span><span class="t" style="left:408.08px;top:695.00px;font-size:6.875px;color:#333;">36.0778626</span><span class="t" style="left:455.39px;top:695.00px;font-size:6.875px;color:#333;">-87.2643970</span><span class="t" style="left:502.48px;top:695.00px;font-size:6.875px;color:#333;">36.0777483</span><span class="t" style="left:546.49px;top:695.00px;font-size:6.875px;color:#333;">-87.2642421</span><span class="t" style="left:617.50px;top:695.00px;font-size:6.875px;color:#333;">754.3</span><span class="t" style="left:665.10px;top:695.00px;font-size:6.875px;color:#333;">753.3</span><span class="t" style="left:690.32px;top:695.00px;font-size:6.875px;color:#333;">777</span><span class="t" style="left:713.79px;top:695.00px;font-size:6.875px;color:#333;">00:57:19:22</span><span class="t" style="left:760.84px;top:695.00px;font-size:6.875px;color:#333;">00:57:21:03</span><span class="t" style="left:837.64px;top:695.00px;font-size:6.875px;color:#333;">0.0</span><span class="t" style="left:885.24px;top:695.00px;font-size:6.875px;color:#333;">0.0</span><span class="t" style="left:936.54px;top:695.00px;font-size:6.875px;color:#333;">2.1</span><span class="t" style="left:987.84px;top:695.00px;font-size:6.875px;color:#333;">2.1</span><span class="t" style="left:1023.34px;top:695.00px;font-size:6.875px;color:#333;">0.0</span><span class="t" style="left:1054.92px;top:695.00px;font-size:6.875px;color:#333;">0.00</span><span class="t" style="left:1076.54px;top:695.00px;font-size:6.875px;color:#333;">00:57:20:07</span><span class="t" style="left:1126.49px;top:695.00px;font-size:6.875px;color:#333;">00:57:21:23</span><span class="t" style="left:1299.30px;top:695.00px;font-size:6.875px;color:#333;">09/03/2020</span><span class="t" style="left:1339.59px;top:695.00px;font-size:6.875px;color:#333;">W-Beam Gua</span><span class="t" style="left:1398.62px;top:695.00px;font-size:6.875px;color:#333;">Left</span><span class="t" style="left:1438.16px;top:695.00px;font-size:6.875px;color:#333;">Brown</span><span class="t" style="left:1526.57px;top:695.00px;font-size:6.875px;color:#333;">226</span><span class="t" style="left:1560.01px;top:695.00px;font-size:6.875px;color:#333;">2.28</span>
<div class="a " style="left:185.00px;top:703.75px;width:1397.40px;height:0.60px;background:#ececec"></div>
<span class="t" style="left:186.65px;top:709.00px;font-size:6.875px;color:#444;">2889</span><span class="t" style="left:204.98px;top:709.00px;font-size:6.875px;color:#333;">Shoulder_Surface_A</span><span class="t" style="left:298.60px;top:709.00px;font-size:6.875px;color:#333;">1.990</span><span class="t" style="left:345.20px;top:709.00px;font-size:6.875px;color:#333;">2.026</span><span class="t" style="left:382.20px;top:709.00px;font-size:6.875px;color:#333;">191.1</span><span class="t" style="left:408.08px;top:709.00px;font-size:6.875px;color:#333;">36.0778186</span><span class="t" style="left:455.39px;top:709.00px;font-size:6.875px;color:#333;">-87.2643894</span><span class="t" style="left:502.99px;top:709.00px;font-size:6.875px;color:#333;">36.0774211</span><span class="t" style="left:546.49px;top:709.00px;font-size:6.875px;color:#333;">-87.2639290</span><span class="t" style="left:617.50px;top:709.00px;font-size:6.875px;color:#333;">751.5</span><span class="t" style="left:665.10px;top:709.00px;font-size:6.875px;color:#333;">747.9</span><span class="t" style="left:690.32px;top:709.00px;font-size:6.875px;color:#333;">777</span><span class="t" style="left:713.79px;top:709.00px;font-size:6.875px;color:#333;">00:57:20:02</span><span class="t" style="left:760.84px;top:709.00px;font-size:6.875px;color:#333;">00:57:22:15</span><span class="t" style="left:837.64px;top:709.00px;font-size:6.875px;color:#333;">4.5</span><span class="t" style="left:885.24px;top:709.00px;font-size:6.875px;color:#333;">0.0</span><span class="t" style="left:936.54px;top:709.00px;font-size:6.875px;color:#333;">0.0</span><span class="t" style="left:987.84px;top:709.00px;font-size:6.875px;color:#333;">0.0</span><span class="t" style="left:1023.34px;top:709.00px;font-size:6.875px;color:#333;">0.0</span><span class="t" style="left:1054.92px;top:709.00px;font-size:6.875px;color:#333;">0.00</span><span class="t" style="left:1076.54px;top:709.00px;font-size:6.875px;color:#333;">00:57:20:21</span><span class="t" style="left:1126.49px;top:709.00px;font-size:6.875px;color:#333;">00:57:23:04</span><span class="t" style="left:1171.06px;top:709.00px;font-size:6.875px;color:#333;">SLOPE: 0.30°, 0.53</span><span class="t" style="left:1299.30px;top:709.00px;font-size:6.875px;color:#333;">09/04/2020</span><span class="t" style="left:1339.14px;top:709.00px;font-size:6.875px;color:#333;">Asphalt Shoul</span><span class="t" style="left:1398.62px;top:709.00px;font-size:6.875px;color:#333;">Left</span><span class="t" style="left:1526.57px;top:709.00px;font-size:6.875px;color:#333;">148</span><span class="t" style="left:1560.01px;top:709.00px;font-size:6.875px;color:#333;">2.28</span>
<div class="a " style="left:185.00px;top:717.50px;width:1397.40px;height:0.60px;background:#ececec"></div>
<span class="t" style="left:186.65px;top:722.00px;font-size:6.875px;color:#444;">2890</span><span class="t" style="left:204.98px;top:722.00px;font-size:6.875px;color:#333;">Shoulder_Surface_A</span><span class="t" style="left:298.60px;top:722.00px;font-size:6.875px;color:#333;">1.982</span><span class="t" style="left:345.20px;top:722.00px;font-size:6.875px;color:#333;">2.058</span><span class="t" style="left:382.20px;top:722.00px;font-size:6.875px;color:#333;">399.5</span><span class="t" style="left:408.08px;top:722.00px;font-size:6.875px;color:#333;">36.0777876</span><span class="t" style="left:455.39px;top:722.00px;font-size:6.875px;color:#333;">-87.2644645</span><span class="t" style="left:502.48px;top:722.00px;font-size:6.875px;color:#333;">36.0770984</span><span class="t" style="left:546.49px;top:722.00px;font-size:6.875px;color:#333;">-87.2636800</span><span class="t" style="left:617.50px;top:722.00px;font-size:6.875px;color:#333;">751.7</span><span class="t" style="left:665.10px;top:722.00px;font-size:6.875px;color:#333;">741.0</span><span class="t" style="left:690.32px;top:722.00px;font-size:6.875px;color:#333;">777</span><span class="t" style="left:713.79px;top:722.00px;font-size:6.875px;color:#333;">00:57:20:02</span><span class="t" style="left:760.84px;top:722.00px;font-size:6.875px;color:#333;">00:57:24:27</span><span class="t" style="left:837.64px;top:722.00px;font-size:6.875px;color:#333;">1.2</span><span class="t" style="left:885.24px;top:722.00px;font-size:6.875px;color:#333;">0.0</span><span class="t" style="left:936.54px;top:722.00px;font-size:6.875px;color:#333;">0.0</span><span class="t" style="left:987.84px;top:722.00px;font-size:6.875px;color:#333;">0.0</span><span class="t" style="left:1023.34px;top:722.00px;font-size:6.875px;color:#333;">0.0</span><span class="t" style="left:1052.63px;top:722.00px;font-size:6.875px;color:#333;">-0.34</span><span class="t" style="left:1076.54px;top:722.00px;font-size:6.875px;color:#333;">00:57:20:06</span><span class="t" style="left:1126.49px;top:722.00px;font-size:6.875px;color:#333;">00:57:25:13</span><span class="t" style="left:1170.68px;top:722.00px;font-size:6.875px;color:#333;">SLOPE: -0.34°, -0.6</span><span class="t" style="left:1299.30px;top:722.00px;font-size:6.875px;color:#333;">09/04/2020</span><span class="t" style="left:1339.14px;top:722.00px;font-size:6.875px;color:#333;">Asphalt Shoul</span><span class="t" style="left:1396.33px;top:722.00px;font-size:6.875px;color:#333;">Right</span><span class="t" style="left:1526.57px;top:722.00px;font-size:6.875px;color:#333;">148</span><span class="t" style="left:1560.01px;top:722.00px;font-size:6.875px;color:#333;">2.28</span>
<div class="a " style="left:185.00px;top:731.25px;width:1397.40px;height:0.60px;background:#ececec"></div>
<span class="t" style="left:186.65px;top:736.00px;font-size:6.875px;color:#444;">2891</span><span class="t" style="left:221.99px;top:736.00px;font-size:6.875px;color:#333;">Terminals</span><span class="t" style="left:298.60px;top:736.00px;font-size:6.875px;color:#333;">1.997</span><span class="t" style="left:345.20px;top:736.00px;font-size:6.875px;color:#333;">1.997</span><span class="t" style="left:389.84px;top:736.00px;font-size:6.875px;color:#333;">0.0</span><span class="t" style="left:408.08px;top:736.00px;font-size:6.875px;color:#333;">36.0777470</span><span class="t" style="left:455.39px;top:736.00px;font-size:6.875px;color:#333;">-87.2642446</span><span class="t" style="left:502.48px;top:736.00px;font-size:6.875px;color:#333;">36.0777470</span><span class="t" style="left:546.49px;top:736.00px;font-size:6.875px;color:#333;">-87.2642446</span><span class="t" style="left:617.50px;top:736.00px;font-size:6.875px;color:#333;">752.2</span><span class="t" style="left:665.10px;top:736.00px;font-size:6.875px;color:#333;">752.2</span><span class="t" style="left:690.32px;top:736.00px;font-size:6.875px;color:#333;">777</span><span class="t" style="left:713.79px;top:736.00px;font-size:6.875px;color:#333;">00:57:20:13</span><span class="t" style="left:760.84px;top:736.00px;font-size:6.875px;color:#333;">00:57:20:13</span><span class="t" style="left:837.64px;top:736.00px;font-size:6.875px;color:#333;">0.0</span><span class="t" style="left:885.24px;top:736.00px;font-size:6.875px;color:#333;">0.0</span><span class="t" style="left:936.54px;top:736.00px;font-size:6.875px;color:#333;">0.0</span><span class="t" style="left:987.84px;top:736.00px;font-size:6.875px;color:#333;">2.4</span><span class="t" style="left:1023.34px;top:736.00px;font-size:6.875px;color:#333;">0.0</span><span class="t" style="left:1054.92px;top:736.00px;font-size:6.875px;color:#333;">0.00</span><span class="t" style="left:1076.54px;top:736.00px;font-size:6.875px;color:#333;">00:57:21:04</span><span class="t" style="left:1126.49px;top:736.00px;font-size:6.875px;color:#333;">00:57:21:04</span><span class="t" style="left:1299.30px;top:736.00px;font-size:6.875px;color:#333;">09/04/2020</span><span class="t" style="left:1346.02px;top:736.00px;font-size:6.875px;color:#333;">Unknown</span><span class="t" style="left:1398.62px;top:736.00px;font-size:6.875px;color:#333;">Left</span><span class="t" style="left:1526.57px;top:736.00px;font-size:6.875px;color:#333;">236</span><span class="t" style="left:1560.01px;top:736.00px;font-size:6.875px;color:#333;">2.28</span>
<div class="a " style="left:185.00px;top:745.00px;width:1397.40px;height:0.60px;background:#ececec"></div>
<span class="t" style="left:186.65px;top:750.00px;font-size:6.875px;color:#444;">2892</span><span class="t" style="left:212.05px;top:750.00px;font-size:6.875px;color:#333;">Flat-Sheet_Sign</span><span class="t" style="left:298.60px;top:750.00px;font-size:6.875px;color:#333;">1.988</span><span class="t" style="left:345.20px;top:750.00px;font-size:6.875px;color:#333;">1.988</span><span class="t" style="left:389.84px;top:750.00px;font-size:6.875px;color:#333;">0.0</span><span class="t" style="left:408.08px;top:750.00px;font-size:6.875px;color:#333;">36.0777956</span><span class="t" style="left:455.39px;top:750.00px;font-size:6.875px;color:#333;">-87.2643427</span><span class="t" style="left:502.48px;top:750.00px;font-size:6.875px;color:#333;">36.0777956</span><span class="t" style="left:546.49px;top:750.00px;font-size:6.875px;color:#333;">-87.2643427</span><span class="t" style="left:617.50px;top:750.00px;font-size:6.875px;color:#333;">750.9</span><span class="t" style="left:665.10px;top:750.00px;font-size:6.875px;color:#333;">750.9</span><span class="t" style="left:690.32px;top:750.00px;font-size:6.875px;color:#333;">777</span><span class="t" style="left:713.79px;top:750.00px;font-size:6.875px;color:#333;">00:57:20:13</span><span class="t" style="left:760.84px;top:750.00px;font-size:6.875px;color:#333;">00:57:20:13</span><span class="t" style="left:837.64px;top:750.00px;font-size:6.875px;color:#333;">0.0</span><span class="t" style="left:885.24px;top:750.00px;font-size:6.875px;color:#333;">0.0</span><span class="t" style="left:936.54px;top:750.00px;font-size:6.875px;color:#333;">0.0</span><span class="t" style="left:987.84px;top:750.00px;font-size:6.875px;color:#333;">0.0</span><span class="t" style="left:1023.34px;top:750.00px;font-size:6.875px;color:#333;">0.0</span><span class="t" style="left:1054.92px;top:750.00px;font-size:6.875px;color:#333;">0.00</span><span class="t" style="left:1076.54px;top:750.00px;font-size:6.875px;color:#333;">00:57:20:18</span><span class="t" style="left:1126.49px;top:750.00px;font-size:6.875px;color:#333;">00:57:20:18</span><span class="t" style="left:1192.51px;top:750.00px;font-size:6.875px;color:#333;">G-NA</span><span class="t" style="left:1248.57px;top:750.00px;font-size:6.875px;color:#333;">CSXT RR</span><span class="t" style="left:1299.30px;top:750.00px;font-size:6.875px;color:#333;">09/04/2020</span><span class="t" style="left:1354.62px;top:750.00px;font-size:6.875px;color:#333;">Left</span><span class="t" style="left:1395.94px;top:750.00px;font-size:6.875px;color:#333;">Good</span><span class="t" style="left:1432.42px;top:750.00px;font-size:6.875px;color:#333;">Southeast</span><div class="a" style="left:1470.80px;top:746px;width:42.40px;height:12px;overflow:hidden"><span class="t" style="left:0.00px;top:4.00px;font-size:6.875px;color:#333;">Grnd Single F</span></div><span class="t" style="left:1526.57px;top:750.00px;font-size:6.875px;color:#333;">214</span><span class="t" style="left:1560.01px;top:750.00px;font-size:6.875px;color:#333;">2.28</span>
<div class="a " style="left:185.00px;top:758.75px;width:1397.40px;height:0.60px;background:#ececec"></div>
<span class="t" style="left:186.65px;top:764.00px;font-size:6.875px;color:#444;">2893</span><span class="t" style="left:221.99px;top:764.00px;font-size:6.875px;color:#333;">Terminals</span><span class="t" style="left:298.60px;top:764.00px;font-size:6.875px;color:#333;">1.997</span><span class="t" style="left:345.20px;top:764.00px;font-size:6.875px;color:#333;">1.997</span><span class="t" style="left:389.84px;top:764.00px;font-size:6.875px;color:#333;">0.0</span><span class="t" style="left:408.08px;top:764.00px;font-size:6.875px;color:#333;">36.0776805</span><span class="t" style="left:455.39px;top:764.00px;font-size:6.875px;color:#333;">-87.2643140</span><span class="t" style="left:502.48px;top:764.00px;font-size:6.875px;color:#333;">36.0776805</span><span class="t" style="left:546.49px;top:764.00px;font-size:6.875px;color:#333;">-87.2643140</span><span class="t" style="left:617.50px;top:764.00px;font-size:6.875px;color:#333;">752.1</span><span class="t" style="left:665.10px;top:764.00px;font-size:6.875px;color:#333;">752.1</span><span class="t" style="left:690.32px;top:764.00px;font-size:6.875px;color:#333;">777</span><span class="t" style="left:713.79px;top:764.00px;font-size:6.875px;color:#333;">00:57:20:13</span><span class="t" style="left:760.84px;top:764.00px;font-size:6.875px;color:#333;">00:57:20:13</span><span class="t" style="left:837.64px;top:764.00px;font-size:6.875px;color:#333;">0.0</span><span class="t" style="left:885.24px;top:764.00px;font-size:6.875px;color:#333;">0.0</span><span class="t" style="left:936.54px;top:764.00px;font-size:6.875px;color:#333;">0.0</span><span class="t" style="left:987.84px;top:764.00px;font-size:6.875px;color:#333;">1.8</span><span class="t" style="left:1023.34px;top:764.00px;font-size:6.875px;color:#333;">0.0</span><span class="t" style="left:1054.92px;top:764.00px;font-size:6.875px;color:#333;">0.00</span><span class="t" style="left:1076.80px;top:764.00px;font-size:6.875px;color:#333;">00:57:21:11</span><span class="t" style="left:1126.75px;top:764.00px;font-size:6.875px;color:#333;">00:57:21:11</span><span class="t" style="left:1299.30px;top:764.00px;font-size:6.875px;color:#333;">09/04/2020</span><span class="t" style="left:1346.02px;top:764.00px;font-size:6.875px;color:#333;">Unknown</span><span class="t" style="left:1396.33px;top:764.00px;font-size:6.875px;color:#333;">Right</span><span class="t" style="left:1526.57px;top:764.00px;font-size:6.875px;color:#333;">236</span><span class="t" style="left:1560.01px;top:764.00px;font-size:6.875px;color:#333;">2.28</span>
<div class="a " style="left:185.00px;top:772.50px;width:1397.40px;height:0.60px;background:#ececec"></div>
<span class="t" style="left:186.65px;top:777.00px;font-size:6.875px;color:#444;">2894</span><span class="t" style="left:212.05px;top:777.00px;font-size:6.875px;color:#333;">Flat-Sheet_Sign</span><span class="t" style="left:298.60px;top:777.00px;font-size:6.875px;color:#333;">1.997</span><span class="t" style="left:345.20px;top:777.00px;font-size:6.875px;color:#333;">1.997</span><span class="t" style="left:389.84px;top:777.00px;font-size:6.875px;color:#333;">0.0</span><span class="t" style="left:408.08px;top:777.00px;font-size:6.875px;color:#333;">36.0776797</span><span class="t" style="left:455.90px;top:777.00px;font-size:6.875px;color:#333;">-87.2643113</span><span class="t" style="left:502.48px;top:777.00px;font-size:6.875px;color:#333;">36.0776797</span><span class="t" style="left:547.00px;top:777.00px;font-size:6.875px;color:#333;">-87.2643113</span><span class="t" style="left:617.50px;top:777.00px;font-size:6.875px;color:#333;">747.8</span><span class="t" style="left:665.10px;top:777.00px;font-size:6.875px;color:#333;">747.8</span><span class="t" style="left:690.32px;top:777.00px;font-size:6.875px;color:#333;">777</span><span class="t" style="left:713.79px;top:777.00px;font-size:6.875px;color:#333;">00:57:21:03</span><span class="t" style="left:760.84px;top:777.00px;font-size:6.875px;color:#333;">00:57:21:03</span><span class="t" style="left:837.64px;top:777.00px;font-size:6.875px;color:#333;">0.0</span><span class="t" style="left:885.24px;top:777.00px;font-size:6.875px;color:#333;">0.0</span><span class="t" style="left:936.54px;top:777.00px;font-size:6.875px;color:#333;">0.0</span><span class="t" style="left:987.84px;top:777.00px;font-size:6.875px;color:#333;">0.0</span><span class="t" style="left:1023.34px;top:777.00px;font-size:6.875px;color:#333;">0.0</span><span class="t" style="left:1054.92px;top:777.00px;font-size:6.875px;color:#333;">0.00</span><span class="t" style="left:1076.54px;top:777.00px;font-size:6.875px;color:#333;">00:57:21:19</span><span class="t" style="left:1126.49px;top:777.00px;font-size:6.875px;color:#333;">00:57:21:19</span><span class="t" style="left:1190.60px;top:777.00px;font-size:6.875px;color:#333;">OM3-L</span><div class="a" style="left:1233.60px;top:773px;width:60.80px;height:12px;overflow:hidden"><span class="t" style="left:0.00px;top:4.00px;font-size:6.875px;color:#333;">GRAPHIC SIGN NO</span></div><span class="t" style="left:1299.30px;top:777.00px;font-size:6.875px;color:#333;">09/04/2020</span><span class="t" style="left:1352.33px;top:777.00px;font-size:6.875px;color:#333;">Right</span><span class="t" style="left:1395.94px;top:777.00px;font-size:6.875px;color:#333;">Good</span><span class="t" style="left:1432.42px;top:777.00px;font-size:6.875px;color:#333;">Southeast</span><span class="t" style="left:1483.00px;top:777.00px;font-size:6.875px;color:#333;">Other</span><span class="t" style="left:1526.57px;top:777.00px;font-size:6.875px;color:#333;">214</span><span class="t" style="left:1560.01px;top:777.00px;font-size:6.875px;color:#333;">2.28</span>
<div class="a " style="left:185.00px;top:786.25px;width:1397.40px;height:0.60px;background:#ececec"></div>
<span class="t" style="left:186.65px;top:791.00px;font-size:6.875px;color:#444;">2895</span><span class="t" style="left:214.15px;top:791.00px;font-size:6.875px;color:#333;">Control_Fence</span><span class="t" style="left:298.60px;top:791.00px;font-size:6.875px;color:#333;">2.010</span><span class="t" style="left:345.20px;top:791.00px;font-size:6.875px;color:#333;">2.042</span><span class="t" style="left:382.20px;top:791.00px;font-size:6.875px;color:#333;">166.5</span><span class="t" style="left:408.08px;top:791.00px;font-size:6.875px;color:#333;">36.0774880</span><span class="t" style="left:455.39px;top:791.00px;font-size:6.875px;color:#333;">-87.2641402</span><span class="t" style="left:502.48px;top:791.00px;font-size:6.875px;color:#333;">36.0772250</span><span class="t" style="left:547.00px;top:791.00px;font-size:6.875px;color:#333;">-87.2638411</span><span class="t" style="left:617.50px;top:791.00px;font-size:6.875px;color:#333;">747.9</span><span class="t" style="left:665.10px;top:791.00px;font-size:6.875px;color:#333;">743.7</span><span class="t" style="left:690.32px;top:791.00px;font-size:6.875px;color:#333;">777</span><span class="t" style="left:713.79px;top:791.00px;font-size:6.875px;color:#333;">00:57:21:14</span><span class="t" style="left:760.84px;top:791.00px;font-size:6.875px;color:#333;">00:57:23:15</span><span class="t" style="left:837.64px;top:791.00px;font-size:6.875px;color:#333;">0.0</span><span class="t" style="left:885.24px;top:791.00px;font-size:6.875px;color:#333;">0.0</span><span class="t" style="left:936.54px;top:791.00px;font-size:6.875px;color:#333;">0.0</span><span class="t" style="left:987.84px;top:791.00px;font-size:6.875px;color:#333;">0.0</span><span class="t" style="left:1023.34px;top:791.00px;font-size:6.875px;color:#333;">0.0</span><span class="t" style="left:1054.92px;top:791.00px;font-size:6.875px;color:#333;">0.00</span><span class="t" style="left:1076.54px;top:791.00px;font-size:6.875px;color:#333;">00:57:22:05</span><span class="t" style="left:1126.49px;top:791.00px;font-size:6.875px;color:#333;">00:57:24:07</span><span class="t" style="left:1299.30px;top:791.00px;font-size:6.875px;color:#333;">09/04/2020</span><span class="t" style="left:1344.11px;top:791.00px;font-size:6.875px;color:#333;">Chain Link</span><span class="t" style="left:1396.33px;top:791.00px;font-size:6.875px;color:#333;">Right</span><span class="t" style="left:1530.39px;top:791.00px;font-size:6.875px;color:#333;">0</span><span class="t" style="left:1560.01px;top:791.00px;font-size:6.875px;color:#333;">2.28</span>
<div class="a " style="left:185.00px;top:800.00px;width:1397.40px;height:0.60px;background:#ececec"></div>
<span class="t" style="left:186.65px;top:805.00px;font-size:6.875px;color:#444;">2896</span><span class="t" style="left:212.05px;top:805.00px;font-size:6.875px;color:#333;">Flat-Sheet_Sign</span><span class="t" style="left:298.60px;top:805.00px;font-size:6.875px;color:#333;">2.026</span><span class="t" style="left:345.20px;top:805.00px;font-size:6.875px;color:#333;">2.026</span><span class="t" style="left:389.84px;top:805.00px;font-size:6.875px;color:#333;">0.0</span><span class="t" style="left:408.08px;top:805.00px;font-size:6.875px;color:#333;">36.0774386</span><span class="t" style="left:455.39px;top:805.00px;font-size:6.875px;color:#333;">-87.2639547</span><span class="t" style="left:502.48px;top:805.00px;font-size:6.875px;color:#333;">36.0774386</span><span class="t" style="left:546.49px;top:805.00px;font-size:6.875px;color:#333;">-87.2639547</span><span class="t" style="left:617.50px;top:805.00px;font-size:6.875px;color:#333;">751.4</span><span class="t" style="left:665.10px;top:805.00px;font-size:6.875px;color:#333;">751.4</span><span class="t" style="left:690.32px;top:805.00px;font-size:6.875px;color:#333;">777</span><span class="t" style="left:713.79px;top:805.00px;font-size:6.875px;color:#333;">00:57:22:04</span><span class="t" style="left:760.84px;top:805.00px;font-size:6.875px;color:#333;">00:57:22:04</span><span class="t" style="left:837.64px;top:805.00px;font-size:6.875px;color:#333;">0.0</span><span class="t" style="left:885.24px;top:805.00px;font-size:6.875px;color:#333;">0.0</span><span class="t" style="left:936.54px;top:805.00px;font-size:6.875px;color:#333;">3.3</span><span class="t" style="left:987.84px;top:805.00px;font-size:6.875px;color:#333;">0.0</span><span class="t" style="left:1023.34px;top:805.00px;font-size:6.875px;color:#333;">0.0</span><span class="t" style="left:1054.92px;top:805.00px;font-size:6.875px;color:#333;">0.00</span><span class="t" style="left:1076.54px;top:805.00px;font-size:6.875px;color:#333;">00:57:23:03</span><span class="t" style="left:1126.49px;top:805.00px;font-size:6.875px;color:#333;">00:57:23:03</span><span class="t" style="left:1192.89px;top:805.00px;font-size:6.875px;color:#333;">W1-2</span><div class="a" style="left:1233.60px;top:801px;width:60.80px;height:12px;overflow:hidden"><span class="t" style="left:0.00px;top:4.00px;font-size:6.875px;color:#333;">GRAPHIC SIGN NO</span></div><span class="t" style="left:1299.30px;top:805.00px;font-size:6.875px;color:#333;">09/04/2020</span><span class="t" style="left:1354.62px;top:805.00px;font-size:6.875px;color:#333;">Left</span><span class="t" style="left:1395.94px;top:805.00px;font-size:6.875px;color:#333;">Good</span><span class="t" style="left:1432.42px;top:805.00px;font-size:6.875px;color:#333;">Southeast</span><div class="a" style="left:1470.80px;top:801px;width:42.40px;height:12px;overflow:hidden"><span class="t" style="left:0.00px;top:4.00px;font-size:6.875px;color:#333;">Grnd Single F</span></div><span class="t" style="left:1526.57px;top:805.00px;font-size:6.875px;color:#333;">152</span><span class="t" style="left:1560.01px;top:805.00px;font-size:6.875px;color:#333;">2.28</span>
<div class="a " style="left:185.00px;top:813.75px;width:1397.40px;height:0.60px;background:#ececec"></div>
<span class="t" style="left:186.65px;top:819.00px;font-size:6.875px;color:#444;">2897</span><span class="t" style="left:204.98px;top:819.00px;font-size:6.875px;color:#333;">Shoulder_Surface_A</span><span class="t" style="left:298.60px;top:819.00px;font-size:6.875px;color:#333;">2.017</span><span class="t" style="left:345.20px;top:819.00px;font-size:6.875px;color:#333;">2.055</span><span class="t" style="left:382.20px;top:819.00px;font-size:6.875px;color:#333;">200.3</span><span class="t" style="left:408.08px;top:819.00px;font-size:6.875px;color:#333;">36.0774488</span><span class="t" style="left:455.39px;top:819.00px;font-size:6.875px;color:#333;">-87.2639828</span><span class="t" style="left:502.48px;top:819.00px;font-size:6.875px;color:#333;">36.0771322</span><span class="t" style="left:546.49px;top:819.00px;font-size:6.875px;color:#333;">-87.2636340</span><span class="t" style="left:617.50px;top:819.00px;font-size:6.875px;color:#333;">745.0</span><span class="t" style="left:665.10px;top:819.00px;font-size:6.875px;color:#333;">741.1</span><span class="t" style="left:690.32px;top:819.00px;font-size:6.875px;color:#333;">777</span><span class="t" style="left:713.79px;top:819.00px;font-size:6.875px;color:#333;">00:57:22:15</span><span class="t" style="left:760.84px;top:819.00px;font-size:6.875px;color:#333;">00:57:24:27</span><span class="t" style="left:837.64px;top:819.00px;font-size:6.875px;color:#333;">1.0</span><span class="t" style="left:885.24px;top:819.00px;font-size:6.875px;color:#333;">0.0</span><span class="t" style="left:936.54px;top:819.00px;font-size:6.875px;color:#333;">0.0</span><span class="t" style="left:987.84px;top:819.00px;font-size:6.875px;color:#333;">0.0</span><span class="t" style="left:1023.34px;top:819.00px;font-size:6.875px;color:#333;">0.0</span><span class="t" style="left:1054.92px;top:819.00px;font-size:6.875px;color:#333;">0.00</span><span class="t" style="left:1076.54px;top:819.00px;font-size:6.875px;color:#333;">00:57:22:16</span><span class="t" style="left:1126.49px;top:819.00px;font-size:6.875px;color:#333;">00:57:25:07</span><span class="t" style="left:1171.06px;top:819.00px;font-size:6.875px;color:#333;">SLOPE: 9.72°, 17.1</span><span class="t" style="left:1299.30px;top:819.00px;font-size:6.875px;color:#333;">09/04/2020</span><span class="t" style="left:1341.24px;top:819.00px;font-size:6.875px;color:#333;">No Shoulder</span><span class="t" style="left:1398.62px;top:819.00px;font-size:6.875px;color:#333;">Left</span><span class="t" style="left:1526.57px;top:819.00px;font-size:6.875px;color:#333;">148</span><span class="t" style="left:1560.01px;top:819.00px;font-size:6.875px;color:#333;">2.28</span>
<div class="a " style="left:185.00px;top:827.50px;width:1397.40px;height:0.60px;background:#ececec"></div>
<span class="t" style="left:186.65px;top:832.00px;font-size:6.875px;color:#444;">2898</span><span class="t" style="left:212.05px;top:832.00px;font-size:6.875px;color:#333;">Flat-Sheet_Sign</span><span class="t" style="left:298.60px;top:832.00px;font-size:6.875px;color:#333;">2.051</span><span class="t" style="left:345.20px;top:832.00px;font-size:6.875px;color:#333;">2.051</span><span class="t" style="left:389.84px;top:832.00px;font-size:6.875px;color:#333;">0.0</span><span class="t" style="left:408.08px;top:832.00px;font-size:6.875px;color:#333;">36.0770942</span><span class="t" style="left:455.39px;top:832.00px;font-size:6.875px;color:#333;">-87.2636997</span><span class="t" style="left:502.48px;top:832.00px;font-size:6.875px;color:#333;">36.0770942</span><span class="t" style="left:546.49px;top:832.00px;font-size:6.875px;color:#333;">-87.2636997</span><span class="t" style="left:617.50px;top:832.00px;font-size:6.875px;color:#333;">741.4</span><span class="t" style="left:665.10px;top:832.00px;font-size:6.875px;color:#333;">741.4</span><span class="t" style="left:690.32px;top:832.00px;font-size:6.875px;color:#333;">777</span><span class="t" style="left:713.79px;top:832.00px;font-size:6.875px;color:#333;">00:57:24:06</span><span class="t" style="left:760.84px;top:832.00px;font-size:6.875px;color:#333;">00:57:24:06</span><span class="t" style="left:837.64px;top:832.00px;font-size:6.875px;color:#333;">0.0</span><span class="t" style="left:885.24px;top:832.00px;font-size:6.875px;color:#333;">0.0</span><span class="t" style="left:936.54px;top:832.00px;font-size:6.875px;color:#333;">0.0</span><span class="t" style="left:987.84px;top:832.00px;font-size:6.875px;color:#333;">0.0</span><span class="t" style="left:1023.34px;top:832.00px;font-size:6.875px;color:#333;">0.0</span><span class="t" style="left:1054.92px;top:832.00px;font-size:6.875px;color:#333;">0.00</span><span class="t" style="left:1076.54px;top:832.00px;font-size:6.875px;color:#333;">00:57:24:29</span><span class="t" style="left:1126.49px;top:832.00px;font-size:6.875px;color:#333;">00:57:24:29</span><span class="t" style="left:1194.22px;top:832.00px;font-size:6.875px;color:#333;">I-NA</span><div class="a" style="left:1233.60px;top:828px;width:60.80px;height:12px;overflow:hidden"><span class="t" style="left:0.00px;top:4.00px;font-size:6.875px;color:#333;">END TEST SECTIO</span></div><span class="t" style="left:1299.30px;top:832.00px;font-size:6.875px;color:#333;">09/04/2020</span><span class="t" style="left:1354.62px;top:832.00px;font-size:6.875px;color:#333;">Left</span><span class="t" style="left:1395.94px;top:832.00px;font-size:6.875px;color:#333;">Good</span><span class="t" style="left:1432.43px;top:832.00px;font-size:6.875px;color:#333;">Northwest</span><div class="a" style="left:1470.80px;top:828px;width:42.40px;height:12px;overflow:hidden"><span class="t" style="left:0.00px;top:4.00px;font-size:6.875px;color:#333;">Grnd Single F</span></div><span class="t" style="left:1526.57px;top:832.00px;font-size:6.875px;color:#333;">214</span><span class="t" style="left:1560.01px;top:832.00px;font-size:6.875px;color:#333;">2.28</span>
<div class="a " style="left:185.00px;top:841.25px;width:1397.40px;height:0.60px;background:#ececec"></div>
<span class="t" style="left:186.65px;top:846.00px;font-size:6.875px;color:#444;">2899</span><span class="t" style="left:212.05px;top:846.00px;font-size:6.875px;color:#333;">Flat-Sheet_Sign</span><span class="t" style="left:298.60px;top:846.00px;font-size:6.875px;color:#333;">2.051</span><span class="t" style="left:345.20px;top:846.00px;font-size:6.875px;color:#333;">2.051</span><span class="t" style="left:389.84px;top:846.00px;font-size:6.875px;color:#333;">0.0</span><span class="t" style="left:408.08px;top:846.00px;font-size:6.875px;color:#333;">36.0770942</span><span class="t" style="left:455.39px;top:846.00px;font-size:6.875px;color:#333;">-87.2636997</span><span class="t" style="left:502.48px;top:846.00px;font-size:6.875px;color:#333;">36.0770942</span><span class="t" style="left:546.49px;top:846.00px;font-size:6.875px;color:#333;">-87.2636997</span><span class="t" style="left:617.50px;top:846.00px;font-size:6.875px;color:#333;">741.4</span><span class="t" style="left:665.10px;top:846.00px;font-size:6.875px;color:#333;">741.4</span><span class="t" style="left:690.32px;top:846.00px;font-size:6.875px;color:#333;">777</span><span class="t" style="left:713.79px;top:846.00px;font-size:6.875px;color:#333;">00:57:24:06</span><span class="t" style="left:760.84px;top:846.00px;font-size:6.875px;color:#333;">00:57:24:06</span><span class="t" style="left:837.64px;top:846.00px;font-size:6.875px;color:#333;">0.0</span><span class="t" style="left:885.24px;top:846.00px;font-size:6.875px;color:#333;">0.0</span><span class="t" style="left:936.54px;top:846.00px;font-size:6.875px;color:#333;">0.0</span><span class="t" style="left:987.84px;top:846.00px;font-size:6.875px;color:#333;">0.0</span><span class="t" style="left:1023.34px;top:846.00px;font-size:6.875px;color:#333;">0.0</span><span class="t" style="left:1054.92px;top:846.00px;font-size:6.875px;color:#333;">0.00</span><span class="t" style="left:1076.54px;top:846.00px;font-size:6.875px;color:#333;">00:57:24:29</span><span class="t" style="left:1126.49px;top:846.00px;font-size:6.875px;color:#333;">00:57:24:29</span><span class="t" style="left:1193.65px;top:846.00px;font-size:6.875px;color:#333;">R1-1</span><span class="t" style="left:1254.30px;top:846.00px;font-size:6.875px;color:#333;">STOP</span><span class="t" style="left:1299.30px;top:846.00px;font-size:6.875px;color:#333;">09/04/2020</span><span class="t" style="left:1352.33px;top:846.00px;font-size:6.875px;color:#333;">Right</span><span class="t" style="left:1395.94px;top:846.00px;font-size:6.875px;color:#333;">Good</span><span class="t" style="left:1432.43px;top:846.00px;font-size:6.875px;color:#333;">Northwest</span><div class="a" style="left:1470.80px;top:842px;width:42.40px;height:12px;overflow:hidden"><span class="t" style="left:0.00px;top:4.00px;font-size:6.875px;color:#333;">Grnd Single F</span></div><span class="t" style="left:1526.57px;top:846.00px;font-size:6.875px;color:#333;">214</span><span class="t" style="left:1560.01px;top:846.00px;font-size:6.875px;color:#333;">2.28</span>
<div class="a " style="left:1591.80px;top:656.80px;width:8.20px;height:198.80px;background:#f1f1f1"></div>
<div class="a " style="left:1592.80px;top:835.00px;width:6.20px;height:10.80px;background:#c1c1c1"></div>
<svg class="a" style="left:1593.6px;top:661.4px" width="5" height="3" viewBox="0 0 10 6"><path d="M0 6H10L5 0Z" fill="#333"/></svg>
<svg class="a" style="left:1593.6px;top:849px" width="5" height="3" viewBox="0 0 10 6"><path d="M0 0H10L5 6Z" fill="#a3a3a3"/></svg>
<div class="a " style="left:185.00px;top:856.00px;width:1415.00px;height:17.40px;background:#fafafa"></div>
<svg class="a" style="left:190.6px;top:860.4px" width="7" height="7.400" viewBox="0 0 14 15"><circle cx="7" cy="4.500" r="2.700" fill="none" stroke="#333" stroke-width="1.700"/><path d="M1.500 13.500Q1.500 9.500 7 9.500Q12.500 9.500 12.500 13.500Z" fill="#333"/></svg>
<span class="t" style="left:202.50px;top:862.00px;font-size:6.875px;color:#555;letter-spacing:-0.034px;">demouser</span>
<svg class="a" style="left:242px;top:860.4px" width="6" height="7.600" viewBox="0 0 12 15"><path d="M1 3.500H11M4 3V1.500H8V3" stroke="#555" stroke-width="1.400" fill="none"/><path d="M2 5H10L9.300 14.500H2.700Z" fill="#555"/></svg>
<span class="t" style="left:253.60px;top:862.00px;font-size:6.875px;color:#555;letter-spacing:-0.079px;">Delete</span>
<div class="a " style="left:280.00px;top:859.00px;width:0.60px;height:11.00px;background:#ddd"></div>
<svg class="a" style="left:288px;top:860.6px" width="7" height="7" viewBox="0 0 14 14"><circle cx="8.500" cy="5.500" r="3.800" fill="none" stroke="#222" stroke-width="2"/><path d="M5.800 8.200L1.200 12.800" stroke="#222" stroke-width="2.400"/></svg>
<span class="t" style="left:300.00px;top:862.00px;font-size:6.875px;color:#555;letter-spacing:-0.030px;">Search</span>
<svg class="a" style="left:329.6px;top:860px" width="8" height="8" viewBox="0 0 16 16"><circle cx="8" cy="8" r="7.500" fill="#1a1a1a"/><path d="M4.200 8.400L7 11L11.800 5.400" fill="none" stroke="#fff" stroke-width="2"/></svg>
<span class="t" style="left:341.90px;top:862.00px;font-size:6.875px;color:#555;letter-spacing:-0.043px;">Set 777</span>
<svg class="a" style="left:815px;top:861.900px" width="6" height="4.600" viewBox="0 0 12 9"><path d="M0.500 0.500V8.500" stroke="#222" stroke-width="1.600"/><path d="M11 0.500V8.500L3 4.500Z" fill="#222"/></svg>
<svg class="a" style="left:830.8px;top:861.900px" width="7" height="4.600" viewBox="0 0 14 9"><path d="M6.500 0.500V8.500L0.500 4.500Z M13.500 0.500V8.500L7.500 4.500Z" fill="#222"/></svg>
<div class="a " style="left:845.00px;top:859.00px;width:0.60px;height:11.00px;background:#ddd"></div>
<span class="t" style="left:850.90px;top:862.00px;font-size:6.875px;color:#444;">Page</span>
<div class="a " style="left:868.70px;top:858.60px;width:25.30px;height:11.40px;background:#fff;border:0.6px solid #dcdcdc;border-radius:1.5px"></div>
<span class="t" style="left:871.60px;top:862.00px;font-size:6.875px;color:#333;">6</span>
<span class="t" style="left:896.00px;top:862.00px;font-size:6.875px;color:#444;">of 6</span>
<div class="a " style="left:913.00px;top:859.00px;width:0.60px;height:11.00px;background:#ddd"></div>
<svg class="a" style="left:920.6px;top:861.900px" width="7" height="4.600" viewBox="0 0 14 9"><path d="M0.500 0.500V8.500L6.500 4.500Z M7.500 0.500V8.500L13.500 4.500Z" fill="#c4c4c4"/></svg>
<svg class="a" style="left:937.4px;top:861.900px" width="6" height="4.600" viewBox="0 0 12 9"><path d="M11.500 0.500V8.500" stroke="#c4c4c4" stroke-width="1.600"/><path d="M1 0.500V8.500L9 4.500Z" fill="#c4c4c4"/></svg>
<div class="a " style="left:949.70px;top:858.40px;width:27.00px;height:12.00px;background:#fff;border:0.6px solid #dcdcdc;border-radius:2px"></div>
<span class="t" style="left:953.00px;top:862.00px;font-size:6.875px;color:#333;">500</span>
<svg class="a" style="left:968.6px;top:862.6px" width="5.400" height="3.600" viewBox="0 0 10 7"><path d="M1 1L5 5.500L9 1" fill="none" stroke="#222" stroke-width="1.700"/></svg>
<div class="a" style="left:1515.80px;top:859px;width:84.20px;height:12px;overflow:hidden"><span class="t" style="left:0.00px;top:3.00px;font-size:6.875px;color:#444;">View 2,501 - 2,899 of 2,899</span></div>
<div class="a " style="left:1482.40px;top:845.40px;width:28.60px;height:28.60px;background:#3a3838;border-radius:50%;box-shadow:0 1px 3px rgba(0,0,0,.4)"></div>
<svg class="a" style="left:1489.4px;top:853px" width="14.400" height="14" viewBox="0 0 29 28"><path d="M2 2H27V20H9L2 26Z" fill="#fff"/><path d="M6.500 7.500H22.500M6.500 11.500H22.500M6.500 15.500H17" stroke="#3a3838" stroke-width="2"/></svg>
</body></html>
